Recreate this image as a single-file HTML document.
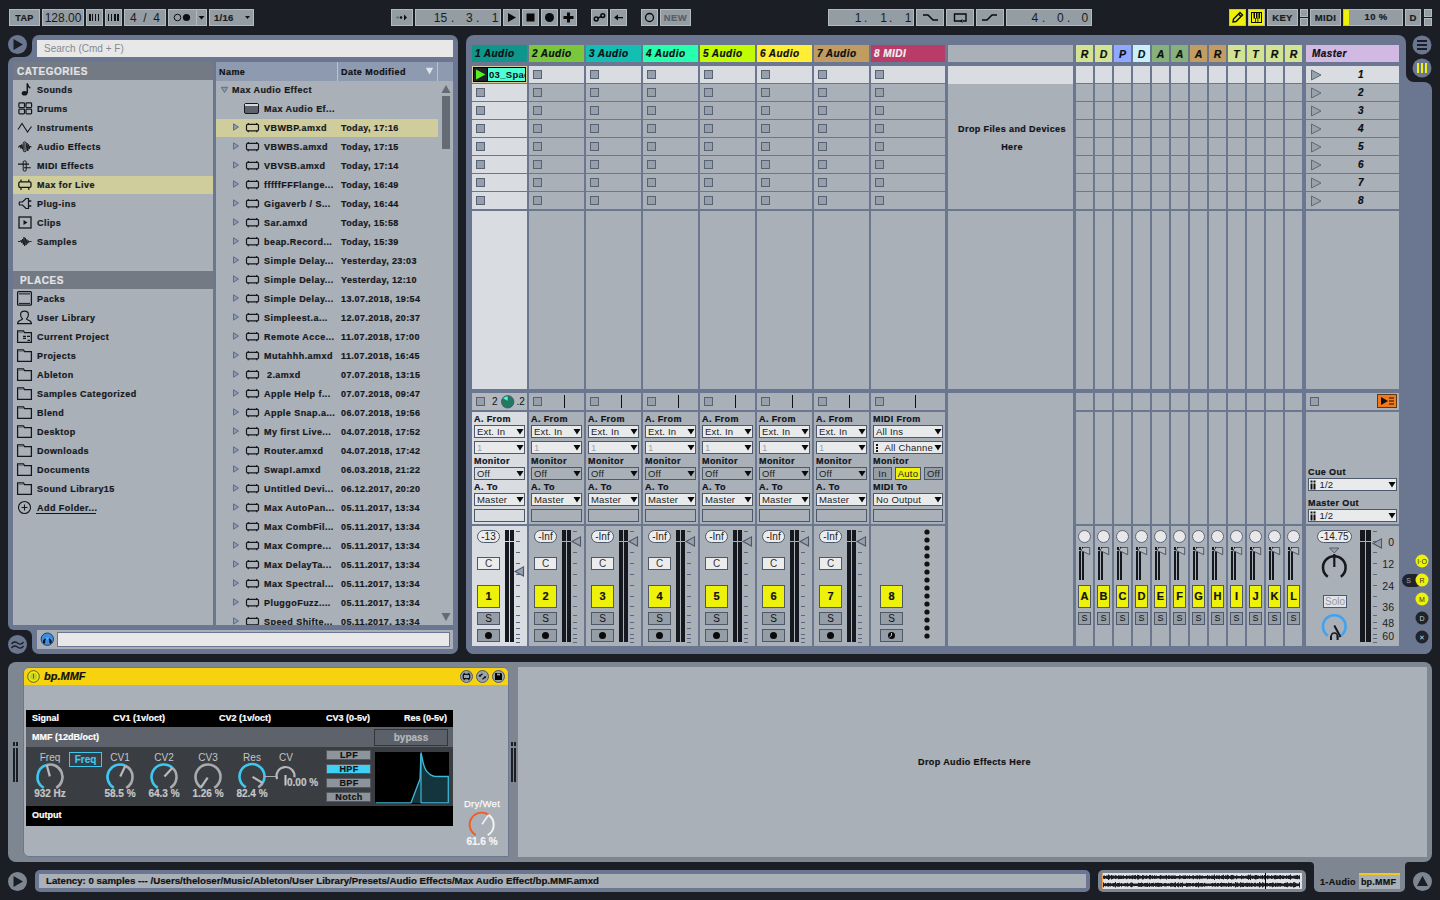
<!DOCTYPE html>
<html><head><meta charset="utf-8"><style>
html,body{margin:0;padding:0;}
body{width:1440px;height:900px;overflow:hidden;position:relative;background:#1b1e25;font-family:"Liberation Sans",sans-serif;}
.a{position:absolute;box-sizing:border-box;}
.t{white-space:nowrap;}
.b{-webkit-text-stroke:0.2px currentColor;}
svg.a{overflow:visible;}
</style></head><body>
<div class="a" style="left:9px;top:9px;width:31px;height:17px;background:#949ca4;border:1px solid #b3bac0;"></div>
<div class="a t b" style="left:9px;top:11.5px;height:13px;line-height:13px;font-size:9px;font-weight:bold;color:#1a1c20;width:31px;text-align:center;letter-spacing:0.4px;">TAP</div>
<div class="a" style="left:42px;top:9px;width:42px;height:17px;background:#949ca4;border:1px solid #b3bac0;"></div>
<div class="a t" style="left:42px;top:9.5px;height:16px;line-height:16px;font-size:12px;font-weight:normal;color:#1a1c20;width:42px;text-align:center;">128.00</div>
<div class="a" style="left:86px;top:9px;width:17px;height:17px;background:#949ca4;border:1px solid #b3bac0;"></div>
<svg class="a" style="left:86px;top:9px;" width="17" height="17" viewBox="0 0 17 17"><rect x="3" y="5" width="2" height="7" fill="#111"/><rect x="6" y="5" width="1" height="7" fill="#111"/><rect x="9" y="5" width="1" height="7" fill="#111"/><rect x="12" y="5" width="1" height="7" fill="#111"/></svg>
<div class="a" style="left:105px;top:9px;width:17px;height:17px;background:#949ca4;border:1px solid #b3bac0;"></div>
<svg class="a" style="left:105px;top:9px;" width="17" height="17" viewBox="0 0 17 17"><rect x="3" y="5" width="1" height="7" fill="#111"/><rect x="6" y="5" width="1" height="7" fill="#111"/><rect x="9" y="5" width="2" height="7" fill="#111"/><rect x="12" y="5" width="2" height="7" fill="#111"/></svg>
<div class="a" style="left:124px;top:9px;width:42px;height:17px;background:#949ca4;border:1px solid #b3bac0;"></div>
<div class="a t" style="left:124px;top:9.5px;height:16px;line-height:16px;font-size:12px;font-weight:normal;color:#1a1c20;width:42px;text-align:center;">4&nbsp;&nbsp;/&nbsp;&nbsp;4</div>
<div class="a" style="left:168px;top:9px;width:39px;height:17px;background:#949ca4;border:1px solid #b3bac0;"></div>
<div class="a" style="left:196px;top:10px;width:1px;height:15px;background:#b3bac0;"></div>
<svg class="a" style="left:168px;top:9px;" width="39" height="17" viewBox="0 0 39 17"><circle cx="9.5" cy="8.5" r="3.3" fill="none" stroke="#111" stroke-width="1"/><circle cx="18.5" cy="8.5" r="3.6" fill="#0d0f14"/><path d="M30.5 7 L36.5 7 L33.5 10.5 Z" fill="#111"/></svg>
<div class="a" style="left:209px;top:9px;width:45px;height:17px;background:#949ca4;border:1px solid #b3bac0;"></div>
<div class="a t b" style="left:214px;top:11.25px;height:13.5px;line-height:13.5px;font-size:9.5px;font-weight:bold;color:#1a1c20;letter-spacing:0.3px;">1/16</div>
<svg class="a" style="left:209px;top:9px;" width="45" height="17" viewBox="0 0 45 17"><path d="M36 7 L41 7 L38.5 10 Z" fill="#111"/></svg>
<div class="a" style="left:391px;top:9px;width:22px;height:17px;background:#949ca4;border:1px solid #b3bac0;"></div>
<svg class="a" style="left:391px;top:9px;" width="22" height="17" viewBox="0 0 22 17"><circle cx="6.5" cy="8.5" r="1.2" fill="#6a7078"/><circle cx="10" cy="8.5" r="1.3" fill="#111"/><path d="M13 5.5 L16 8.5 L13 11.5 Z" fill="#111"/></svg>
<div class="a" style="left:415px;top:9px;width:86px;height:17px;background:#949ca4;border:1px solid #b3bac0;"></div>
<div class="a t" style="left:427.1px;top:9.5px;height:16px;line-height:16px;font-size:12px;font-weight:normal;color:#1a1c20;width:20px;text-align:right;">15</div>
<div class="a t" style="left:452.6px;top:9.5px;height:16px;line-height:16px;font-size:12px;font-weight:normal;color:#1a1c20;width:20px;text-align:right;">3</div>
<div class="a t" style="left:478.5px;top:9.5px;height:16px;line-height:16px;font-size:12px;font-weight:normal;color:#1a1c20;width:20px;text-align:right;">1</div>
<div class="a t" style="left:476px;top:9.5px;height:16px;line-height:16px;font-size:12px;font-weight:normal;color:#1a1c20;">.</div>
<div class="a t" style="left:451px;top:9.5px;height:16px;line-height:16px;font-size:12px;font-weight:normal;color:#1a1c20;">.</div>
<div class="a" style="left:503px;top:9px;width:17px;height:17px;background:#949ca4;border:1px solid #b3bac0;"></div>
<svg class="a" style="left:503px;top:9px;" width="17" height="17" viewBox="0 0 17 17"><path d="M5 4 L13 8.5 L5 13 Z" fill="#0a0a0a"/></svg>
<div class="a" style="left:522px;top:9px;width:17px;height:17px;background:#949ca4;border:1px solid #b3bac0;"></div>
<svg class="a" style="left:522px;top:9px;" width="17" height="17" viewBox="0 0 17 17"><rect x="4.5" y="4.5" width="8" height="8" fill="#0a0a0a"/></svg>
<div class="a" style="left:541px;top:9px;width:17px;height:17px;background:#949ca4;border:1px solid #b3bac0;"></div>
<svg class="a" style="left:541px;top:9px;" width="17" height="17" viewBox="0 0 17 17"><circle cx="8.5" cy="8.5" r="4.5" fill="#0a0c14"/></svg>
<div class="a" style="left:560px;top:9px;width:17px;height:17px;background:#949ca4;border:1px solid #b3bac0;"></div>
<svg class="a" style="left:560px;top:9px;" width="17" height="17" viewBox="0 0 17 17"><rect x="3.5" y="7" width="10" height="3" fill="#0a0a0a"/><rect x="7" y="3.5" width="3" height="10" fill="#0a0a0a"/></svg>
<div class="a" style="left:591px;top:9px;width:17px;height:17px;background:#949ca4;border:1px solid #b3bac0;"></div>
<svg class="a" style="left:591px;top:9px;" width="17" height="17" viewBox="0 0 17 17"><circle cx="5.2" cy="10" r="1.9" fill="none" stroke="#0a0a0a" stroke-width="1.5"/><circle cx="11.8" cy="6.6" r="1.9" fill="none" stroke="#0a0a0a" stroke-width="1.5"/><path d="M6.8 9.1 L10.2 7.5" stroke="#0a0a0a" stroke-width="1.5"/></svg>
<div class="a" style="left:610px;top:9px;width:17px;height:17px;background:#949ca4;border:1px solid #b3bac0;"></div>
<svg class="a" style="left:610px;top:9px;" width="17" height="17" viewBox="0 0 17 17"><path d="M4 8.5 L8 5.5 L8 11.5 Z" fill="#0a0a0a"/><rect x="7" y="8" width="6" height="1.3" fill="#0a0a0a"/></svg>
<div class="a" style="left:641px;top:9px;width:17px;height:17px;background:#949ca4;border:1px solid #b3bac0;"></div>
<svg class="a" style="left:641px;top:9px;" width="17" height="17" viewBox="0 0 17 17"><circle cx="8.5" cy="8.5" r="4" fill="none" stroke="#0a0a0a" stroke-width="1.3"/></svg>
<div class="a" style="left:660px;top:9px;width:31px;height:17px;background:#949ca4;border:1px solid #b3bac0;"></div>
<div class="a t b" style="left:660px;top:11.25px;height:13.5px;line-height:13.5px;font-size:9.5px;font-weight:bold;color:#5a6068;width:31px;text-align:center;letter-spacing:0.4px;">NEW</div>
<div class="a" style="left:828px;top:9px;width:86px;height:17px;background:#949ca4;border:1px solid #b3bac0;"></div>
<div class="a t" style="left:841.5px;top:9.5px;height:16px;line-height:16px;font-size:12px;font-weight:normal;color:#1a1c20;width:20px;text-align:right;">1</div>
<div class="a t" style="left:867.0px;top:9.5px;height:16px;line-height:16px;font-size:12px;font-weight:normal;color:#1a1c20;width:20px;text-align:right;">1</div>
<div class="a t" style="left:891.5px;top:9.5px;height:16px;line-height:16px;font-size:12px;font-weight:normal;color:#1a1c20;width:20px;text-align:right;">1</div>
<div class="a t" style="left:889px;top:9.5px;height:16px;line-height:16px;font-size:12px;font-weight:normal;color:#1a1c20;">.</div>
<div class="a t" style="left:864px;top:9.5px;height:16px;line-height:16px;font-size:12px;font-weight:normal;color:#1a1c20;">.</div>
<div class="a" style="left:916px;top:9px;width:28px;height:17px;background:#949ca4;border:1px solid #b3bac0;"></div>
<svg class="a" style="left:916px;top:9px;" width="28" height="17" viewBox="0 0 28 17"><path d="M7 6 L12 6 L17 11 L22 11" fill="none" stroke="#0a0a0a" stroke-width="1.5"/></svg>
<div class="a" style="left:946px;top:9px;width:28px;height:17px;background:#949ca4;border:1px solid #b3bac0;"></div>
<svg class="a" style="left:946px;top:9px;" width="28" height="17" viewBox="0 0 28 17"><path d="M15 12 L8.5 12 L8.5 5 L20 5 L20 12 L17 12" fill="none" stroke="#0a0a0a" stroke-width="1.4"/><path d="M14 12 L16.5 10 L16.5 14 Z" fill="#0a0a0a"/></svg>
<div class="a" style="left:976px;top:9px;width:28px;height:17px;background:#949ca4;border:1px solid #b3bac0;"></div>
<svg class="a" style="left:976px;top:9px;" width="28" height="17" viewBox="0 0 28 17"><path d="M6 11 L11 11 L16 6 L21 6" fill="none" stroke="#0a0a0a" stroke-width="1.5"/></svg>
<div class="a" style="left:1006px;top:9px;width:86px;height:17px;background:#949ca4;border:1px solid #b3bac0;"></div>
<div class="a t" style="left:1018.0999999999999px;top:9.5px;height:16px;line-height:16px;font-size:12px;font-weight:normal;color:#1a1c20;width:20px;text-align:right;">4</div>
<div class="a t" style="left:1043.6px;top:9.5px;height:16px;line-height:16px;font-size:12px;font-weight:normal;color:#1a1c20;width:20px;text-align:right;">0</div>
<div class="a t" style="left:1068.1px;top:9.5px;height:16px;line-height:16px;font-size:12px;font-weight:normal;color:#1a1c20;width:20px;text-align:right;">0</div>
<div class="a t" style="left:1067px;top:9.5px;height:16px;line-height:16px;font-size:12px;font-weight:normal;color:#1a1c20;">.</div>
<div class="a t" style="left:1042px;top:9.5px;height:16px;line-height:16px;font-size:12px;font-weight:normal;color:#1a1c20;">.</div>
<div class="a" style="left:1229px;top:9px;width:17px;height:17px;background:#eef20a;border:1px solid #b3bac0;"></div>
<svg class="a" style="left:1229px;top:9px;" width="17" height="17" viewBox="0 0 17 17"><path d="M4 13 L4.5 10 L11 3.5 L13.5 6 L7 12.5 Z" fill="none" stroke="#0a0a0a" stroke-width="1.4"/><path d="M9.5 5 L12 7.5" stroke="#0a0a0a" stroke-width="1.2"/></svg>
<div class="a" style="left:1248px;top:9px;width:17px;height:17px;background:#eef20a;border:1px solid #b3bac0;"></div>
<svg class="a" style="left:1248px;top:9px;" width="17" height="17" viewBox="0 0 17 17"><rect x="3.5" y="3.5" width="10" height="10" fill="none" stroke="#0a0a0a" stroke-width="1"/><rect x="5.5" y="3.5" width="1.5" height="6" fill="#0a0a0a"/><rect x="8" y="3.5" width="1.5" height="6" fill="#0a0a0a"/><rect x="10.5" y="3.5" width="1.5" height="6" fill="#0a0a0a"/><rect x="7" y="9" width="0.8" height="4.5" fill="#0a0a0a"/><rect x="9.5" y="9" width="0.8" height="4.5" fill="#0a0a0a"/></svg>
<div class="a" style="left:1267px;top:9px;width:31px;height:17px;background:#949ca4;border:1px solid #b3bac0;"></div>
<div class="a t b" style="left:1267px;top:11.25px;height:13.5px;line-height:13.5px;font-size:9.5px;font-weight:bold;color:#1a1c20;width:31px;text-align:center;letter-spacing:0.3px;">KEY</div>
<div class="a" style="left:1300px;top:9px;width:8px;height:8px;background:#949ca4;border:1px solid #b3bac0;"></div>
<div class="a" style="left:1300px;top:18px;width:8px;height:8px;background:#949ca4;border:1px solid #b3bac0;"></div>
<div class="a" style="left:1310px;top:9px;width:31px;height:17px;background:#949ca4;border:1px solid #b3bac0;"></div>
<div class="a t b" style="left:1310px;top:11.25px;height:13.5px;line-height:13.5px;font-size:9.5px;font-weight:bold;color:#1a1c20;width:31px;text-align:center;letter-spacing:0.3px;">MIDI</div>
<div class="a" style="left:1343px;top:9px;width:60px;height:17px;background:#949ca4;border:1px solid #b3bac0;"></div>
<div class="a" style="left:1344px;top:10px;width:5px;height:15px;background:#eef20a;"></div>
<div class="a t b" style="left:1349px;top:10.25px;height:13.5px;line-height:13.5px;font-size:9.5px;font-weight:bold;color:#1a1c20;width:54px;text-align:center;letter-spacing:0.3px;">10 %</div>
<div class="a" style="left:1405px;top:9px;width:16px;height:17px;background:#949ca4;border:1px solid #b3bac0;"></div>
<div class="a t b" style="left:1405px;top:11.25px;height:13.5px;line-height:13.5px;font-size:9.5px;font-weight:bold;color:#1a1c20;width:16px;text-align:center;">D</div>
<div class="a" style="left:1424px;top:9px;width:8px;height:8px;background:#949ca4;border:1px solid #b3bac0;"></div>
<div class="a" style="left:1424px;top:18px;width:8px;height:8px;background:#949ca4;border:1px solid #b3bac0;"></div>
<div class="a" style="left:32px;top:35px;width:426px;height:35px;background:#6b7790;border-radius:7px 7px 0 0;"></div>
<div class="a" style="left:8px;top:57px;width:450px;height:573px;background:#6b7790;border-radius:7px 7px 0 6px;"></div>
<svg class="a" style="left:24px;top:49px;" width="8" height="8" viewBox="0 0 8 8"><path d="M0 8 L8 8 L8 0 A8 8 0 0 1 0 8 Z" fill="#6b7790"/></svg>
<div class="a" style="left:32px;top:600px;width:426px;height:54px;background:#6b7790;border-radius:0 0 7px 7px;"></div>
<svg class="a" style="left:26px;top:630px;" width="6" height="6" viewBox="0 0 6 6"><path d="M0 0 L6 0 L6 6 A6 6 0 0 0 0 0 Z" fill="#6b7790"/></svg>
<svg class="a" style="left:8px;top:35px;" width="19" height="19" viewBox="0 0 19 19"><circle cx="9.5" cy="9.5" r="9.5" fill="#6b7790"/><path d="M5.5 4 L15 9.5 L5.5 15 Z" fill="#1b1e25"/></svg>
<svg class="a" style="left:8px;top:635px;" width="19" height="19" viewBox="0 0 19 19"><circle cx="9.5" cy="9.5" r="9.5" fill="#6b7790"/><path d="M3.5 9 Q6 5.5 9.5 8 Q13 10.5 15.5 7 M3.5 13 Q6 9.5 9.5 12 Q13 14.5 15.5 11" fill="none" stroke="#1b1e25" stroke-width="1.3"/></svg>
<div class="a" style="left:37px;top:40px;width:416px;height:17px;background:#e8e8e8;"></div>
<div class="a t" style="left:44px;top:41.5px;height:14px;line-height:14px;font-size:10px;font-weight:normal;color:#858a90;">Search (Cmd + F)</div>
<div class="a" style="left:13px;top:62px;width:200px;height:563px;background:#a9b0b7;"></div>
<div class="a" style="left:13px;top:62px;width:200px;height:18px;background:#737a83;"></div>
<div class="a t b" style="left:17px;top:64.5px;height:14px;line-height:14px;font-size:10px;font-weight:bold;color:#e2e4e6;letter-spacing:0.55px;">CATEGORIES</div>
<svg class="a" style="left:18px;top:81.5px;" width="15" height="15" viewBox="0 0 15 15"><path d="M9.3 1.5 L9.3 11" stroke="#15171c" stroke-width="1.5"/><path d="M9.3 1.5 Q10 4.5 12.3 6.3" fill="none" stroke="#15171c" stroke-width="1.3"/><ellipse cx="6.6" cy="11.3" rx="2.9" ry="2.3" fill="#15171c"/></svg>
<div class="a t b" style="left:37px;top:83.5px;height:13px;line-height:13px;font-size:9px;font-weight:bold;color:#15171c;letter-spacing:0.45px;">Sounds</div>
<svg class="a" style="left:18px;top:100.5px;" width="15" height="15" viewBox="0 0 15 15"><rect x="0.9" y="1.9" width="5.6" height="4.6" rx="0.8" fill="none" stroke="#15171c" stroke-width="1.2"/><rect x="8" y="1.9" width="5.6" height="4.6" rx="0.8" fill="none" stroke="#15171c" stroke-width="1.2"/><rect x="0.9" y="8.2" width="5.6" height="4.6" rx="0.8" fill="none" stroke="#15171c" stroke-width="1.2"/><rect x="8" y="8.2" width="5.6" height="4.6" rx="0.8" fill="none" stroke="#15171c" stroke-width="1.2"/></svg>
<div class="a t b" style="left:37px;top:102.5px;height:13px;line-height:13px;font-size:9px;font-weight:bold;color:#15171c;letter-spacing:0.45px;">Drums</div>
<svg class="a" style="left:18px;top:119.5px;" width="15" height="15" viewBox="0 0 15 15"><path d="M0 9.5 L4 3.5 L9.5 12 L13.5 6.5" fill="none" stroke="#15171c" stroke-width="1.1"/></svg>
<div class="a t b" style="left:37px;top:121.5px;height:13px;line-height:13px;font-size:9px;font-weight:bold;color:#15171c;letter-spacing:0.45px;">Instruments</div>
<svg class="a" style="left:18px;top:138.5px;" width="15" height="15" viewBox="0 0 15 15"><path d="M0 7.9 L1.5 7.9 L2.3 6 L3 9.5 L3.8 5.5 L4.6 10 L5 7.9 M8.4 7.9 L9 4 L9.8 12 L10.6 5.5 L11.3 10 L12 7 L12.6 7.9 L13.5 7.9" fill="none" stroke="#15171c" stroke-width="1"/><rect x="5.2" y="2.9" width="3" height="9.8" rx="1.5" fill="#a0a7ae" stroke="#15171c" stroke-width="1"/><path d="M6.7 4 L6.7 11.5" stroke="#15171c" stroke-width="0.7"/></svg>
<div class="a t b" style="left:37px;top:140.5px;height:13px;line-height:13px;font-size:9px;font-weight:bold;color:#15171c;letter-spacing:0.45px;">Audio Effects</div>
<svg class="a" style="left:18px;top:157.5px;" width="15" height="15" viewBox="0 0 15 15"><path d="M0 6.1 L11 6.1 M6 9.7 L12.8 9.7" stroke="#15171c" stroke-width="1.1"/><rect x="5.2" y="2.9" width="3" height="10.2" rx="1.3" fill="none" stroke="#15171c" stroke-width="1"/></svg>
<div class="a t b" style="left:37px;top:159.5px;height:13px;line-height:13px;font-size:9px;font-weight:bold;color:#15171c;letter-spacing:0.45px;">MIDI Effects</div>
<div class="a" style="left:13px;top:176px;width:200px;height:18px;background:#cfcd9c;"></div>
<svg class="a" style="left:18px;top:176.5px;" width="15" height="15" viewBox="0 0 15 15"><rect x="0.8" y="4.9" width="12.2" height="5.4" rx="1.3" fill="none" stroke="#15171c" stroke-width="1.3"/><path d="M3 2.4 L3 4.9 M10.8 2.4 L10.8 4.9 M3 10.3 L3 13 M10.8 10.3 L10.8 13" stroke="#15171c" stroke-width="1.2"/></svg>
<div class="a t b" style="left:37px;top:178.5px;height:13px;line-height:13px;font-size:9px;font-weight:bold;color:#15171c;letter-spacing:0.45px;">Max for Live</div>
<svg class="a" style="left:18px;top:195.5px;" width="15" height="15" viewBox="0 0 15 15"><path d="M10.5 2.5 L10.5 12.5 L8 12.5 L4.5 9 L1.5 9 Q0.8 7.5 1.5 6 L4.5 6 L8 2.5 Z" fill="none" stroke="#15171c" stroke-width="1.2"/><path d="M10.5 5 L13.3 5 M10.5 10 L13.3 10" stroke="#15171c" stroke-width="1.4"/></svg>
<div class="a t b" style="left:37px;top:197.5px;height:13px;line-height:13px;font-size:9px;font-weight:bold;color:#15171c;letter-spacing:0.45px;">Plug-ins</div>
<svg class="a" style="left:18px;top:214.5px;" width="15" height="15" viewBox="0 0 15 15"><rect x="1" y="2" width="12" height="11" fill="none" stroke="#15171c" stroke-width="1.3"/><path d="M5.5 5 L9.5 7.5 L5.5 10 Z" fill="#15171c"/></svg>
<div class="a t b" style="left:37px;top:216.5px;height:13px;line-height:13px;font-size:9px;font-weight:bold;color:#15171c;letter-spacing:0.45px;">Clips</div>
<svg class="a" style="left:18px;top:233.5px;" width="15" height="15" viewBox="0 0 15 15"><path d="M0 7.5 L2.5 7.5 L3.2 6 L3.9 9 L4.6 5 L5.3 10.5 L6 3 L6.7 12 L7.4 4 L8.1 11 L8.8 5.5 L9.5 9.5 L10.2 6.5 L10.9 8.5 L11.5 7.5 L13.5 7.5" fill="none" stroke="#15171c" stroke-width="0.9"/></svg>
<div class="a t b" style="left:37px;top:235.5px;height:13px;line-height:13px;font-size:9px;font-weight:bold;color:#15171c;letter-spacing:0.45px;">Samples</div>
<div class="a" style="left:13px;top:271px;width:200px;height:18px;background:#737a83;"></div>
<div class="a t b" style="left:20px;top:273.5px;height:14px;line-height:14px;font-size:10px;font-weight:bold;color:#e2e4e6;letter-spacing:0.55px;">PLACES</div>
<svg class="a" style="left:16px;top:290px;" width="17" height="17" viewBox="0 0 17 17"><rect x="1.6" y="1.6" width="13.8" height="13.6" rx="1" fill="none" stroke="#15171c" stroke-width="1.25"/><path d="M3 3.9 L14 3.9 M3 13.4 L14 13.4" stroke="#15171c" stroke-width="1"/></svg>
<div class="a t b" style="left:37px;top:292.5px;height:13px;line-height:13px;font-size:9px;font-weight:bold;color:#15171c;letter-spacing:0.45px;">Packs</div>
<svg class="a" style="left:16px;top:309px;" width="17" height="17" viewBox="0 0 17 17"><path d="M1.6 14.6 Q1.6 12 5 11 Q6.5 10.6 6.5 9.8 Q4.6 8.4 4.6 5.5 Q4.6 2.2 8.5 2.2 Q12.4 2.2 12.4 5.5 Q12.4 8.4 10.5 9.8 Q10.5 10.6 12 11 Q15.4 12 15.4 14.6 Z" fill="none" stroke="#15171c" stroke-width="1.2"/></svg>
<div class="a t b" style="left:37px;top:311.5px;height:13px;line-height:13px;font-size:9px;font-weight:bold;color:#15171c;letter-spacing:0.45px;">User Library</div>
<svg class="a" style="left:16px;top:328px;" width="17" height="17" viewBox="0 0 17 17"><path d="M1.6 14.4 L1.6 2.9 L7.5 2.9 L8.5 4.6 L15.4 4.6 L15.4 14.4 Z" fill="none" stroke="#15171c" stroke-width="1.25"/><rect x="2.2" y="3.5" width="5" height="1.3" fill="#6a717a"/><path d="M7 8.4 L10 8.4 M11 8.4 L14 8.4 M7 10.4 L10 10.4 M11.5 12.4 L14 12.4" stroke="#15171c" stroke-width="1.1"/></svg>
<div class="a t b" style="left:37px;top:330.5px;height:13px;line-height:13px;font-size:9px;font-weight:bold;color:#15171c;letter-spacing:0.45px;">Current Project</div>
<svg class="a" style="left:16px;top:347px;" width="17" height="17" viewBox="0 0 17 17"><path d="M1.6 14.4 L1.6 2.9 L7.5 2.9 L8.5 4.6 L15.4 4.6 L15.4 14.4 Z" fill="none" stroke="#15171c" stroke-width="1.25"/><rect x="2.2" y="3.5" width="5" height="1.3" fill="#6a717a"/></svg>
<div class="a t b" style="left:37px;top:349.5px;height:13px;line-height:13px;font-size:9px;font-weight:bold;color:#15171c;letter-spacing:0.45px;">Projects</div>
<svg class="a" style="left:16px;top:366px;" width="17" height="17" viewBox="0 0 17 17"><path d="M1.6 14.4 L1.6 2.9 L7.5 2.9 L8.5 4.6 L15.4 4.6 L15.4 14.4 Z" fill="none" stroke="#15171c" stroke-width="1.25"/><rect x="2.2" y="3.5" width="5" height="1.3" fill="#6a717a"/></svg>
<div class="a t b" style="left:37px;top:368.5px;height:13px;line-height:13px;font-size:9px;font-weight:bold;color:#15171c;letter-spacing:0.45px;">Ableton</div>
<svg class="a" style="left:16px;top:385px;" width="17" height="17" viewBox="0 0 17 17"><path d="M1.6 14.4 L1.6 2.9 L7.5 2.9 L8.5 4.6 L15.4 4.6 L15.4 14.4 Z" fill="none" stroke="#15171c" stroke-width="1.25"/><rect x="2.2" y="3.5" width="5" height="1.3" fill="#6a717a"/></svg>
<div class="a t b" style="left:37px;top:387.5px;height:13px;line-height:13px;font-size:9px;font-weight:bold;color:#15171c;letter-spacing:0.45px;">Samples Categorized</div>
<svg class="a" style="left:16px;top:404px;" width="17" height="17" viewBox="0 0 17 17"><path d="M1.6 14.4 L1.6 2.9 L7.5 2.9 L8.5 4.6 L15.4 4.6 L15.4 14.4 Z" fill="none" stroke="#15171c" stroke-width="1.25"/><rect x="2.2" y="3.5" width="5" height="1.3" fill="#6a717a"/></svg>
<div class="a t b" style="left:37px;top:406.5px;height:13px;line-height:13px;font-size:9px;font-weight:bold;color:#15171c;letter-spacing:0.45px;">Blend</div>
<svg class="a" style="left:16px;top:423px;" width="17" height="17" viewBox="0 0 17 17"><path d="M1.6 14.4 L1.6 2.9 L7.5 2.9 L8.5 4.6 L15.4 4.6 L15.4 14.4 Z" fill="none" stroke="#15171c" stroke-width="1.25"/><rect x="2.2" y="3.5" width="5" height="1.3" fill="#6a717a"/></svg>
<div class="a t b" style="left:37px;top:425.5px;height:13px;line-height:13px;font-size:9px;font-weight:bold;color:#15171c;letter-spacing:0.45px;">Desktop</div>
<svg class="a" style="left:16px;top:442px;" width="17" height="17" viewBox="0 0 17 17"><path d="M1.6 14.4 L1.6 2.9 L7.5 2.9 L8.5 4.6 L15.4 4.6 L15.4 14.4 Z" fill="none" stroke="#15171c" stroke-width="1.25"/><rect x="2.2" y="3.5" width="5" height="1.3" fill="#6a717a"/></svg>
<div class="a t b" style="left:37px;top:444.5px;height:13px;line-height:13px;font-size:9px;font-weight:bold;color:#15171c;letter-spacing:0.45px;">Downloads</div>
<svg class="a" style="left:16px;top:461px;" width="17" height="17" viewBox="0 0 17 17"><path d="M1.6 14.4 L1.6 2.9 L7.5 2.9 L8.5 4.6 L15.4 4.6 L15.4 14.4 Z" fill="none" stroke="#15171c" stroke-width="1.25"/><rect x="2.2" y="3.5" width="5" height="1.3" fill="#6a717a"/></svg>
<div class="a t b" style="left:37px;top:463.5px;height:13px;line-height:13px;font-size:9px;font-weight:bold;color:#15171c;letter-spacing:0.45px;">Documents</div>
<svg class="a" style="left:16px;top:480px;" width="17" height="17" viewBox="0 0 17 17"><path d="M1.6 14.4 L1.6 2.9 L7.5 2.9 L8.5 4.6 L15.4 4.6 L15.4 14.4 Z" fill="none" stroke="#15171c" stroke-width="1.25"/><rect x="2.2" y="3.5" width="5" height="1.3" fill="#6a717a"/></svg>
<div class="a t b" style="left:37px;top:482.5px;height:13px;line-height:13px;font-size:9px;font-weight:bold;color:#15171c;letter-spacing:0.45px;">Sound Library15</div>
<svg class="a" style="left:17px;top:499.5px;" width="15" height="15" viewBox="0 0 15 15"><circle cx="7.5" cy="7.5" r="6" fill="none" stroke="#15171c" stroke-width="1.1"/><path d="M7.5 4.5 L7.5 10.5 M4.5 7.5 L10.5 7.5" stroke="#15171c" stroke-width="1.1"/></svg>
<div class="a t b" style="left:37px;top:501.5px;height:13px;line-height:13px;font-size:9px;font-weight:bold;color:#15171c;letter-spacing:0.45px;">Add Folder...</div>
<div class="a" style="left:36px;top:513px;width:60px;height:1px;background:#15171c;"></div>
<div class="a" style="left:216px;top:62px;width:237px;height:563px;background:#a9b0b7;"></div>
<div class="a" style="left:216px;top:62px;width:237px;height:19px;background:#8d9ab0;"></div>
<div class="a t b" style="left:219px;top:65.5px;height:13px;line-height:13px;font-size:9px;font-weight:bold;color:#111;letter-spacing:0.45px;">Name</div>
<div class="a" style="left:337px;top:62px;width:1px;height:19px;background:#b8c2d2;"></div>
<div class="a t b" style="left:341px;top:65.5px;height:13px;line-height:13px;font-size:9px;font-weight:bold;color:#111;letter-spacing:0.45px;">Date Modified</div>
<svg class="a" style="left:425px;top:66px;" width="10" height="10" viewBox="0 0 10 10"><path d="M0.8 1.8 L8.2 1.8 L4.5 8.4 Z" fill="#dfe3ea"/></svg>
<div class="a" style="left:437px;top:62px;width:1px;height:19px;background:#b8c2d2;"></div>
<svg class="a" style="left:441px;top:84px;" width="10" height="10" viewBox="0 0 10 10"><path d="M5 1 L9.5 9 L0.5 9 Z" fill="#646b74"/></svg>
<div class="a" style="left:442px;top:96px;width:8px;height:53px;background:#646b74;"></div>
<svg class="a" style="left:441px;top:612px;" width="10" height="10" viewBox="0 0 10 10"><path d="M0.5 1 L9.5 1 L5 9 Z" fill="#646b74"/></svg>
<svg class="a" style="left:220px;top:86px;" width="10" height="10" viewBox="0 0 10 10"><path d="M1.3 1.3 L7.7 1.3 L4.5 6.5 Z" fill="#8d9ab0" stroke="#5e6d88" stroke-width="1"/></svg>
<div class="a t b" style="left:232px;top:83.5px;height:13px;line-height:13px;font-size:9px;font-weight:bold;color:#15171c;letter-spacing:0.45px;">Max Audio Effect</div>
<svg class="a" style="left:243px;top:102px;" width="17" height="13" viewBox="0 0 17 13"><rect x="1.5" y="1.5" width="14" height="10" rx="1.5" fill="#5c636d" stroke="#15171c" stroke-width="1"/><rect x="2" y="2" width="13" height="2" fill="#d6d9dc"/></svg>
<div class="a t b" style="left:264px;top:102.5px;height:13px;line-height:13px;font-size:9px;font-weight:bold;color:#15171c;letter-spacing:0.45px;">Max Audio Ef...</div>
<div class="a" style="left:216px;top:119px;width:222px;height:18px;background:#cfcd9c;"></div>
<svg class="a" style="left:232px;top:123px;" width="10" height="10" viewBox="0 0 10 10"><path d="M1.5 0.8 L6.5 4 L1.5 7.2 Z" fill="#8d9ab0" stroke="#5e6d88" stroke-width="1"/></svg>
<svg class="a" style="left:244px;top:120.5px;" width="17" height="13" viewBox="0 0 17 13"><rect x="2.5" y="3.3" width="12" height="6.5" rx="1.3" fill="none" stroke="#15171c" stroke-width="1.2"/><path d="M4.3 2 L4.3 3.3 M12.7 2 L12.7 3.3 M4.3 9.8 L4.3 11.2 M12.7 9.8 L12.7 11.2" stroke="#15171c" stroke-width="1.2"/></svg>
<div class="a t b" style="left:264px;top:121.5px;height:13px;line-height:13px;font-size:9px;font-weight:bold;color:#15171c;letter-spacing:0.45px;">VBWBP.amxd</div>
<div class="a t b" style="left:341px;top:121.5px;height:13px;line-height:13px;font-size:9px;font-weight:bold;color:#15171c;letter-spacing:0.37px;">Today, 17:16</div>
<svg class="a" style="left:232px;top:142px;" width="10" height="10" viewBox="0 0 10 10"><path d="M1.5 0.8 L6.5 4 L1.5 7.2 Z" fill="#8d9ab0" stroke="#5e6d88" stroke-width="1"/></svg>
<svg class="a" style="left:244px;top:139.5px;" width="17" height="13" viewBox="0 0 17 13"><rect x="2.5" y="3.3" width="12" height="6.5" rx="1.3" fill="none" stroke="#15171c" stroke-width="1.2"/><path d="M4.3 2 L4.3 3.3 M12.7 2 L12.7 3.3 M4.3 9.8 L4.3 11.2 M12.7 9.8 L12.7 11.2" stroke="#15171c" stroke-width="1.2"/></svg>
<div class="a t b" style="left:264px;top:140.5px;height:13px;line-height:13px;font-size:9px;font-weight:bold;color:#15171c;letter-spacing:0.45px;">VBWBS.amxd</div>
<div class="a t b" style="left:341px;top:140.5px;height:13px;line-height:13px;font-size:9px;font-weight:bold;color:#15171c;letter-spacing:0.37px;">Today, 17:15</div>
<svg class="a" style="left:232px;top:161px;" width="10" height="10" viewBox="0 0 10 10"><path d="M1.5 0.8 L6.5 4 L1.5 7.2 Z" fill="#8d9ab0" stroke="#5e6d88" stroke-width="1"/></svg>
<svg class="a" style="left:244px;top:158.5px;" width="17" height="13" viewBox="0 0 17 13"><rect x="2.5" y="3.3" width="12" height="6.5" rx="1.3" fill="none" stroke="#15171c" stroke-width="1.2"/><path d="M4.3 2 L4.3 3.3 M12.7 2 L12.7 3.3 M4.3 9.8 L4.3 11.2 M12.7 9.8 L12.7 11.2" stroke="#15171c" stroke-width="1.2"/></svg>
<div class="a t b" style="left:264px;top:159.5px;height:13px;line-height:13px;font-size:9px;font-weight:bold;color:#15171c;letter-spacing:0.45px;">VBVSB.amxd</div>
<div class="a t b" style="left:341px;top:159.5px;height:13px;line-height:13px;font-size:9px;font-weight:bold;color:#15171c;letter-spacing:0.37px;">Today, 17:14</div>
<svg class="a" style="left:232px;top:180px;" width="10" height="10" viewBox="0 0 10 10"><path d="M1.5 0.8 L6.5 4 L1.5 7.2 Z" fill="#8d9ab0" stroke="#5e6d88" stroke-width="1"/></svg>
<svg class="a" style="left:244px;top:177.5px;" width="17" height="13" viewBox="0 0 17 13"><rect x="2.5" y="3.3" width="12" height="6.5" rx="1.3" fill="none" stroke="#15171c" stroke-width="1.2"/><path d="M4.3 2 L4.3 3.3 M12.7 2 L12.7 3.3 M4.3 9.8 L4.3 11.2 M12.7 9.8 L12.7 11.2" stroke="#15171c" stroke-width="1.2"/></svg>
<div class="a t b" style="left:264px;top:178.5px;height:13px;line-height:13px;font-size:9px;font-weight:bold;color:#15171c;letter-spacing:0.45px;">fffffFFFlange...</div>
<div class="a t b" style="left:341px;top:178.5px;height:13px;line-height:13px;font-size:9px;font-weight:bold;color:#15171c;letter-spacing:0.37px;">Today, 16:49</div>
<svg class="a" style="left:232px;top:199px;" width="10" height="10" viewBox="0 0 10 10"><path d="M1.5 0.8 L6.5 4 L1.5 7.2 Z" fill="#8d9ab0" stroke="#5e6d88" stroke-width="1"/></svg>
<svg class="a" style="left:244px;top:196.5px;" width="17" height="13" viewBox="0 0 17 13"><rect x="2.5" y="3.3" width="12" height="6.5" rx="1.3" fill="none" stroke="#15171c" stroke-width="1.2"/><path d="M4.3 2 L4.3 3.3 M12.7 2 L12.7 3.3 M4.3 9.8 L4.3 11.2 M12.7 9.8 L12.7 11.2" stroke="#15171c" stroke-width="1.2"/></svg>
<div class="a t b" style="left:264px;top:197.5px;height:13px;line-height:13px;font-size:9px;font-weight:bold;color:#15171c;letter-spacing:0.45px;">Gigaverb / S...</div>
<div class="a t b" style="left:341px;top:197.5px;height:13px;line-height:13px;font-size:9px;font-weight:bold;color:#15171c;letter-spacing:0.37px;">Today, 16:44</div>
<svg class="a" style="left:232px;top:218px;" width="10" height="10" viewBox="0 0 10 10"><path d="M1.5 0.8 L6.5 4 L1.5 7.2 Z" fill="#8d9ab0" stroke="#5e6d88" stroke-width="1"/></svg>
<svg class="a" style="left:244px;top:215.5px;" width="17" height="13" viewBox="0 0 17 13"><rect x="2.5" y="3.3" width="12" height="6.5" rx="1.3" fill="none" stroke="#15171c" stroke-width="1.2"/><path d="M4.3 2 L4.3 3.3 M12.7 2 L12.7 3.3 M4.3 9.8 L4.3 11.2 M12.7 9.8 L12.7 11.2" stroke="#15171c" stroke-width="1.2"/></svg>
<div class="a t b" style="left:264px;top:216.5px;height:13px;line-height:13px;font-size:9px;font-weight:bold;color:#15171c;letter-spacing:0.45px;">Sar.amxd</div>
<div class="a t b" style="left:341px;top:216.5px;height:13px;line-height:13px;font-size:9px;font-weight:bold;color:#15171c;letter-spacing:0.37px;">Today, 15:58</div>
<svg class="a" style="left:232px;top:237px;" width="10" height="10" viewBox="0 0 10 10"><path d="M1.5 0.8 L6.5 4 L1.5 7.2 Z" fill="#8d9ab0" stroke="#5e6d88" stroke-width="1"/></svg>
<svg class="a" style="left:244px;top:234.5px;" width="17" height="13" viewBox="0 0 17 13"><rect x="2.5" y="3.3" width="12" height="6.5" rx="1.3" fill="none" stroke="#15171c" stroke-width="1.2"/><path d="M4.3 2 L4.3 3.3 M12.7 2 L12.7 3.3 M4.3 9.8 L4.3 11.2 M12.7 9.8 L12.7 11.2" stroke="#15171c" stroke-width="1.2"/></svg>
<div class="a t b" style="left:264px;top:235.5px;height:13px;line-height:13px;font-size:9px;font-weight:bold;color:#15171c;letter-spacing:0.45px;">beap.Record...</div>
<div class="a t b" style="left:341px;top:235.5px;height:13px;line-height:13px;font-size:9px;font-weight:bold;color:#15171c;letter-spacing:0.37px;">Today, 15:39</div>
<svg class="a" style="left:232px;top:256px;" width="10" height="10" viewBox="0 0 10 10"><path d="M1.5 0.8 L6.5 4 L1.5 7.2 Z" fill="#8d9ab0" stroke="#5e6d88" stroke-width="1"/></svg>
<svg class="a" style="left:244px;top:253.5px;" width="17" height="13" viewBox="0 0 17 13"><rect x="2.5" y="3.3" width="12" height="6.5" rx="1.3" fill="none" stroke="#15171c" stroke-width="1.2"/><path d="M4.3 2 L4.3 3.3 M12.7 2 L12.7 3.3 M4.3 9.8 L4.3 11.2 M12.7 9.8 L12.7 11.2" stroke="#15171c" stroke-width="1.2"/></svg>
<div class="a t b" style="left:264px;top:254.5px;height:13px;line-height:13px;font-size:9px;font-weight:bold;color:#15171c;letter-spacing:0.45px;">Simple Delay...</div>
<div class="a t b" style="left:341px;top:254.5px;height:13px;line-height:13px;font-size:9px;font-weight:bold;color:#15171c;letter-spacing:0.37px;">Yesterday, 23:03</div>
<svg class="a" style="left:232px;top:275px;" width="10" height="10" viewBox="0 0 10 10"><path d="M1.5 0.8 L6.5 4 L1.5 7.2 Z" fill="#8d9ab0" stroke="#5e6d88" stroke-width="1"/></svg>
<svg class="a" style="left:244px;top:272.5px;" width="17" height="13" viewBox="0 0 17 13"><rect x="2.5" y="3.3" width="12" height="6.5" rx="1.3" fill="none" stroke="#15171c" stroke-width="1.2"/><path d="M4.3 2 L4.3 3.3 M12.7 2 L12.7 3.3 M4.3 9.8 L4.3 11.2 M12.7 9.8 L12.7 11.2" stroke="#15171c" stroke-width="1.2"/></svg>
<div class="a t b" style="left:264px;top:273.5px;height:13px;line-height:13px;font-size:9px;font-weight:bold;color:#15171c;letter-spacing:0.45px;">Simple Delay...</div>
<div class="a t b" style="left:341px;top:273.5px;height:13px;line-height:13px;font-size:9px;font-weight:bold;color:#15171c;letter-spacing:0.37px;">Yesterday, 12:10</div>
<svg class="a" style="left:232px;top:294px;" width="10" height="10" viewBox="0 0 10 10"><path d="M1.5 0.8 L6.5 4 L1.5 7.2 Z" fill="#8d9ab0" stroke="#5e6d88" stroke-width="1"/></svg>
<svg class="a" style="left:244px;top:291.5px;" width="17" height="13" viewBox="0 0 17 13"><rect x="2.5" y="3.3" width="12" height="6.5" rx="1.3" fill="none" stroke="#15171c" stroke-width="1.2"/><path d="M4.3 2 L4.3 3.3 M12.7 2 L12.7 3.3 M4.3 9.8 L4.3 11.2 M12.7 9.8 L12.7 11.2" stroke="#15171c" stroke-width="1.2"/></svg>
<div class="a t b" style="left:264px;top:292.5px;height:13px;line-height:13px;font-size:9px;font-weight:bold;color:#15171c;letter-spacing:0.45px;">Simple Delay...</div>
<div class="a t b" style="left:341px;top:292.5px;height:13px;line-height:13px;font-size:9px;font-weight:bold;color:#15171c;letter-spacing:0.37px;">13.07.2018, 19:54</div>
<svg class="a" style="left:232px;top:313px;" width="10" height="10" viewBox="0 0 10 10"><path d="M1.5 0.8 L6.5 4 L1.5 7.2 Z" fill="#8d9ab0" stroke="#5e6d88" stroke-width="1"/></svg>
<svg class="a" style="left:244px;top:310.5px;" width="17" height="13" viewBox="0 0 17 13"><rect x="2.5" y="3.3" width="12" height="6.5" rx="1.3" fill="none" stroke="#15171c" stroke-width="1.2"/><path d="M4.3 2 L4.3 3.3 M12.7 2 L12.7 3.3 M4.3 9.8 L4.3 11.2 M12.7 9.8 L12.7 11.2" stroke="#15171c" stroke-width="1.2"/></svg>
<div class="a t b" style="left:264px;top:311.5px;height:13px;line-height:13px;font-size:9px;font-weight:bold;color:#15171c;letter-spacing:0.45px;">Simpleest.a...</div>
<div class="a t b" style="left:341px;top:311.5px;height:13px;line-height:13px;font-size:9px;font-weight:bold;color:#15171c;letter-spacing:0.37px;">12.07.2018, 20:37</div>
<svg class="a" style="left:232px;top:332px;" width="10" height="10" viewBox="0 0 10 10"><path d="M1.5 0.8 L6.5 4 L1.5 7.2 Z" fill="#8d9ab0" stroke="#5e6d88" stroke-width="1"/></svg>
<svg class="a" style="left:244px;top:329.5px;" width="17" height="13" viewBox="0 0 17 13"><rect x="2.5" y="3.3" width="12" height="6.5" rx="1.3" fill="none" stroke="#15171c" stroke-width="1.2"/><path d="M4.3 2 L4.3 3.3 M12.7 2 L12.7 3.3 M4.3 9.8 L4.3 11.2 M12.7 9.8 L12.7 11.2" stroke="#15171c" stroke-width="1.2"/></svg>
<div class="a t b" style="left:264px;top:330.5px;height:13px;line-height:13px;font-size:9px;font-weight:bold;color:#15171c;letter-spacing:0.45px;">Remote Acce...</div>
<div class="a t b" style="left:341px;top:330.5px;height:13px;line-height:13px;font-size:9px;font-weight:bold;color:#15171c;letter-spacing:0.37px;">11.07.2018, 17:00</div>
<svg class="a" style="left:232px;top:351px;" width="10" height="10" viewBox="0 0 10 10"><path d="M1.5 0.8 L6.5 4 L1.5 7.2 Z" fill="#8d9ab0" stroke="#5e6d88" stroke-width="1"/></svg>
<svg class="a" style="left:244px;top:348.5px;" width="17" height="13" viewBox="0 0 17 13"><rect x="2.5" y="3.3" width="12" height="6.5" rx="1.3" fill="none" stroke="#15171c" stroke-width="1.2"/><path d="M4.3 2 L4.3 3.3 M12.7 2 L12.7 3.3 M4.3 9.8 L4.3 11.2 M12.7 9.8 L12.7 11.2" stroke="#15171c" stroke-width="1.2"/></svg>
<div class="a t b" style="left:264px;top:349.5px;height:13px;line-height:13px;font-size:9px;font-weight:bold;color:#15171c;letter-spacing:0.45px;">Mutahhh.amxd</div>
<div class="a t b" style="left:341px;top:349.5px;height:13px;line-height:13px;font-size:9px;font-weight:bold;color:#15171c;letter-spacing:0.37px;">11.07.2018, 16:45</div>
<svg class="a" style="left:232px;top:370px;" width="10" height="10" viewBox="0 0 10 10"><path d="M1.5 0.8 L6.5 4 L1.5 7.2 Z" fill="#8d9ab0" stroke="#5e6d88" stroke-width="1"/></svg>
<svg class="a" style="left:244px;top:367.5px;" width="17" height="13" viewBox="0 0 17 13"><rect x="2.5" y="3.3" width="12" height="6.5" rx="1.3" fill="none" stroke="#15171c" stroke-width="1.2"/><path d="M4.3 2 L4.3 3.3 M12.7 2 L12.7 3.3 M4.3 9.8 L4.3 11.2 M12.7 9.8 L12.7 11.2" stroke="#15171c" stroke-width="1.2"/></svg>
<div class="a t b" style="left:264px;top:368.5px;height:13px;line-height:13px;font-size:9px;font-weight:bold;color:#15171c;letter-spacing:0.45px;">&nbsp;2.amxd</div>
<div class="a t b" style="left:341px;top:368.5px;height:13px;line-height:13px;font-size:9px;font-weight:bold;color:#15171c;letter-spacing:0.37px;">07.07.2018, 13:15</div>
<svg class="a" style="left:232px;top:389px;" width="10" height="10" viewBox="0 0 10 10"><path d="M1.5 0.8 L6.5 4 L1.5 7.2 Z" fill="#8d9ab0" stroke="#5e6d88" stroke-width="1"/></svg>
<svg class="a" style="left:244px;top:386.5px;" width="17" height="13" viewBox="0 0 17 13"><rect x="2.5" y="3.3" width="12" height="6.5" rx="1.3" fill="none" stroke="#15171c" stroke-width="1.2"/><path d="M4.3 2 L4.3 3.3 M12.7 2 L12.7 3.3 M4.3 9.8 L4.3 11.2 M12.7 9.8 L12.7 11.2" stroke="#15171c" stroke-width="1.2"/></svg>
<div class="a t b" style="left:264px;top:387.5px;height:13px;line-height:13px;font-size:9px;font-weight:bold;color:#15171c;letter-spacing:0.45px;">Apple Help f...</div>
<div class="a t b" style="left:341px;top:387.5px;height:13px;line-height:13px;font-size:9px;font-weight:bold;color:#15171c;letter-spacing:0.37px;">07.07.2018, 09:47</div>
<svg class="a" style="left:232px;top:408px;" width="10" height="10" viewBox="0 0 10 10"><path d="M1.5 0.8 L6.5 4 L1.5 7.2 Z" fill="#8d9ab0" stroke="#5e6d88" stroke-width="1"/></svg>
<svg class="a" style="left:244px;top:405.5px;" width="17" height="13" viewBox="0 0 17 13"><rect x="2.5" y="3.3" width="12" height="6.5" rx="1.3" fill="none" stroke="#15171c" stroke-width="1.2"/><path d="M4.3 2 L4.3 3.3 M12.7 2 L12.7 3.3 M4.3 9.8 L4.3 11.2 M12.7 9.8 L12.7 11.2" stroke="#15171c" stroke-width="1.2"/></svg>
<div class="a t b" style="left:264px;top:406.5px;height:13px;line-height:13px;font-size:9px;font-weight:bold;color:#15171c;letter-spacing:0.45px;">Apple Snap.a...</div>
<div class="a t b" style="left:341px;top:406.5px;height:13px;line-height:13px;font-size:9px;font-weight:bold;color:#15171c;letter-spacing:0.37px;">06.07.2018, 19:56</div>
<svg class="a" style="left:232px;top:427px;" width="10" height="10" viewBox="0 0 10 10"><path d="M1.5 0.8 L6.5 4 L1.5 7.2 Z" fill="#8d9ab0" stroke="#5e6d88" stroke-width="1"/></svg>
<svg class="a" style="left:244px;top:424.5px;" width="17" height="13" viewBox="0 0 17 13"><rect x="2.5" y="3.3" width="12" height="6.5" rx="1.3" fill="none" stroke="#15171c" stroke-width="1.2"/><path d="M4.3 2 L4.3 3.3 M12.7 2 L12.7 3.3 M4.3 9.8 L4.3 11.2 M12.7 9.8 L12.7 11.2" stroke="#15171c" stroke-width="1.2"/></svg>
<div class="a t b" style="left:264px;top:425.5px;height:13px;line-height:13px;font-size:9px;font-weight:bold;color:#15171c;letter-spacing:0.45px;">My first Live...</div>
<div class="a t b" style="left:341px;top:425.5px;height:13px;line-height:13px;font-size:9px;font-weight:bold;color:#15171c;letter-spacing:0.37px;">04.07.2018, 17:52</div>
<svg class="a" style="left:232px;top:446px;" width="10" height="10" viewBox="0 0 10 10"><path d="M1.5 0.8 L6.5 4 L1.5 7.2 Z" fill="#8d9ab0" stroke="#5e6d88" stroke-width="1"/></svg>
<svg class="a" style="left:244px;top:443.5px;" width="17" height="13" viewBox="0 0 17 13"><rect x="2.5" y="3.3" width="12" height="6.5" rx="1.3" fill="none" stroke="#15171c" stroke-width="1.2"/><path d="M4.3 2 L4.3 3.3 M12.7 2 L12.7 3.3 M4.3 9.8 L4.3 11.2 M12.7 9.8 L12.7 11.2" stroke="#15171c" stroke-width="1.2"/></svg>
<div class="a t b" style="left:264px;top:444.5px;height:13px;line-height:13px;font-size:9px;font-weight:bold;color:#15171c;letter-spacing:0.45px;">Router.amxd</div>
<div class="a t b" style="left:341px;top:444.5px;height:13px;line-height:13px;font-size:9px;font-weight:bold;color:#15171c;letter-spacing:0.37px;">04.07.2018, 17:42</div>
<svg class="a" style="left:232px;top:465px;" width="10" height="10" viewBox="0 0 10 10"><path d="M1.5 0.8 L6.5 4 L1.5 7.2 Z" fill="#8d9ab0" stroke="#5e6d88" stroke-width="1"/></svg>
<svg class="a" style="left:244px;top:462.5px;" width="17" height="13" viewBox="0 0 17 13"><rect x="2.5" y="3.3" width="12" height="6.5" rx="1.3" fill="none" stroke="#15171c" stroke-width="1.2"/><path d="M4.3 2 L4.3 3.3 M12.7 2 L12.7 3.3 M4.3 9.8 L4.3 11.2 M12.7 9.8 L12.7 11.2" stroke="#15171c" stroke-width="1.2"/></svg>
<div class="a t b" style="left:264px;top:463.5px;height:13px;line-height:13px;font-size:9px;font-weight:bold;color:#15171c;letter-spacing:0.45px;">Swap!.amxd</div>
<div class="a t b" style="left:341px;top:463.5px;height:13px;line-height:13px;font-size:9px;font-weight:bold;color:#15171c;letter-spacing:0.37px;">06.03.2018, 21:22</div>
<svg class="a" style="left:232px;top:484px;" width="10" height="10" viewBox="0 0 10 10"><path d="M1.5 0.8 L6.5 4 L1.5 7.2 Z" fill="#8d9ab0" stroke="#5e6d88" stroke-width="1"/></svg>
<svg class="a" style="left:244px;top:481.5px;" width="17" height="13" viewBox="0 0 17 13"><rect x="2.5" y="3.3" width="12" height="6.5" rx="1.3" fill="none" stroke="#15171c" stroke-width="1.2"/><path d="M4.3 2 L4.3 3.3 M12.7 2 L12.7 3.3 M4.3 9.8 L4.3 11.2 M12.7 9.8 L12.7 11.2" stroke="#15171c" stroke-width="1.2"/></svg>
<div class="a t b" style="left:264px;top:482.5px;height:13px;line-height:13px;font-size:9px;font-weight:bold;color:#15171c;letter-spacing:0.45px;">Untitled Devi...</div>
<div class="a t b" style="left:341px;top:482.5px;height:13px;line-height:13px;font-size:9px;font-weight:bold;color:#15171c;letter-spacing:0.37px;">06.12.2017, 20:20</div>
<svg class="a" style="left:232px;top:503px;" width="10" height="10" viewBox="0 0 10 10"><path d="M1.5 0.8 L6.5 4 L1.5 7.2 Z" fill="#8d9ab0" stroke="#5e6d88" stroke-width="1"/></svg>
<svg class="a" style="left:244px;top:500.5px;" width="17" height="13" viewBox="0 0 17 13"><rect x="2.5" y="3.3" width="12" height="6.5" rx="1.3" fill="none" stroke="#15171c" stroke-width="1.2"/><path d="M4.3 2 L4.3 3.3 M12.7 2 L12.7 3.3 M4.3 9.8 L4.3 11.2 M12.7 9.8 L12.7 11.2" stroke="#15171c" stroke-width="1.2"/></svg>
<div class="a t b" style="left:264px;top:501.5px;height:13px;line-height:13px;font-size:9px;font-weight:bold;color:#15171c;letter-spacing:0.45px;">Max AutoPan...</div>
<div class="a t b" style="left:341px;top:501.5px;height:13px;line-height:13px;font-size:9px;font-weight:bold;color:#15171c;letter-spacing:0.37px;">05.11.2017, 13:34</div>
<svg class="a" style="left:232px;top:522px;" width="10" height="10" viewBox="0 0 10 10"><path d="M1.5 0.8 L6.5 4 L1.5 7.2 Z" fill="#8d9ab0" stroke="#5e6d88" stroke-width="1"/></svg>
<svg class="a" style="left:244px;top:519.5px;" width="17" height="13" viewBox="0 0 17 13"><rect x="2.5" y="3.3" width="12" height="6.5" rx="1.3" fill="none" stroke="#15171c" stroke-width="1.2"/><path d="M4.3 2 L4.3 3.3 M12.7 2 L12.7 3.3 M4.3 9.8 L4.3 11.2 M12.7 9.8 L12.7 11.2" stroke="#15171c" stroke-width="1.2"/></svg>
<div class="a t b" style="left:264px;top:520.5px;height:13px;line-height:13px;font-size:9px;font-weight:bold;color:#15171c;letter-spacing:0.45px;">Max CombFil...</div>
<div class="a t b" style="left:341px;top:520.5px;height:13px;line-height:13px;font-size:9px;font-weight:bold;color:#15171c;letter-spacing:0.37px;">05.11.2017, 13:34</div>
<svg class="a" style="left:232px;top:541px;" width="10" height="10" viewBox="0 0 10 10"><path d="M1.5 0.8 L6.5 4 L1.5 7.2 Z" fill="#8d9ab0" stroke="#5e6d88" stroke-width="1"/></svg>
<svg class="a" style="left:244px;top:538.5px;" width="17" height="13" viewBox="0 0 17 13"><rect x="2.5" y="3.3" width="12" height="6.5" rx="1.3" fill="none" stroke="#15171c" stroke-width="1.2"/><path d="M4.3 2 L4.3 3.3 M12.7 2 L12.7 3.3 M4.3 9.8 L4.3 11.2 M12.7 9.8 L12.7 11.2" stroke="#15171c" stroke-width="1.2"/></svg>
<div class="a t b" style="left:264px;top:539.5px;height:13px;line-height:13px;font-size:9px;font-weight:bold;color:#15171c;letter-spacing:0.45px;">Max Compre...</div>
<div class="a t b" style="left:341px;top:539.5px;height:13px;line-height:13px;font-size:9px;font-weight:bold;color:#15171c;letter-spacing:0.37px;">05.11.2017, 13:34</div>
<svg class="a" style="left:232px;top:560px;" width="10" height="10" viewBox="0 0 10 10"><path d="M1.5 0.8 L6.5 4 L1.5 7.2 Z" fill="#8d9ab0" stroke="#5e6d88" stroke-width="1"/></svg>
<svg class="a" style="left:244px;top:557.5px;" width="17" height="13" viewBox="0 0 17 13"><rect x="2.5" y="3.3" width="12" height="6.5" rx="1.3" fill="none" stroke="#15171c" stroke-width="1.2"/><path d="M4.3 2 L4.3 3.3 M12.7 2 L12.7 3.3 M4.3 9.8 L4.3 11.2 M12.7 9.8 L12.7 11.2" stroke="#15171c" stroke-width="1.2"/></svg>
<div class="a t b" style="left:264px;top:558.5px;height:13px;line-height:13px;font-size:9px;font-weight:bold;color:#15171c;letter-spacing:0.45px;">Max DelayTa...</div>
<div class="a t b" style="left:341px;top:558.5px;height:13px;line-height:13px;font-size:9px;font-weight:bold;color:#15171c;letter-spacing:0.37px;">05.11.2017, 13:34</div>
<svg class="a" style="left:232px;top:579px;" width="10" height="10" viewBox="0 0 10 10"><path d="M1.5 0.8 L6.5 4 L1.5 7.2 Z" fill="#8d9ab0" stroke="#5e6d88" stroke-width="1"/></svg>
<svg class="a" style="left:244px;top:576.5px;" width="17" height="13" viewBox="0 0 17 13"><rect x="2.5" y="3.3" width="12" height="6.5" rx="1.3" fill="none" stroke="#15171c" stroke-width="1.2"/><path d="M4.3 2 L4.3 3.3 M12.7 2 L12.7 3.3 M4.3 9.8 L4.3 11.2 M12.7 9.8 L12.7 11.2" stroke="#15171c" stroke-width="1.2"/></svg>
<div class="a t b" style="left:264px;top:577.5px;height:13px;line-height:13px;font-size:9px;font-weight:bold;color:#15171c;letter-spacing:0.45px;">Max Spectral...</div>
<div class="a t b" style="left:341px;top:577.5px;height:13px;line-height:13px;font-size:9px;font-weight:bold;color:#15171c;letter-spacing:0.37px;">05.11.2017, 13:34</div>
<svg class="a" style="left:232px;top:598px;" width="10" height="10" viewBox="0 0 10 10"><path d="M1.5 0.8 L6.5 4 L1.5 7.2 Z" fill="#8d9ab0" stroke="#5e6d88" stroke-width="1"/></svg>
<svg class="a" style="left:244px;top:595.5px;" width="17" height="13" viewBox="0 0 17 13"><rect x="2.5" y="3.3" width="12" height="6.5" rx="1.3" fill="none" stroke="#15171c" stroke-width="1.2"/><path d="M4.3 2 L4.3 3.3 M12.7 2 L12.7 3.3 M4.3 9.8 L4.3 11.2 M12.7 9.8 L12.7 11.2" stroke="#15171c" stroke-width="1.2"/></svg>
<div class="a t b" style="left:264px;top:596.5px;height:13px;line-height:13px;font-size:9px;font-weight:bold;color:#15171c;letter-spacing:0.45px;">PluggoFuzz....</div>
<div class="a t b" style="left:341px;top:596.5px;height:13px;line-height:13px;font-size:9px;font-weight:bold;color:#15171c;letter-spacing:0.37px;">05.11.2017, 13:34</div>
<svg class="a" style="left:232px;top:617px;" width="10" height="10" viewBox="0 0 10 10"><path d="M1.5 0.8 L6.5 4 L1.5 7.2 Z" fill="#8d9ab0" stroke="#5e6d88" stroke-width="1"/></svg>
<svg class="a" style="left:244px;top:614.5px;" width="17" height="13" viewBox="0 0 17 13"><rect x="2.5" y="3.3" width="12" height="6.5" rx="1.3" fill="none" stroke="#15171c" stroke-width="1.2"/><path d="M4.3 2 L4.3 3.3 M12.7 2 L12.7 3.3 M4.3 9.8 L4.3 11.2 M12.7 9.8 L12.7 11.2" stroke="#15171c" stroke-width="1.2"/></svg>
<div class="a t b" style="left:264px;top:615.5px;height:13px;line-height:13px;font-size:9px;font-weight:bold;color:#15171c;letter-spacing:0.45px;">Speed Shifte...</div>
<div class="a t b" style="left:341px;top:615.5px;height:13px;line-height:13px;font-size:9px;font-weight:bold;color:#15171c;letter-spacing:0.37px;">05.11.2017, 13:34</div>
<div class="a" style="left:216px;top:625px;width:237px;height:5px;background:#6b7790;"></div>
<div class="a" style="left:37px;top:630px;width:416px;height:19px;background:#a9b0b7;"></div>
<svg class="a" style="left:40px;top:632px;" width="14" height="14" viewBox="0 0 14 14"><circle cx="7.3" cy="7.2" r="6.2" fill="#3d8ee0" stroke="#1f3550" stroke-width="0.9"/><path d="M3.8 9.5 A3.6 3.6 0 0 1 10.8 9.5" fill="none" stroke="#0c1118" stroke-width="1.5"/><rect x="3" y="8.3" width="2.2" height="3.2" rx="0.8" fill="#0c1118"/><rect x="9.4" y="8.3" width="2.2" height="3.2" rx="0.8" fill="#0c1118"/><ellipse cx="7.3" cy="6.8" rx="1.8" ry="1.2" fill="#5ab0f0"/></svg>
<div class="a" style="left:57px;top:632px;width:393px;height:15px;background:#e8e8e8;border:1px solid #6b7790;"></div>
<div class="a" style="left:466px;top:35px;width:940px;height:619px;background:#6b7790;border-radius:8px;"></div>
<div class="a" style="left:1380px;top:82px;width:52px;height:572px;background:#6b7790;border-radius:0 8px 8px 0;"></div>
<div class="a" style="left:466px;top:600px;width:966px;height:54px;background:#6b7790;border-radius:0 0 8px 8px;"></div>
<svg class="a" style="left:1406px;top:74px;" width="8" height="8" viewBox="0 0 8 8"><path d="M0 0 L0 8 L8 8 A8 8 0 0 1 0 0 Z" fill="#6b7790"/></svg>
<svg class="a" style="left:1412px;top:35px;" width="20" height="20" viewBox="0 0 20 20"><circle cx="10" cy="10" r="9.5" fill="#6b7790"/><path d="M5 6 L15 6 M5 10 L15 10 M5 14 L15 14" stroke="#1b1e25" stroke-width="2"/></svg>
<svg class="a" style="left:1412px;top:58px;" width="20" height="20" viewBox="0 0 20 20"><circle cx="10" cy="10" r="9.5" fill="#6b7790"/><path d="M6 5 L6 15 M10 5 L10 15 M14 5 L14 15" stroke="#eef20a" stroke-width="2"/></svg>
<div class="a" style="left:472px;top:45px;width:55px;height:17px;background:#0e968a;"></div>
<div class="a t b" style="left:475px;top:47.0px;height:14px;line-height:14px;font-size:10px;font-weight:bold;color:#0b0d12;font-style:italic;letter-spacing:0.45px;">1 Audio</div>
<div class="a" style="left:529px;top:45px;width:55px;height:17px;background:#7ac73b;"></div>
<div class="a t b" style="left:532px;top:47.0px;height:14px;line-height:14px;font-size:10px;font-weight:bold;color:#0b0d12;font-style:italic;letter-spacing:0.45px;">2 Audio</div>
<div class="a" style="left:586px;top:45px;width:55px;height:17px;background:#12bfb2;"></div>
<div class="a t b" style="left:589px;top:47.0px;height:14px;line-height:14px;font-size:10px;font-weight:bold;color:#0b0d12;font-style:italic;letter-spacing:0.45px;">3 Audio</div>
<div class="a" style="left:643px;top:45px;width:55px;height:17px;background:#25ffae;"></div>
<div class="a t b" style="left:646px;top:47.0px;height:14px;line-height:14px;font-size:10px;font-weight:bold;color:#0b0d12;font-style:italic;letter-spacing:0.45px;">4 Audio</div>
<div class="a" style="left:700px;top:45px;width:55px;height:17px;background:#c1fd00;"></div>
<div class="a t b" style="left:703px;top:47.0px;height:14px;line-height:14px;font-size:10px;font-weight:bold;color:#0b0d12;font-style:italic;letter-spacing:0.45px;">5 Audio</div>
<div class="a" style="left:757px;top:45px;width:55px;height:17px;background:#ffee34;"></div>
<div class="a t b" style="left:760px;top:47.0px;height:14px;line-height:14px;font-size:10px;font-weight:bold;color:#0b0d12;font-style:italic;letter-spacing:0.45px;">6 Audio</div>
<div class="a" style="left:814px;top:45px;width:55px;height:17px;background:#c09c60;"></div>
<div class="a t b" style="left:817px;top:47.0px;height:14px;line-height:14px;font-size:10px;font-weight:bold;color:#0b0d12;font-style:italic;letter-spacing:0.45px;">7 Audio</div>
<div class="a" style="left:871px;top:45px;width:74px;height:17px;background:#b83c67;"></div>
<div class="a t b" style="left:874px;top:47.0px;height:14px;line-height:14px;font-size:10px;font-weight:bold;color:#f2f2f2;font-style:italic;letter-spacing:0.45px;">8 MIDI</div>
<div class="a" style="left:948px;top:45px;width:125px;height:17px;background:#a9b0b7;"></div>
<div class="a" style="left:1076px;top:45px;width:17px;height:17px;background:#d2e391;"></div>
<div class="a t b" style="left:1076px;top:46.75px;height:14.5px;line-height:14.5px;font-size:10.5px;font-weight:bold;color:#0b0d12;width:17px;text-align:center;font-style:italic;">R</div>
<div class="a" style="left:1095px;top:45px;width:17px;height:17px;background:#d2e391;"></div>
<div class="a t b" style="left:1095px;top:46.75px;height:14.5px;line-height:14.5px;font-size:10.5px;font-weight:bold;color:#0b0d12;width:17px;text-align:center;font-style:italic;">D</div>
<div class="a" style="left:1114px;top:45px;width:17px;height:17px;background:#8ea9ff;"></div>
<div class="a t b" style="left:1114px;top:46.75px;height:14.5px;line-height:14.5px;font-size:10.5px;font-weight:bold;color:#0b0d12;width:17px;text-align:center;font-style:italic;">P</div>
<div class="a" style="left:1133px;top:45px;width:17px;height:17px;background:#c9f0f8;"></div>
<div class="a t b" style="left:1133px;top:46.75px;height:14.5px;line-height:14.5px;font-size:10.5px;font-weight:bold;color:#0b0d12;width:17px;text-align:center;font-style:italic;">D</div>
<div class="a" style="left:1152px;top:45px;width:17px;height:17px;background:#86b07c;"></div>
<div class="a t b" style="left:1152px;top:46.75px;height:14.5px;line-height:14.5px;font-size:10.5px;font-weight:bold;color:#0b0d12;width:17px;text-align:center;font-style:italic;">A</div>
<div class="a" style="left:1171px;top:45px;width:17px;height:17px;background:#86b07c;"></div>
<div class="a t b" style="left:1171px;top:46.75px;height:14.5px;line-height:14.5px;font-size:10.5px;font-weight:bold;color:#0b0d12;width:17px;text-align:center;font-style:italic;">A</div>
<div class="a" style="left:1190px;top:45px;width:17px;height:17px;background:#c39c60;"></div>
<div class="a t b" style="left:1190px;top:46.75px;height:14.5px;line-height:14.5px;font-size:10.5px;font-weight:bold;color:#0b0d12;width:17px;text-align:center;font-style:italic;">A</div>
<div class="a" style="left:1209px;top:45px;width:17px;height:17px;background:#c39c60;"></div>
<div class="a t b" style="left:1209px;top:46.75px;height:14.5px;line-height:14.5px;font-size:10.5px;font-weight:bold;color:#0b0d12;width:17px;text-align:center;font-style:italic;">R</div>
<div class="a" style="left:1228px;top:45px;width:17px;height:17px;background:#d2e391;"></div>
<div class="a t b" style="left:1228px;top:46.75px;height:14.5px;line-height:14.5px;font-size:10.5px;font-weight:bold;color:#0b0d12;width:17px;text-align:center;font-style:italic;">T</div>
<div class="a" style="left:1247px;top:45px;width:17px;height:17px;background:#d2e391;"></div>
<div class="a t b" style="left:1247px;top:46.75px;height:14.5px;line-height:14.5px;font-size:10.5px;font-weight:bold;color:#0b0d12;width:17px;text-align:center;font-style:italic;">T</div>
<div class="a" style="left:1266px;top:45px;width:17px;height:17px;background:#d2e391;"></div>
<div class="a t b" style="left:1266px;top:46.75px;height:14.5px;line-height:14.5px;font-size:10.5px;font-weight:bold;color:#0b0d12;width:17px;text-align:center;font-style:italic;">R</div>
<div class="a" style="left:1285px;top:45px;width:17px;height:17px;background:#d2e391;"></div>
<div class="a t b" style="left:1285px;top:46.75px;height:14.5px;line-height:14.5px;font-size:10.5px;font-weight:bold;color:#0b0d12;width:17px;text-align:center;font-style:italic;">R</div>
<div class="a" style="left:1306px;top:45px;width:93px;height:17px;background:#d1b9e3;"></div>
<div class="a t b" style="left:1312px;top:47.0px;height:14px;line-height:14px;font-size:10px;font-weight:bold;color:#0b0d12;font-style:italic;letter-spacing:0.45px;">Master</div>
<div class="a" style="left:472px;top:66px;width:55px;height:17px;background:#d9dce0;"></div>
<div class="a" style="left:529px;top:66px;width:55px;height:17px;background:#d9dce0;"></div>
<svg class="a" style="left:533px;top:70px;" width="10" height="10" viewBox="0 0 10 10"><rect x="0.5" y="0.5" width="8" height="8" fill="#97a0a9" stroke="#586276" stroke-width="1"/></svg>
<div class="a" style="left:586px;top:66px;width:55px;height:17px;background:#d9dce0;"></div>
<svg class="a" style="left:590px;top:70px;" width="10" height="10" viewBox="0 0 10 10"><rect x="0.5" y="0.5" width="8" height="8" fill="#97a0a9" stroke="#586276" stroke-width="1"/></svg>
<div class="a" style="left:643px;top:66px;width:55px;height:17px;background:#d9dce0;"></div>
<svg class="a" style="left:647px;top:70px;" width="10" height="10" viewBox="0 0 10 10"><rect x="0.5" y="0.5" width="8" height="8" fill="#97a0a9" stroke="#586276" stroke-width="1"/></svg>
<div class="a" style="left:700px;top:66px;width:55px;height:17px;background:#d9dce0;"></div>
<svg class="a" style="left:704px;top:70px;" width="10" height="10" viewBox="0 0 10 10"><rect x="0.5" y="0.5" width="8" height="8" fill="#97a0a9" stroke="#586276" stroke-width="1"/></svg>
<div class="a" style="left:757px;top:66px;width:55px;height:17px;background:#d9dce0;"></div>
<svg class="a" style="left:761px;top:70px;" width="10" height="10" viewBox="0 0 10 10"><rect x="0.5" y="0.5" width="8" height="8" fill="#97a0a9" stroke="#586276" stroke-width="1"/></svg>
<div class="a" style="left:814px;top:66px;width:55px;height:17px;background:#d9dce0;"></div>
<svg class="a" style="left:818px;top:70px;" width="10" height="10" viewBox="0 0 10 10"><rect x="0.5" y="0.5" width="8" height="8" fill="#97a0a9" stroke="#586276" stroke-width="1"/></svg>
<div class="a" style="left:871px;top:66px;width:74px;height:17px;background:#d9dce0;"></div>
<svg class="a" style="left:875px;top:70px;" width="10" height="10" viewBox="0 0 10 10"><rect x="0.5" y="0.5" width="8" height="8" fill="#97a0a9" stroke="#586276" stroke-width="1"/></svg>
<div class="a" style="left:1076px;top:66px;width:17px;height:17px;background:#d9dce0;"></div>
<div class="a" style="left:1095px;top:66px;width:17px;height:17px;background:#d9dce0;"></div>
<div class="a" style="left:1114px;top:66px;width:17px;height:17px;background:#d9dce0;"></div>
<div class="a" style="left:1133px;top:66px;width:17px;height:17px;background:#d9dce0;"></div>
<div class="a" style="left:1152px;top:66px;width:17px;height:17px;background:#d9dce0;"></div>
<div class="a" style="left:1171px;top:66px;width:17px;height:17px;background:#d9dce0;"></div>
<div class="a" style="left:1190px;top:66px;width:17px;height:17px;background:#d9dce0;"></div>
<div class="a" style="left:1209px;top:66px;width:17px;height:17px;background:#d9dce0;"></div>
<div class="a" style="left:1228px;top:66px;width:17px;height:17px;background:#d9dce0;"></div>
<div class="a" style="left:1247px;top:66px;width:17px;height:17px;background:#d9dce0;"></div>
<div class="a" style="left:1266px;top:66px;width:17px;height:17px;background:#d9dce0;"></div>
<div class="a" style="left:1285px;top:66px;width:17px;height:17px;background:#d9dce0;"></div>
<div class="a" style="left:1306px;top:66px;width:93px;height:17px;background:#d9dce0;"></div>
<svg class="a" style="left:1310px;top:69px;" width="12" height="12" viewBox="0 0 12 12"><path d="M1.5 1 L11 6 L1.5 11 Z" fill="#99a1aa" stroke="#5e6878" stroke-width="1"/></svg>
<div class="a t b" style="left:1358px;top:67.5px;height:14px;line-height:14px;font-size:10px;font-weight:bold;color:#0b0d12;font-style:italic;">1</div>
<div class="a" style="left:472px;top:84px;width:55px;height:17px;background:#d9dce0;"></div>
<svg class="a" style="left:476px;top:88px;" width="10" height="10" viewBox="0 0 10 10"><rect x="0.5" y="0.5" width="8" height="8" fill="#97a0a9" stroke="#586276" stroke-width="1"/></svg>
<div class="a" style="left:529px;top:84px;width:55px;height:17px;background:#a9b0b7;"></div>
<svg class="a" style="left:533px;top:88px;" width="10" height="10" viewBox="0 0 10 10"><rect x="0.5" y="0.5" width="8" height="8" fill="#97a0a9" stroke="#586276" stroke-width="1"/></svg>
<div class="a" style="left:586px;top:84px;width:55px;height:17px;background:#a9b0b7;"></div>
<svg class="a" style="left:590px;top:88px;" width="10" height="10" viewBox="0 0 10 10"><rect x="0.5" y="0.5" width="8" height="8" fill="#97a0a9" stroke="#586276" stroke-width="1"/></svg>
<div class="a" style="left:643px;top:84px;width:55px;height:17px;background:#a9b0b7;"></div>
<svg class="a" style="left:647px;top:88px;" width="10" height="10" viewBox="0 0 10 10"><rect x="0.5" y="0.5" width="8" height="8" fill="#97a0a9" stroke="#586276" stroke-width="1"/></svg>
<div class="a" style="left:700px;top:84px;width:55px;height:17px;background:#a9b0b7;"></div>
<svg class="a" style="left:704px;top:88px;" width="10" height="10" viewBox="0 0 10 10"><rect x="0.5" y="0.5" width="8" height="8" fill="#97a0a9" stroke="#586276" stroke-width="1"/></svg>
<div class="a" style="left:757px;top:84px;width:55px;height:17px;background:#a9b0b7;"></div>
<svg class="a" style="left:761px;top:88px;" width="10" height="10" viewBox="0 0 10 10"><rect x="0.5" y="0.5" width="8" height="8" fill="#97a0a9" stroke="#586276" stroke-width="1"/></svg>
<div class="a" style="left:814px;top:84px;width:55px;height:17px;background:#a9b0b7;"></div>
<svg class="a" style="left:818px;top:88px;" width="10" height="10" viewBox="0 0 10 10"><rect x="0.5" y="0.5" width="8" height="8" fill="#97a0a9" stroke="#586276" stroke-width="1"/></svg>
<div class="a" style="left:871px;top:84px;width:74px;height:17px;background:#a9b0b7;"></div>
<svg class="a" style="left:875px;top:88px;" width="10" height="10" viewBox="0 0 10 10"><rect x="0.5" y="0.5" width="8" height="8" fill="#97a0a9" stroke="#586276" stroke-width="1"/></svg>
<div class="a" style="left:1076px;top:84px;width:17px;height:17px;background:#a9b0b7;"></div>
<div class="a" style="left:1095px;top:84px;width:17px;height:17px;background:#a9b0b7;"></div>
<div class="a" style="left:1114px;top:84px;width:17px;height:17px;background:#a9b0b7;"></div>
<div class="a" style="left:1133px;top:84px;width:17px;height:17px;background:#a9b0b7;"></div>
<div class="a" style="left:1152px;top:84px;width:17px;height:17px;background:#a9b0b7;"></div>
<div class="a" style="left:1171px;top:84px;width:17px;height:17px;background:#a9b0b7;"></div>
<div class="a" style="left:1190px;top:84px;width:17px;height:17px;background:#a9b0b7;"></div>
<div class="a" style="left:1209px;top:84px;width:17px;height:17px;background:#a9b0b7;"></div>
<div class="a" style="left:1228px;top:84px;width:17px;height:17px;background:#a9b0b7;"></div>
<div class="a" style="left:1247px;top:84px;width:17px;height:17px;background:#a9b0b7;"></div>
<div class="a" style="left:1266px;top:84px;width:17px;height:17px;background:#a9b0b7;"></div>
<div class="a" style="left:1285px;top:84px;width:17px;height:17px;background:#a9b0b7;"></div>
<div class="a" style="left:1306px;top:84px;width:93px;height:17px;background:#a9b0b7;"></div>
<svg class="a" style="left:1310px;top:87px;" width="12" height="12" viewBox="0 0 12 12"><path d="M1.5 1 L11 6 L1.5 11 Z" fill="#99a1aa" stroke="#5e6878" stroke-width="1"/></svg>
<div class="a t b" style="left:1358px;top:85.5px;height:14px;line-height:14px;font-size:10px;font-weight:bold;color:#0b0d12;font-style:italic;">2</div>
<div class="a" style="left:472px;top:102px;width:55px;height:17px;background:#d9dce0;"></div>
<svg class="a" style="left:476px;top:106px;" width="10" height="10" viewBox="0 0 10 10"><rect x="0.5" y="0.5" width="8" height="8" fill="#97a0a9" stroke="#586276" stroke-width="1"/></svg>
<div class="a" style="left:529px;top:102px;width:55px;height:17px;background:#a9b0b7;"></div>
<svg class="a" style="left:533px;top:106px;" width="10" height="10" viewBox="0 0 10 10"><rect x="0.5" y="0.5" width="8" height="8" fill="#97a0a9" stroke="#586276" stroke-width="1"/></svg>
<div class="a" style="left:586px;top:102px;width:55px;height:17px;background:#a9b0b7;"></div>
<svg class="a" style="left:590px;top:106px;" width="10" height="10" viewBox="0 0 10 10"><rect x="0.5" y="0.5" width="8" height="8" fill="#97a0a9" stroke="#586276" stroke-width="1"/></svg>
<div class="a" style="left:643px;top:102px;width:55px;height:17px;background:#a9b0b7;"></div>
<svg class="a" style="left:647px;top:106px;" width="10" height="10" viewBox="0 0 10 10"><rect x="0.5" y="0.5" width="8" height="8" fill="#97a0a9" stroke="#586276" stroke-width="1"/></svg>
<div class="a" style="left:700px;top:102px;width:55px;height:17px;background:#a9b0b7;"></div>
<svg class="a" style="left:704px;top:106px;" width="10" height="10" viewBox="0 0 10 10"><rect x="0.5" y="0.5" width="8" height="8" fill="#97a0a9" stroke="#586276" stroke-width="1"/></svg>
<div class="a" style="left:757px;top:102px;width:55px;height:17px;background:#a9b0b7;"></div>
<svg class="a" style="left:761px;top:106px;" width="10" height="10" viewBox="0 0 10 10"><rect x="0.5" y="0.5" width="8" height="8" fill="#97a0a9" stroke="#586276" stroke-width="1"/></svg>
<div class="a" style="left:814px;top:102px;width:55px;height:17px;background:#a9b0b7;"></div>
<svg class="a" style="left:818px;top:106px;" width="10" height="10" viewBox="0 0 10 10"><rect x="0.5" y="0.5" width="8" height="8" fill="#97a0a9" stroke="#586276" stroke-width="1"/></svg>
<div class="a" style="left:871px;top:102px;width:74px;height:17px;background:#a9b0b7;"></div>
<svg class="a" style="left:875px;top:106px;" width="10" height="10" viewBox="0 0 10 10"><rect x="0.5" y="0.5" width="8" height="8" fill="#97a0a9" stroke="#586276" stroke-width="1"/></svg>
<div class="a" style="left:1076px;top:102px;width:17px;height:17px;background:#a9b0b7;"></div>
<div class="a" style="left:1095px;top:102px;width:17px;height:17px;background:#a9b0b7;"></div>
<div class="a" style="left:1114px;top:102px;width:17px;height:17px;background:#a9b0b7;"></div>
<div class="a" style="left:1133px;top:102px;width:17px;height:17px;background:#a9b0b7;"></div>
<div class="a" style="left:1152px;top:102px;width:17px;height:17px;background:#a9b0b7;"></div>
<div class="a" style="left:1171px;top:102px;width:17px;height:17px;background:#a9b0b7;"></div>
<div class="a" style="left:1190px;top:102px;width:17px;height:17px;background:#a9b0b7;"></div>
<div class="a" style="left:1209px;top:102px;width:17px;height:17px;background:#a9b0b7;"></div>
<div class="a" style="left:1228px;top:102px;width:17px;height:17px;background:#a9b0b7;"></div>
<div class="a" style="left:1247px;top:102px;width:17px;height:17px;background:#a9b0b7;"></div>
<div class="a" style="left:1266px;top:102px;width:17px;height:17px;background:#a9b0b7;"></div>
<div class="a" style="left:1285px;top:102px;width:17px;height:17px;background:#a9b0b7;"></div>
<div class="a" style="left:1306px;top:102px;width:93px;height:17px;background:#a9b0b7;"></div>
<svg class="a" style="left:1310px;top:105px;" width="12" height="12" viewBox="0 0 12 12"><path d="M1.5 1 L11 6 L1.5 11 Z" fill="#99a1aa" stroke="#5e6878" stroke-width="1"/></svg>
<div class="a t b" style="left:1358px;top:103.5px;height:14px;line-height:14px;font-size:10px;font-weight:bold;color:#0b0d12;font-style:italic;">3</div>
<div class="a" style="left:472px;top:120px;width:55px;height:17px;background:#d9dce0;"></div>
<svg class="a" style="left:476px;top:124px;" width="10" height="10" viewBox="0 0 10 10"><rect x="0.5" y="0.5" width="8" height="8" fill="#97a0a9" stroke="#586276" stroke-width="1"/></svg>
<div class="a" style="left:529px;top:120px;width:55px;height:17px;background:#a9b0b7;"></div>
<svg class="a" style="left:533px;top:124px;" width="10" height="10" viewBox="0 0 10 10"><rect x="0.5" y="0.5" width="8" height="8" fill="#97a0a9" stroke="#586276" stroke-width="1"/></svg>
<div class="a" style="left:586px;top:120px;width:55px;height:17px;background:#a9b0b7;"></div>
<svg class="a" style="left:590px;top:124px;" width="10" height="10" viewBox="0 0 10 10"><rect x="0.5" y="0.5" width="8" height="8" fill="#97a0a9" stroke="#586276" stroke-width="1"/></svg>
<div class="a" style="left:643px;top:120px;width:55px;height:17px;background:#a9b0b7;"></div>
<svg class="a" style="left:647px;top:124px;" width="10" height="10" viewBox="0 0 10 10"><rect x="0.5" y="0.5" width="8" height="8" fill="#97a0a9" stroke="#586276" stroke-width="1"/></svg>
<div class="a" style="left:700px;top:120px;width:55px;height:17px;background:#a9b0b7;"></div>
<svg class="a" style="left:704px;top:124px;" width="10" height="10" viewBox="0 0 10 10"><rect x="0.5" y="0.5" width="8" height="8" fill="#97a0a9" stroke="#586276" stroke-width="1"/></svg>
<div class="a" style="left:757px;top:120px;width:55px;height:17px;background:#a9b0b7;"></div>
<svg class="a" style="left:761px;top:124px;" width="10" height="10" viewBox="0 0 10 10"><rect x="0.5" y="0.5" width="8" height="8" fill="#97a0a9" stroke="#586276" stroke-width="1"/></svg>
<div class="a" style="left:814px;top:120px;width:55px;height:17px;background:#a9b0b7;"></div>
<svg class="a" style="left:818px;top:124px;" width="10" height="10" viewBox="0 0 10 10"><rect x="0.5" y="0.5" width="8" height="8" fill="#97a0a9" stroke="#586276" stroke-width="1"/></svg>
<div class="a" style="left:871px;top:120px;width:74px;height:17px;background:#a9b0b7;"></div>
<svg class="a" style="left:875px;top:124px;" width="10" height="10" viewBox="0 0 10 10"><rect x="0.5" y="0.5" width="8" height="8" fill="#97a0a9" stroke="#586276" stroke-width="1"/></svg>
<div class="a" style="left:1076px;top:120px;width:17px;height:17px;background:#a9b0b7;"></div>
<div class="a" style="left:1095px;top:120px;width:17px;height:17px;background:#a9b0b7;"></div>
<div class="a" style="left:1114px;top:120px;width:17px;height:17px;background:#a9b0b7;"></div>
<div class="a" style="left:1133px;top:120px;width:17px;height:17px;background:#a9b0b7;"></div>
<div class="a" style="left:1152px;top:120px;width:17px;height:17px;background:#a9b0b7;"></div>
<div class="a" style="left:1171px;top:120px;width:17px;height:17px;background:#a9b0b7;"></div>
<div class="a" style="left:1190px;top:120px;width:17px;height:17px;background:#a9b0b7;"></div>
<div class="a" style="left:1209px;top:120px;width:17px;height:17px;background:#a9b0b7;"></div>
<div class="a" style="left:1228px;top:120px;width:17px;height:17px;background:#a9b0b7;"></div>
<div class="a" style="left:1247px;top:120px;width:17px;height:17px;background:#a9b0b7;"></div>
<div class="a" style="left:1266px;top:120px;width:17px;height:17px;background:#a9b0b7;"></div>
<div class="a" style="left:1285px;top:120px;width:17px;height:17px;background:#a9b0b7;"></div>
<div class="a" style="left:1306px;top:120px;width:93px;height:17px;background:#a9b0b7;"></div>
<svg class="a" style="left:1310px;top:123px;" width="12" height="12" viewBox="0 0 12 12"><path d="M1.5 1 L11 6 L1.5 11 Z" fill="#99a1aa" stroke="#5e6878" stroke-width="1"/></svg>
<div class="a t b" style="left:1358px;top:121.5px;height:14px;line-height:14px;font-size:10px;font-weight:bold;color:#0b0d12;font-style:italic;">4</div>
<div class="a" style="left:472px;top:138px;width:55px;height:17px;background:#d9dce0;"></div>
<svg class="a" style="left:476px;top:142px;" width="10" height="10" viewBox="0 0 10 10"><rect x="0.5" y="0.5" width="8" height="8" fill="#97a0a9" stroke="#586276" stroke-width="1"/></svg>
<div class="a" style="left:529px;top:138px;width:55px;height:17px;background:#a9b0b7;"></div>
<svg class="a" style="left:533px;top:142px;" width="10" height="10" viewBox="0 0 10 10"><rect x="0.5" y="0.5" width="8" height="8" fill="#97a0a9" stroke="#586276" stroke-width="1"/></svg>
<div class="a" style="left:586px;top:138px;width:55px;height:17px;background:#a9b0b7;"></div>
<svg class="a" style="left:590px;top:142px;" width="10" height="10" viewBox="0 0 10 10"><rect x="0.5" y="0.5" width="8" height="8" fill="#97a0a9" stroke="#586276" stroke-width="1"/></svg>
<div class="a" style="left:643px;top:138px;width:55px;height:17px;background:#a9b0b7;"></div>
<svg class="a" style="left:647px;top:142px;" width="10" height="10" viewBox="0 0 10 10"><rect x="0.5" y="0.5" width="8" height="8" fill="#97a0a9" stroke="#586276" stroke-width="1"/></svg>
<div class="a" style="left:700px;top:138px;width:55px;height:17px;background:#a9b0b7;"></div>
<svg class="a" style="left:704px;top:142px;" width="10" height="10" viewBox="0 0 10 10"><rect x="0.5" y="0.5" width="8" height="8" fill="#97a0a9" stroke="#586276" stroke-width="1"/></svg>
<div class="a" style="left:757px;top:138px;width:55px;height:17px;background:#a9b0b7;"></div>
<svg class="a" style="left:761px;top:142px;" width="10" height="10" viewBox="0 0 10 10"><rect x="0.5" y="0.5" width="8" height="8" fill="#97a0a9" stroke="#586276" stroke-width="1"/></svg>
<div class="a" style="left:814px;top:138px;width:55px;height:17px;background:#a9b0b7;"></div>
<svg class="a" style="left:818px;top:142px;" width="10" height="10" viewBox="0 0 10 10"><rect x="0.5" y="0.5" width="8" height="8" fill="#97a0a9" stroke="#586276" stroke-width="1"/></svg>
<div class="a" style="left:871px;top:138px;width:74px;height:17px;background:#a9b0b7;"></div>
<svg class="a" style="left:875px;top:142px;" width="10" height="10" viewBox="0 0 10 10"><rect x="0.5" y="0.5" width="8" height="8" fill="#97a0a9" stroke="#586276" stroke-width="1"/></svg>
<div class="a" style="left:1076px;top:138px;width:17px;height:17px;background:#a9b0b7;"></div>
<div class="a" style="left:1095px;top:138px;width:17px;height:17px;background:#a9b0b7;"></div>
<div class="a" style="left:1114px;top:138px;width:17px;height:17px;background:#a9b0b7;"></div>
<div class="a" style="left:1133px;top:138px;width:17px;height:17px;background:#a9b0b7;"></div>
<div class="a" style="left:1152px;top:138px;width:17px;height:17px;background:#a9b0b7;"></div>
<div class="a" style="left:1171px;top:138px;width:17px;height:17px;background:#a9b0b7;"></div>
<div class="a" style="left:1190px;top:138px;width:17px;height:17px;background:#a9b0b7;"></div>
<div class="a" style="left:1209px;top:138px;width:17px;height:17px;background:#a9b0b7;"></div>
<div class="a" style="left:1228px;top:138px;width:17px;height:17px;background:#a9b0b7;"></div>
<div class="a" style="left:1247px;top:138px;width:17px;height:17px;background:#a9b0b7;"></div>
<div class="a" style="left:1266px;top:138px;width:17px;height:17px;background:#a9b0b7;"></div>
<div class="a" style="left:1285px;top:138px;width:17px;height:17px;background:#a9b0b7;"></div>
<div class="a" style="left:1306px;top:138px;width:93px;height:17px;background:#a9b0b7;"></div>
<svg class="a" style="left:1310px;top:141px;" width="12" height="12" viewBox="0 0 12 12"><path d="M1.5 1 L11 6 L1.5 11 Z" fill="#99a1aa" stroke="#5e6878" stroke-width="1"/></svg>
<div class="a t b" style="left:1358px;top:139.5px;height:14px;line-height:14px;font-size:10px;font-weight:bold;color:#0b0d12;font-style:italic;">5</div>
<div class="a" style="left:472px;top:156px;width:55px;height:17px;background:#d9dce0;"></div>
<svg class="a" style="left:476px;top:160px;" width="10" height="10" viewBox="0 0 10 10"><rect x="0.5" y="0.5" width="8" height="8" fill="#97a0a9" stroke="#586276" stroke-width="1"/></svg>
<div class="a" style="left:529px;top:156px;width:55px;height:17px;background:#a9b0b7;"></div>
<svg class="a" style="left:533px;top:160px;" width="10" height="10" viewBox="0 0 10 10"><rect x="0.5" y="0.5" width="8" height="8" fill="#97a0a9" stroke="#586276" stroke-width="1"/></svg>
<div class="a" style="left:586px;top:156px;width:55px;height:17px;background:#a9b0b7;"></div>
<svg class="a" style="left:590px;top:160px;" width="10" height="10" viewBox="0 0 10 10"><rect x="0.5" y="0.5" width="8" height="8" fill="#97a0a9" stroke="#586276" stroke-width="1"/></svg>
<div class="a" style="left:643px;top:156px;width:55px;height:17px;background:#a9b0b7;"></div>
<svg class="a" style="left:647px;top:160px;" width="10" height="10" viewBox="0 0 10 10"><rect x="0.5" y="0.5" width="8" height="8" fill="#97a0a9" stroke="#586276" stroke-width="1"/></svg>
<div class="a" style="left:700px;top:156px;width:55px;height:17px;background:#a9b0b7;"></div>
<svg class="a" style="left:704px;top:160px;" width="10" height="10" viewBox="0 0 10 10"><rect x="0.5" y="0.5" width="8" height="8" fill="#97a0a9" stroke="#586276" stroke-width="1"/></svg>
<div class="a" style="left:757px;top:156px;width:55px;height:17px;background:#a9b0b7;"></div>
<svg class="a" style="left:761px;top:160px;" width="10" height="10" viewBox="0 0 10 10"><rect x="0.5" y="0.5" width="8" height="8" fill="#97a0a9" stroke="#586276" stroke-width="1"/></svg>
<div class="a" style="left:814px;top:156px;width:55px;height:17px;background:#a9b0b7;"></div>
<svg class="a" style="left:818px;top:160px;" width="10" height="10" viewBox="0 0 10 10"><rect x="0.5" y="0.5" width="8" height="8" fill="#97a0a9" stroke="#586276" stroke-width="1"/></svg>
<div class="a" style="left:871px;top:156px;width:74px;height:17px;background:#a9b0b7;"></div>
<svg class="a" style="left:875px;top:160px;" width="10" height="10" viewBox="0 0 10 10"><rect x="0.5" y="0.5" width="8" height="8" fill="#97a0a9" stroke="#586276" stroke-width="1"/></svg>
<div class="a" style="left:1076px;top:156px;width:17px;height:17px;background:#a9b0b7;"></div>
<div class="a" style="left:1095px;top:156px;width:17px;height:17px;background:#a9b0b7;"></div>
<div class="a" style="left:1114px;top:156px;width:17px;height:17px;background:#a9b0b7;"></div>
<div class="a" style="left:1133px;top:156px;width:17px;height:17px;background:#a9b0b7;"></div>
<div class="a" style="left:1152px;top:156px;width:17px;height:17px;background:#a9b0b7;"></div>
<div class="a" style="left:1171px;top:156px;width:17px;height:17px;background:#a9b0b7;"></div>
<div class="a" style="left:1190px;top:156px;width:17px;height:17px;background:#a9b0b7;"></div>
<div class="a" style="left:1209px;top:156px;width:17px;height:17px;background:#a9b0b7;"></div>
<div class="a" style="left:1228px;top:156px;width:17px;height:17px;background:#a9b0b7;"></div>
<div class="a" style="left:1247px;top:156px;width:17px;height:17px;background:#a9b0b7;"></div>
<div class="a" style="left:1266px;top:156px;width:17px;height:17px;background:#a9b0b7;"></div>
<div class="a" style="left:1285px;top:156px;width:17px;height:17px;background:#a9b0b7;"></div>
<div class="a" style="left:1306px;top:156px;width:93px;height:17px;background:#a9b0b7;"></div>
<svg class="a" style="left:1310px;top:159px;" width="12" height="12" viewBox="0 0 12 12"><path d="M1.5 1 L11 6 L1.5 11 Z" fill="#99a1aa" stroke="#5e6878" stroke-width="1"/></svg>
<div class="a t b" style="left:1358px;top:157.5px;height:14px;line-height:14px;font-size:10px;font-weight:bold;color:#0b0d12;font-style:italic;">6</div>
<div class="a" style="left:472px;top:174px;width:55px;height:17px;background:#d9dce0;"></div>
<svg class="a" style="left:476px;top:178px;" width="10" height="10" viewBox="0 0 10 10"><rect x="0.5" y="0.5" width="8" height="8" fill="#97a0a9" stroke="#586276" stroke-width="1"/></svg>
<div class="a" style="left:529px;top:174px;width:55px;height:17px;background:#a9b0b7;"></div>
<svg class="a" style="left:533px;top:178px;" width="10" height="10" viewBox="0 0 10 10"><rect x="0.5" y="0.5" width="8" height="8" fill="#97a0a9" stroke="#586276" stroke-width="1"/></svg>
<div class="a" style="left:586px;top:174px;width:55px;height:17px;background:#a9b0b7;"></div>
<svg class="a" style="left:590px;top:178px;" width="10" height="10" viewBox="0 0 10 10"><rect x="0.5" y="0.5" width="8" height="8" fill="#97a0a9" stroke="#586276" stroke-width="1"/></svg>
<div class="a" style="left:643px;top:174px;width:55px;height:17px;background:#a9b0b7;"></div>
<svg class="a" style="left:647px;top:178px;" width="10" height="10" viewBox="0 0 10 10"><rect x="0.5" y="0.5" width="8" height="8" fill="#97a0a9" stroke="#586276" stroke-width="1"/></svg>
<div class="a" style="left:700px;top:174px;width:55px;height:17px;background:#a9b0b7;"></div>
<svg class="a" style="left:704px;top:178px;" width="10" height="10" viewBox="0 0 10 10"><rect x="0.5" y="0.5" width="8" height="8" fill="#97a0a9" stroke="#586276" stroke-width="1"/></svg>
<div class="a" style="left:757px;top:174px;width:55px;height:17px;background:#a9b0b7;"></div>
<svg class="a" style="left:761px;top:178px;" width="10" height="10" viewBox="0 0 10 10"><rect x="0.5" y="0.5" width="8" height="8" fill="#97a0a9" stroke="#586276" stroke-width="1"/></svg>
<div class="a" style="left:814px;top:174px;width:55px;height:17px;background:#a9b0b7;"></div>
<svg class="a" style="left:818px;top:178px;" width="10" height="10" viewBox="0 0 10 10"><rect x="0.5" y="0.5" width="8" height="8" fill="#97a0a9" stroke="#586276" stroke-width="1"/></svg>
<div class="a" style="left:871px;top:174px;width:74px;height:17px;background:#a9b0b7;"></div>
<svg class="a" style="left:875px;top:178px;" width="10" height="10" viewBox="0 0 10 10"><rect x="0.5" y="0.5" width="8" height="8" fill="#97a0a9" stroke="#586276" stroke-width="1"/></svg>
<div class="a" style="left:1076px;top:174px;width:17px;height:17px;background:#a9b0b7;"></div>
<div class="a" style="left:1095px;top:174px;width:17px;height:17px;background:#a9b0b7;"></div>
<div class="a" style="left:1114px;top:174px;width:17px;height:17px;background:#a9b0b7;"></div>
<div class="a" style="left:1133px;top:174px;width:17px;height:17px;background:#a9b0b7;"></div>
<div class="a" style="left:1152px;top:174px;width:17px;height:17px;background:#a9b0b7;"></div>
<div class="a" style="left:1171px;top:174px;width:17px;height:17px;background:#a9b0b7;"></div>
<div class="a" style="left:1190px;top:174px;width:17px;height:17px;background:#a9b0b7;"></div>
<div class="a" style="left:1209px;top:174px;width:17px;height:17px;background:#a9b0b7;"></div>
<div class="a" style="left:1228px;top:174px;width:17px;height:17px;background:#a9b0b7;"></div>
<div class="a" style="left:1247px;top:174px;width:17px;height:17px;background:#a9b0b7;"></div>
<div class="a" style="left:1266px;top:174px;width:17px;height:17px;background:#a9b0b7;"></div>
<div class="a" style="left:1285px;top:174px;width:17px;height:17px;background:#a9b0b7;"></div>
<div class="a" style="left:1306px;top:174px;width:93px;height:17px;background:#a9b0b7;"></div>
<svg class="a" style="left:1310px;top:177px;" width="12" height="12" viewBox="0 0 12 12"><path d="M1.5 1 L11 6 L1.5 11 Z" fill="#99a1aa" stroke="#5e6878" stroke-width="1"/></svg>
<div class="a t b" style="left:1358px;top:175.5px;height:14px;line-height:14px;font-size:10px;font-weight:bold;color:#0b0d12;font-style:italic;">7</div>
<div class="a" style="left:472px;top:192px;width:55px;height:17px;background:#d9dce0;"></div>
<svg class="a" style="left:476px;top:196px;" width="10" height="10" viewBox="0 0 10 10"><rect x="0.5" y="0.5" width="8" height="8" fill="#97a0a9" stroke="#586276" stroke-width="1"/></svg>
<div class="a" style="left:529px;top:192px;width:55px;height:17px;background:#a9b0b7;"></div>
<svg class="a" style="left:533px;top:196px;" width="10" height="10" viewBox="0 0 10 10"><rect x="0.5" y="0.5" width="8" height="8" fill="#97a0a9" stroke="#586276" stroke-width="1"/></svg>
<div class="a" style="left:586px;top:192px;width:55px;height:17px;background:#a9b0b7;"></div>
<svg class="a" style="left:590px;top:196px;" width="10" height="10" viewBox="0 0 10 10"><rect x="0.5" y="0.5" width="8" height="8" fill="#97a0a9" stroke="#586276" stroke-width="1"/></svg>
<div class="a" style="left:643px;top:192px;width:55px;height:17px;background:#a9b0b7;"></div>
<svg class="a" style="left:647px;top:196px;" width="10" height="10" viewBox="0 0 10 10"><rect x="0.5" y="0.5" width="8" height="8" fill="#97a0a9" stroke="#586276" stroke-width="1"/></svg>
<div class="a" style="left:700px;top:192px;width:55px;height:17px;background:#a9b0b7;"></div>
<svg class="a" style="left:704px;top:196px;" width="10" height="10" viewBox="0 0 10 10"><rect x="0.5" y="0.5" width="8" height="8" fill="#97a0a9" stroke="#586276" stroke-width="1"/></svg>
<div class="a" style="left:757px;top:192px;width:55px;height:17px;background:#a9b0b7;"></div>
<svg class="a" style="left:761px;top:196px;" width="10" height="10" viewBox="0 0 10 10"><rect x="0.5" y="0.5" width="8" height="8" fill="#97a0a9" stroke="#586276" stroke-width="1"/></svg>
<div class="a" style="left:814px;top:192px;width:55px;height:17px;background:#a9b0b7;"></div>
<svg class="a" style="left:818px;top:196px;" width="10" height="10" viewBox="0 0 10 10"><rect x="0.5" y="0.5" width="8" height="8" fill="#97a0a9" stroke="#586276" stroke-width="1"/></svg>
<div class="a" style="left:871px;top:192px;width:74px;height:17px;background:#a9b0b7;"></div>
<svg class="a" style="left:875px;top:196px;" width="10" height="10" viewBox="0 0 10 10"><rect x="0.5" y="0.5" width="8" height="8" fill="#97a0a9" stroke="#586276" stroke-width="1"/></svg>
<div class="a" style="left:1076px;top:192px;width:17px;height:17px;background:#a9b0b7;"></div>
<div class="a" style="left:1095px;top:192px;width:17px;height:17px;background:#a9b0b7;"></div>
<div class="a" style="left:1114px;top:192px;width:17px;height:17px;background:#a9b0b7;"></div>
<div class="a" style="left:1133px;top:192px;width:17px;height:17px;background:#a9b0b7;"></div>
<div class="a" style="left:1152px;top:192px;width:17px;height:17px;background:#a9b0b7;"></div>
<div class="a" style="left:1171px;top:192px;width:17px;height:17px;background:#a9b0b7;"></div>
<div class="a" style="left:1190px;top:192px;width:17px;height:17px;background:#a9b0b7;"></div>
<div class="a" style="left:1209px;top:192px;width:17px;height:17px;background:#a9b0b7;"></div>
<div class="a" style="left:1228px;top:192px;width:17px;height:17px;background:#a9b0b7;"></div>
<div class="a" style="left:1247px;top:192px;width:17px;height:17px;background:#a9b0b7;"></div>
<div class="a" style="left:1266px;top:192px;width:17px;height:17px;background:#a9b0b7;"></div>
<div class="a" style="left:1285px;top:192px;width:17px;height:17px;background:#a9b0b7;"></div>
<div class="a" style="left:1306px;top:192px;width:93px;height:17px;background:#a9b0b7;"></div>
<svg class="a" style="left:1310px;top:195px;" width="12" height="12" viewBox="0 0 12 12"><path d="M1.5 1 L11 6 L1.5 11 Z" fill="#99a1aa" stroke="#5e6878" stroke-width="1"/></svg>
<div class="a t b" style="left:1358px;top:193.5px;height:14px;line-height:14px;font-size:10px;font-weight:bold;color:#0b0d12;font-style:italic;">8</div>
<div class="a" style="left:948px;top:66px;width:125px;height:18px;background:#d9dce0;"></div>
<div class="a" style="left:948px;top:84px;width:125px;height:125px;background:#a9b0b7;"></div>
<div class="a t b" style="left:949px;top:122.5px;height:13px;line-height:13px;font-size:9px;font-weight:bold;color:#10121a;width:126px;text-align:center;letter-spacing:0.4px;">Drop Files and Devices</div>
<div class="a t b" style="left:949px;top:140.5px;height:13px;line-height:13px;font-size:9px;font-weight:bold;color:#10121a;width:126px;text-align:center;letter-spacing:0.4px;">Here</div>
<div class="a" style="left:472px;top:66px;width:55px;height:17px;background:#d8cc9a;"></div>
<div class="a" style="left:473px;top:67px;width:53px;height:15px;background:#000;"></div>
<div class="a" style="left:474px;top:68px;width:13px;height:13px;background:#1f222a;"></div>
<svg class="a" style="left:474px;top:68px;" width="13" height="13" viewBox="0 0 13 13"><path d="M2 1.5 L11.5 6.5 L2 11.5 Z" fill="#56f01e"/></svg>
<div class="a" style="left:488px;top:68px;width:37px;height:13px;background:#4cffd5;"></div>
<div class="a" style="left:488px;top:68px;width:37px;height:13px;overflow:hidden;"><div class="a t" style="left:1px;top:0;line-height:14px;font-size:9.5px;font-weight:bold;color:#0b0d12;letter-spacing:0.3px;">03_Space</div></div>
<div class="a" style="left:472px;top:211px;width:55px;height:178px;background:#d9dce0;"></div>
<div class="a" style="left:529px;top:211px;width:55px;height:178px;background:#a9b0b7;"></div>
<div class="a" style="left:586px;top:211px;width:55px;height:178px;background:#a9b0b7;"></div>
<div class="a" style="left:643px;top:211px;width:55px;height:178px;background:#a9b0b7;"></div>
<div class="a" style="left:700px;top:211px;width:55px;height:178px;background:#a9b0b7;"></div>
<div class="a" style="left:757px;top:211px;width:55px;height:178px;background:#a9b0b7;"></div>
<div class="a" style="left:814px;top:211px;width:55px;height:178px;background:#a9b0b7;"></div>
<div class="a" style="left:871px;top:211px;width:74px;height:178px;background:#a9b0b7;"></div>
<div class="a" style="left:948px;top:211px;width:125px;height:178px;background:#a9b0b7;"></div>
<div class="a" style="left:1076px;top:211px;width:17px;height:178px;background:#a9b0b7;"></div>
<div class="a" style="left:1095px;top:211px;width:17px;height:178px;background:#a9b0b7;"></div>
<div class="a" style="left:1114px;top:211px;width:17px;height:178px;background:#a9b0b7;"></div>
<div class="a" style="left:1133px;top:211px;width:17px;height:178px;background:#a9b0b7;"></div>
<div class="a" style="left:1152px;top:211px;width:17px;height:178px;background:#a9b0b7;"></div>
<div class="a" style="left:1171px;top:211px;width:17px;height:178px;background:#a9b0b7;"></div>
<div class="a" style="left:1190px;top:211px;width:17px;height:178px;background:#a9b0b7;"></div>
<div class="a" style="left:1209px;top:211px;width:17px;height:178px;background:#a9b0b7;"></div>
<div class="a" style="left:1228px;top:211px;width:17px;height:178px;background:#a9b0b7;"></div>
<div class="a" style="left:1247px;top:211px;width:17px;height:178px;background:#a9b0b7;"></div>
<div class="a" style="left:1266px;top:211px;width:17px;height:178px;background:#a9b0b7;"></div>
<div class="a" style="left:1285px;top:211px;width:17px;height:178px;background:#a9b0b7;"></div>
<div class="a" style="left:1306px;top:211px;width:93px;height:178px;background:#a9b0b7;"></div>
<div class="a" style="left:472px;top:393px;width:55px;height:17px;background:#b2b8bd;"></div>
<svg class="a" style="left:476px;top:397px;" width="10" height="10" viewBox="0 0 10 10"><rect x="0.5" y="0.5" width="8" height="8" fill="#97a0a9" stroke="#586276" stroke-width="1"/></svg>
<div class="a t" style="left:492px;top:395.0px;height:14px;line-height:14px;font-size:10px;font-weight:normal;color:#111;">2</div>
<svg class="a" style="left:501px;top:394.5px;" width="14" height="14" viewBox="0 0 14 14"><circle cx="6.7" cy="6.8" r="6.2" fill="#21795f" stroke="#3c5a66" stroke-width="0.9"/><path d="M6.7 5.8 L6.7 1.3 A5.5 5.5 0 0 0 2.3 3.4 Z" fill="#50f8d2"/></svg>
<div class="a t" style="left:516.5px;top:395.0px;height:14px;line-height:14px;font-size:10px;font-weight:normal;color:#111;">.2</div>
<div class="a" style="left:529px;top:393px;width:55px;height:17px;background:#a9b0b7;"></div>
<svg class="a" style="left:533px;top:397px;" width="10" height="10" viewBox="0 0 10 10"><rect x="0.5" y="0.5" width="8" height="8" fill="#97a0a9" stroke="#586276" stroke-width="1"/></svg>
<div class="a" style="left:564px;top:395px;width:1px;height:13px;background:#111;"></div>
<div class="a" style="left:586px;top:393px;width:55px;height:17px;background:#a9b0b7;"></div>
<svg class="a" style="left:590px;top:397px;" width="10" height="10" viewBox="0 0 10 10"><rect x="0.5" y="0.5" width="8" height="8" fill="#97a0a9" stroke="#586276" stroke-width="1"/></svg>
<div class="a" style="left:621px;top:395px;width:1px;height:13px;background:#111;"></div>
<div class="a" style="left:643px;top:393px;width:55px;height:17px;background:#a9b0b7;"></div>
<svg class="a" style="left:647px;top:397px;" width="10" height="10" viewBox="0 0 10 10"><rect x="0.5" y="0.5" width="8" height="8" fill="#97a0a9" stroke="#586276" stroke-width="1"/></svg>
<div class="a" style="left:678px;top:395px;width:1px;height:13px;background:#111;"></div>
<div class="a" style="left:700px;top:393px;width:55px;height:17px;background:#a9b0b7;"></div>
<svg class="a" style="left:704px;top:397px;" width="10" height="10" viewBox="0 0 10 10"><rect x="0.5" y="0.5" width="8" height="8" fill="#97a0a9" stroke="#586276" stroke-width="1"/></svg>
<div class="a" style="left:735px;top:395px;width:1px;height:13px;background:#111;"></div>
<div class="a" style="left:757px;top:393px;width:55px;height:17px;background:#a9b0b7;"></div>
<svg class="a" style="left:761px;top:397px;" width="10" height="10" viewBox="0 0 10 10"><rect x="0.5" y="0.5" width="8" height="8" fill="#97a0a9" stroke="#586276" stroke-width="1"/></svg>
<div class="a" style="left:792px;top:395px;width:1px;height:13px;background:#111;"></div>
<div class="a" style="left:814px;top:393px;width:55px;height:17px;background:#a9b0b7;"></div>
<svg class="a" style="left:818px;top:397px;" width="10" height="10" viewBox="0 0 10 10"><rect x="0.5" y="0.5" width="8" height="8" fill="#97a0a9" stroke="#586276" stroke-width="1"/></svg>
<div class="a" style="left:849px;top:395px;width:1px;height:13px;background:#111;"></div>
<div class="a" style="left:871px;top:393px;width:74px;height:17px;background:#a9b0b7;"></div>
<svg class="a" style="left:875px;top:397px;" width="10" height="10" viewBox="0 0 10 10"><rect x="0.5" y="0.5" width="8" height="8" fill="#97a0a9" stroke="#586276" stroke-width="1"/></svg>
<div class="a" style="left:915px;top:395px;width:1px;height:13px;background:#111;"></div>
<div class="a" style="left:948px;top:393px;width:125px;height:253px;background:#a9b0b7;"></div>
<div class="a" style="left:1076px;top:393px;width:17px;height:17px;background:#a9b0b7;"></div>
<div class="a" style="left:1095px;top:393px;width:17px;height:17px;background:#a9b0b7;"></div>
<div class="a" style="left:1114px;top:393px;width:17px;height:17px;background:#a9b0b7;"></div>
<div class="a" style="left:1133px;top:393px;width:17px;height:17px;background:#a9b0b7;"></div>
<div class="a" style="left:1152px;top:393px;width:17px;height:17px;background:#a9b0b7;"></div>
<div class="a" style="left:1171px;top:393px;width:17px;height:17px;background:#a9b0b7;"></div>
<div class="a" style="left:1190px;top:393px;width:17px;height:17px;background:#a9b0b7;"></div>
<div class="a" style="left:1209px;top:393px;width:17px;height:17px;background:#a9b0b7;"></div>
<div class="a" style="left:1228px;top:393px;width:17px;height:17px;background:#a9b0b7;"></div>
<div class="a" style="left:1247px;top:393px;width:17px;height:17px;background:#a9b0b7;"></div>
<div class="a" style="left:1266px;top:393px;width:17px;height:17px;background:#a9b0b7;"></div>
<div class="a" style="left:1285px;top:393px;width:17px;height:17px;background:#a9b0b7;"></div>
<div class="a" style="left:1306px;top:393px;width:93px;height:17px;background:#a9b0b7;"></div>
<svg class="a" style="left:1310px;top:397px;" width="10" height="10" viewBox="0 0 10 10"><rect x="0.5" y="0.5" width="8" height="8" fill="#97a0a9" stroke="#586276" stroke-width="1"/></svg>
<div class="a" style="left:1377px;top:394px;width:20px;height:14px;background:#f07a1a;border:1px solid #5a3a1a;"></div>
<svg class="a" style="left:1377px;top:394px;" width="20" height="14" viewBox="0 0 20 14"><path d="M4 3 L11 7 L4 11 Z" fill="#111"/><path d="M12 4 L17 4 M12 7 L17 7 M12 10 L17 10" stroke="#111" stroke-width="1.2"/></svg>
<div class="a" style="left:472px;top:412px;width:55px;height:112px;background:#d9dce0;"></div>
<div class="a t b" style="left:474px;top:413.0px;height:13px;line-height:13px;font-size:9px;font-weight:bold;color:#10121a;letter-spacing:0.4px;">A. From</div>
<div class="a" style="left:474px;top:425px;width:51px;height:13px;background:#e9eaeb;border:1px solid #4e586b;"></div>
<div class="a t" style="left:477px;top:425.25px;height:13.5px;line-height:13.5px;font-size:9.5px;font-weight:normal;color:#222;letter-spacing:0.2px;">Ext. In</div>
<svg class="a" style="left:516px;top:428px;" width="8" height="7" viewBox="0 0 8 7"><path d="M0.5 1 L7.5 1 L4 6.5 Z" fill="#0a0a0a"/></svg>
<div class="a" style="left:474px;top:441px;width:51px;height:13px;background:#e9eaeb;border:1px solid #4e586b;"></div>
<div class="a t" style="left:477px;top:441.25px;height:13.5px;line-height:13.5px;font-size:9.5px;font-weight:normal;color:#9aa4b0;letter-spacing:0.2px;">1</div>
<svg class="a" style="left:516px;top:444px;" width="8" height="7" viewBox="0 0 8 7"><path d="M0.5 1 L7.5 1 L4 6.5 Z" fill="#0a0a0a"/></svg>
<div class="a t b" style="left:474px;top:455.0px;height:13px;line-height:13px;font-size:9px;font-weight:bold;color:#10121a;letter-spacing:0.4px;">Monitor</div>
<div class="a" style="left:474px;top:467px;width:51px;height:13px;background:#d9dce0;border:1px solid #4e586b;"></div>
<div class="a t" style="left:477px;top:467.25px;height:13.5px;line-height:13.5px;font-size:9.5px;font-weight:normal;color:#222;letter-spacing:0.2px;">Off</div>
<svg class="a" style="left:516px;top:470px;" width="8" height="7" viewBox="0 0 8 7"><path d="M0.5 1 L7.5 1 L4 6.5 Z" fill="#0a0a0a"/></svg>
<div class="a t b" style="left:474px;top:481.0px;height:13px;line-height:13px;font-size:9px;font-weight:bold;color:#10121a;letter-spacing:0.4px;">A. To</div>
<div class="a" style="left:474px;top:493px;width:51px;height:13px;background:#e9eaeb;border:1px solid #4e586b;"></div>
<div class="a t" style="left:477px;top:493.25px;height:13.5px;line-height:13.5px;font-size:9.5px;font-weight:normal;color:#222;letter-spacing:0.2px;">Master</div>
<svg class="a" style="left:516px;top:496px;" width="8" height="7" viewBox="0 0 8 7"><path d="M0.5 1 L7.5 1 L4 6.5 Z" fill="#0a0a0a"/></svg>
<div class="a" style="left:474px;top:509px;width:51px;height:13px;background:#d9dce0;border:1px solid #4e586b;"></div>
<div class="a" style="left:529px;top:412px;width:55px;height:112px;background:#a9b0b7;"></div>
<div class="a t b" style="left:531px;top:413.0px;height:13px;line-height:13px;font-size:9px;font-weight:bold;color:#10121a;letter-spacing:0.4px;">A. From</div>
<div class="a" style="left:531px;top:425px;width:51px;height:13px;background:#e9eaeb;border:1px solid #4e586b;"></div>
<div class="a t" style="left:534px;top:425.25px;height:13.5px;line-height:13.5px;font-size:9.5px;font-weight:normal;color:#222;letter-spacing:0.2px;">Ext. In</div>
<svg class="a" style="left:573px;top:428px;" width="8" height="7" viewBox="0 0 8 7"><path d="M0.5 1 L7.5 1 L4 6.5 Z" fill="#0a0a0a"/></svg>
<div class="a" style="left:531px;top:441px;width:51px;height:13px;background:#e9eaeb;border:1px solid #4e586b;"></div>
<div class="a t" style="left:534px;top:441.25px;height:13.5px;line-height:13.5px;font-size:9.5px;font-weight:normal;color:#9aa4b0;letter-spacing:0.2px;">1</div>
<svg class="a" style="left:573px;top:444px;" width="8" height="7" viewBox="0 0 8 7"><path d="M0.5 1 L7.5 1 L4 6.5 Z" fill="#0a0a0a"/></svg>
<div class="a t b" style="left:531px;top:455.0px;height:13px;line-height:13px;font-size:9px;font-weight:bold;color:#10121a;letter-spacing:0.4px;">Monitor</div>
<div class="a" style="left:531px;top:467px;width:51px;height:13px;background:#a9b0b7;border:1px solid #4e586b;"></div>
<div class="a t" style="left:534px;top:467.25px;height:13.5px;line-height:13.5px;font-size:9.5px;font-weight:normal;color:#222;letter-spacing:0.2px;">Off</div>
<svg class="a" style="left:573px;top:470px;" width="8" height="7" viewBox="0 0 8 7"><path d="M0.5 1 L7.5 1 L4 6.5 Z" fill="#0a0a0a"/></svg>
<div class="a t b" style="left:531px;top:481.0px;height:13px;line-height:13px;font-size:9px;font-weight:bold;color:#10121a;letter-spacing:0.4px;">A. To</div>
<div class="a" style="left:531px;top:493px;width:51px;height:13px;background:#e9eaeb;border:1px solid #4e586b;"></div>
<div class="a t" style="left:534px;top:493.25px;height:13.5px;line-height:13.5px;font-size:9.5px;font-weight:normal;color:#222;letter-spacing:0.2px;">Master</div>
<svg class="a" style="left:573px;top:496px;" width="8" height="7" viewBox="0 0 8 7"><path d="M0.5 1 L7.5 1 L4 6.5 Z" fill="#0a0a0a"/></svg>
<div class="a" style="left:531px;top:509px;width:51px;height:13px;background:#a9b0b7;border:1px solid #4e586b;"></div>
<div class="a" style="left:586px;top:412px;width:55px;height:112px;background:#a9b0b7;"></div>
<div class="a t b" style="left:588px;top:413.0px;height:13px;line-height:13px;font-size:9px;font-weight:bold;color:#10121a;letter-spacing:0.4px;">A. From</div>
<div class="a" style="left:588px;top:425px;width:51px;height:13px;background:#e9eaeb;border:1px solid #4e586b;"></div>
<div class="a t" style="left:591px;top:425.25px;height:13.5px;line-height:13.5px;font-size:9.5px;font-weight:normal;color:#222;letter-spacing:0.2px;">Ext. In</div>
<svg class="a" style="left:630px;top:428px;" width="8" height="7" viewBox="0 0 8 7"><path d="M0.5 1 L7.5 1 L4 6.5 Z" fill="#0a0a0a"/></svg>
<div class="a" style="left:588px;top:441px;width:51px;height:13px;background:#e9eaeb;border:1px solid #4e586b;"></div>
<div class="a t" style="left:591px;top:441.25px;height:13.5px;line-height:13.5px;font-size:9.5px;font-weight:normal;color:#9aa4b0;letter-spacing:0.2px;">1</div>
<svg class="a" style="left:630px;top:444px;" width="8" height="7" viewBox="0 0 8 7"><path d="M0.5 1 L7.5 1 L4 6.5 Z" fill="#0a0a0a"/></svg>
<div class="a t b" style="left:588px;top:455.0px;height:13px;line-height:13px;font-size:9px;font-weight:bold;color:#10121a;letter-spacing:0.4px;">Monitor</div>
<div class="a" style="left:588px;top:467px;width:51px;height:13px;background:#a9b0b7;border:1px solid #4e586b;"></div>
<div class="a t" style="left:591px;top:467.25px;height:13.5px;line-height:13.5px;font-size:9.5px;font-weight:normal;color:#222;letter-spacing:0.2px;">Off</div>
<svg class="a" style="left:630px;top:470px;" width="8" height="7" viewBox="0 0 8 7"><path d="M0.5 1 L7.5 1 L4 6.5 Z" fill="#0a0a0a"/></svg>
<div class="a t b" style="left:588px;top:481.0px;height:13px;line-height:13px;font-size:9px;font-weight:bold;color:#10121a;letter-spacing:0.4px;">A. To</div>
<div class="a" style="left:588px;top:493px;width:51px;height:13px;background:#e9eaeb;border:1px solid #4e586b;"></div>
<div class="a t" style="left:591px;top:493.25px;height:13.5px;line-height:13.5px;font-size:9.5px;font-weight:normal;color:#222;letter-spacing:0.2px;">Master</div>
<svg class="a" style="left:630px;top:496px;" width="8" height="7" viewBox="0 0 8 7"><path d="M0.5 1 L7.5 1 L4 6.5 Z" fill="#0a0a0a"/></svg>
<div class="a" style="left:588px;top:509px;width:51px;height:13px;background:#a9b0b7;border:1px solid #4e586b;"></div>
<div class="a" style="left:643px;top:412px;width:55px;height:112px;background:#a9b0b7;"></div>
<div class="a t b" style="left:645px;top:413.0px;height:13px;line-height:13px;font-size:9px;font-weight:bold;color:#10121a;letter-spacing:0.4px;">A. From</div>
<div class="a" style="left:645px;top:425px;width:51px;height:13px;background:#e9eaeb;border:1px solid #4e586b;"></div>
<div class="a t" style="left:648px;top:425.25px;height:13.5px;line-height:13.5px;font-size:9.5px;font-weight:normal;color:#222;letter-spacing:0.2px;">Ext. In</div>
<svg class="a" style="left:687px;top:428px;" width="8" height="7" viewBox="0 0 8 7"><path d="M0.5 1 L7.5 1 L4 6.5 Z" fill="#0a0a0a"/></svg>
<div class="a" style="left:645px;top:441px;width:51px;height:13px;background:#e9eaeb;border:1px solid #4e586b;"></div>
<div class="a t" style="left:648px;top:441.25px;height:13.5px;line-height:13.5px;font-size:9.5px;font-weight:normal;color:#9aa4b0;letter-spacing:0.2px;">1</div>
<svg class="a" style="left:687px;top:444px;" width="8" height="7" viewBox="0 0 8 7"><path d="M0.5 1 L7.5 1 L4 6.5 Z" fill="#0a0a0a"/></svg>
<div class="a t b" style="left:645px;top:455.0px;height:13px;line-height:13px;font-size:9px;font-weight:bold;color:#10121a;letter-spacing:0.4px;">Monitor</div>
<div class="a" style="left:645px;top:467px;width:51px;height:13px;background:#a9b0b7;border:1px solid #4e586b;"></div>
<div class="a t" style="left:648px;top:467.25px;height:13.5px;line-height:13.5px;font-size:9.5px;font-weight:normal;color:#222;letter-spacing:0.2px;">Off</div>
<svg class="a" style="left:687px;top:470px;" width="8" height="7" viewBox="0 0 8 7"><path d="M0.5 1 L7.5 1 L4 6.5 Z" fill="#0a0a0a"/></svg>
<div class="a t b" style="left:645px;top:481.0px;height:13px;line-height:13px;font-size:9px;font-weight:bold;color:#10121a;letter-spacing:0.4px;">A. To</div>
<div class="a" style="left:645px;top:493px;width:51px;height:13px;background:#e9eaeb;border:1px solid #4e586b;"></div>
<div class="a t" style="left:648px;top:493.25px;height:13.5px;line-height:13.5px;font-size:9.5px;font-weight:normal;color:#222;letter-spacing:0.2px;">Master</div>
<svg class="a" style="left:687px;top:496px;" width="8" height="7" viewBox="0 0 8 7"><path d="M0.5 1 L7.5 1 L4 6.5 Z" fill="#0a0a0a"/></svg>
<div class="a" style="left:645px;top:509px;width:51px;height:13px;background:#a9b0b7;border:1px solid #4e586b;"></div>
<div class="a" style="left:700px;top:412px;width:55px;height:112px;background:#a9b0b7;"></div>
<div class="a t b" style="left:702px;top:413.0px;height:13px;line-height:13px;font-size:9px;font-weight:bold;color:#10121a;letter-spacing:0.4px;">A. From</div>
<div class="a" style="left:702px;top:425px;width:51px;height:13px;background:#e9eaeb;border:1px solid #4e586b;"></div>
<div class="a t" style="left:705px;top:425.25px;height:13.5px;line-height:13.5px;font-size:9.5px;font-weight:normal;color:#222;letter-spacing:0.2px;">Ext. In</div>
<svg class="a" style="left:744px;top:428px;" width="8" height="7" viewBox="0 0 8 7"><path d="M0.5 1 L7.5 1 L4 6.5 Z" fill="#0a0a0a"/></svg>
<div class="a" style="left:702px;top:441px;width:51px;height:13px;background:#e9eaeb;border:1px solid #4e586b;"></div>
<div class="a t" style="left:705px;top:441.25px;height:13.5px;line-height:13.5px;font-size:9.5px;font-weight:normal;color:#9aa4b0;letter-spacing:0.2px;">1</div>
<svg class="a" style="left:744px;top:444px;" width="8" height="7" viewBox="0 0 8 7"><path d="M0.5 1 L7.5 1 L4 6.5 Z" fill="#0a0a0a"/></svg>
<div class="a t b" style="left:702px;top:455.0px;height:13px;line-height:13px;font-size:9px;font-weight:bold;color:#10121a;letter-spacing:0.4px;">Monitor</div>
<div class="a" style="left:702px;top:467px;width:51px;height:13px;background:#a9b0b7;border:1px solid #4e586b;"></div>
<div class="a t" style="left:705px;top:467.25px;height:13.5px;line-height:13.5px;font-size:9.5px;font-weight:normal;color:#222;letter-spacing:0.2px;">Off</div>
<svg class="a" style="left:744px;top:470px;" width="8" height="7" viewBox="0 0 8 7"><path d="M0.5 1 L7.5 1 L4 6.5 Z" fill="#0a0a0a"/></svg>
<div class="a t b" style="left:702px;top:481.0px;height:13px;line-height:13px;font-size:9px;font-weight:bold;color:#10121a;letter-spacing:0.4px;">A. To</div>
<div class="a" style="left:702px;top:493px;width:51px;height:13px;background:#e9eaeb;border:1px solid #4e586b;"></div>
<div class="a t" style="left:705px;top:493.25px;height:13.5px;line-height:13.5px;font-size:9.5px;font-weight:normal;color:#222;letter-spacing:0.2px;">Master</div>
<svg class="a" style="left:744px;top:496px;" width="8" height="7" viewBox="0 0 8 7"><path d="M0.5 1 L7.5 1 L4 6.5 Z" fill="#0a0a0a"/></svg>
<div class="a" style="left:702px;top:509px;width:51px;height:13px;background:#a9b0b7;border:1px solid #4e586b;"></div>
<div class="a" style="left:757px;top:412px;width:55px;height:112px;background:#a9b0b7;"></div>
<div class="a t b" style="left:759px;top:413.0px;height:13px;line-height:13px;font-size:9px;font-weight:bold;color:#10121a;letter-spacing:0.4px;">A. From</div>
<div class="a" style="left:759px;top:425px;width:51px;height:13px;background:#e9eaeb;border:1px solid #4e586b;"></div>
<div class="a t" style="left:762px;top:425.25px;height:13.5px;line-height:13.5px;font-size:9.5px;font-weight:normal;color:#222;letter-spacing:0.2px;">Ext. In</div>
<svg class="a" style="left:801px;top:428px;" width="8" height="7" viewBox="0 0 8 7"><path d="M0.5 1 L7.5 1 L4 6.5 Z" fill="#0a0a0a"/></svg>
<div class="a" style="left:759px;top:441px;width:51px;height:13px;background:#e9eaeb;border:1px solid #4e586b;"></div>
<div class="a t" style="left:762px;top:441.25px;height:13.5px;line-height:13.5px;font-size:9.5px;font-weight:normal;color:#9aa4b0;letter-spacing:0.2px;">1</div>
<svg class="a" style="left:801px;top:444px;" width="8" height="7" viewBox="0 0 8 7"><path d="M0.5 1 L7.5 1 L4 6.5 Z" fill="#0a0a0a"/></svg>
<div class="a t b" style="left:759px;top:455.0px;height:13px;line-height:13px;font-size:9px;font-weight:bold;color:#10121a;letter-spacing:0.4px;">Monitor</div>
<div class="a" style="left:759px;top:467px;width:51px;height:13px;background:#a9b0b7;border:1px solid #4e586b;"></div>
<div class="a t" style="left:762px;top:467.25px;height:13.5px;line-height:13.5px;font-size:9.5px;font-weight:normal;color:#222;letter-spacing:0.2px;">Off</div>
<svg class="a" style="left:801px;top:470px;" width="8" height="7" viewBox="0 0 8 7"><path d="M0.5 1 L7.5 1 L4 6.5 Z" fill="#0a0a0a"/></svg>
<div class="a t b" style="left:759px;top:481.0px;height:13px;line-height:13px;font-size:9px;font-weight:bold;color:#10121a;letter-spacing:0.4px;">A. To</div>
<div class="a" style="left:759px;top:493px;width:51px;height:13px;background:#e9eaeb;border:1px solid #4e586b;"></div>
<div class="a t" style="left:762px;top:493.25px;height:13.5px;line-height:13.5px;font-size:9.5px;font-weight:normal;color:#222;letter-spacing:0.2px;">Master</div>
<svg class="a" style="left:801px;top:496px;" width="8" height="7" viewBox="0 0 8 7"><path d="M0.5 1 L7.5 1 L4 6.5 Z" fill="#0a0a0a"/></svg>
<div class="a" style="left:759px;top:509px;width:51px;height:13px;background:#a9b0b7;border:1px solid #4e586b;"></div>
<div class="a" style="left:814px;top:412px;width:55px;height:112px;background:#a9b0b7;"></div>
<div class="a t b" style="left:816px;top:413.0px;height:13px;line-height:13px;font-size:9px;font-weight:bold;color:#10121a;letter-spacing:0.4px;">A. From</div>
<div class="a" style="left:816px;top:425px;width:51px;height:13px;background:#e9eaeb;border:1px solid #4e586b;"></div>
<div class="a t" style="left:819px;top:425.25px;height:13.5px;line-height:13.5px;font-size:9.5px;font-weight:normal;color:#222;letter-spacing:0.2px;">Ext. In</div>
<svg class="a" style="left:858px;top:428px;" width="8" height="7" viewBox="0 0 8 7"><path d="M0.5 1 L7.5 1 L4 6.5 Z" fill="#0a0a0a"/></svg>
<div class="a" style="left:816px;top:441px;width:51px;height:13px;background:#e9eaeb;border:1px solid #4e586b;"></div>
<div class="a t" style="left:819px;top:441.25px;height:13.5px;line-height:13.5px;font-size:9.5px;font-weight:normal;color:#9aa4b0;letter-spacing:0.2px;">1</div>
<svg class="a" style="left:858px;top:444px;" width="8" height="7" viewBox="0 0 8 7"><path d="M0.5 1 L7.5 1 L4 6.5 Z" fill="#0a0a0a"/></svg>
<div class="a t b" style="left:816px;top:455.0px;height:13px;line-height:13px;font-size:9px;font-weight:bold;color:#10121a;letter-spacing:0.4px;">Monitor</div>
<div class="a" style="left:816px;top:467px;width:51px;height:13px;background:#a9b0b7;border:1px solid #4e586b;"></div>
<div class="a t" style="left:819px;top:467.25px;height:13.5px;line-height:13.5px;font-size:9.5px;font-weight:normal;color:#222;letter-spacing:0.2px;">Off</div>
<svg class="a" style="left:858px;top:470px;" width="8" height="7" viewBox="0 0 8 7"><path d="M0.5 1 L7.5 1 L4 6.5 Z" fill="#0a0a0a"/></svg>
<div class="a t b" style="left:816px;top:481.0px;height:13px;line-height:13px;font-size:9px;font-weight:bold;color:#10121a;letter-spacing:0.4px;">A. To</div>
<div class="a" style="left:816px;top:493px;width:51px;height:13px;background:#e9eaeb;border:1px solid #4e586b;"></div>
<div class="a t" style="left:819px;top:493.25px;height:13.5px;line-height:13.5px;font-size:9.5px;font-weight:normal;color:#222;letter-spacing:0.2px;">Master</div>
<svg class="a" style="left:858px;top:496px;" width="8" height="7" viewBox="0 0 8 7"><path d="M0.5 1 L7.5 1 L4 6.5 Z" fill="#0a0a0a"/></svg>
<div class="a" style="left:816px;top:509px;width:51px;height:13px;background:#a9b0b7;border:1px solid #4e586b;"></div>
<div class="a" style="left:871px;top:412px;width:74px;height:112px;background:#a9b0b7;"></div>
<div class="a t b" style="left:873px;top:413.0px;height:13px;line-height:13px;font-size:9px;font-weight:bold;color:#10121a;letter-spacing:0.4px;">MIDI From</div>
<div class="a" style="left:873px;top:425px;width:70px;height:13px;background:#e9eaeb;border:1px solid #4e586b;"></div>
<div class="a t" style="left:876px;top:425.25px;height:13.5px;line-height:13.5px;font-size:9.5px;font-weight:normal;color:#222;letter-spacing:0.2px;">All Ins</div>
<svg class="a" style="left:934px;top:428px;" width="8" height="7" viewBox="0 0 8 7"><path d="M0.5 1 L7.5 1 L4 6.5 Z" fill="#0a0a0a"/></svg>
<div class="a" style="left:873px;top:441px;width:70px;height:13px;background:#e9eaeb;border:1px solid #4e586b;"></div>
<div class="a t" style="left:876px;top:441.25px;height:13.5px;line-height:13.5px;font-size:9.5px;font-weight:normal;color:#222;letter-spacing:0.2px;">&nbsp;&nbsp;&nbsp;All Channe</div>
<svg class="a" style="left:934px;top:444px;" width="8" height="7" viewBox="0 0 8 7"><path d="M0.5 1 L7.5 1 L4 6.5 Z" fill="#0a0a0a"/></svg>
<svg class="a" style="left:875px;top:443px;" width="4" height="10" viewBox="0 0 4 10"><rect x="1" y="1" width="2" height="2" fill="#111"/><rect x="1" y="4" width="2" height="2" fill="#111"/><rect x="1" y="7" width="2" height="2" fill="#111"/></svg>
<div class="a t b" style="left:873px;top:455.0px;height:13px;line-height:13px;font-size:9px;font-weight:bold;color:#10121a;letter-spacing:0.4px;">Monitor</div>
<div class="a" style="left:873px;top:467px;width:19px;height:13px;background:#959da6;border:1px solid #4e586b;"></div>
<div class="a t" style="left:873px;top:467.25px;height:13.5px;line-height:13.5px;font-size:9.5px;font-weight:normal;color:#222;width:19px;text-align:center;letter-spacing:0.2px;">In</div>
<div class="a" style="left:895px;top:467px;width:26px;height:13px;background:#eef20a;border:1px solid #4e586b;"></div>
<div class="a t" style="left:895px;top:467.25px;height:13.5px;line-height:13.5px;font-size:9.5px;font-weight:normal;color:#222;width:26px;text-align:center;letter-spacing:0.2px;">Auto</div>
<div class="a" style="left:924px;top:467px;width:19px;height:13px;background:#959da6;border:1px solid #4e586b;"></div>
<div class="a t" style="left:924px;top:467.25px;height:13.5px;line-height:13.5px;font-size:9.5px;font-weight:normal;color:#222;width:19px;text-align:center;letter-spacing:0.2px;">Off</div>
<div class="a t b" style="left:873px;top:481.0px;height:13px;line-height:13px;font-size:9px;font-weight:bold;color:#10121a;letter-spacing:0.4px;">MIDI To</div>
<div class="a" style="left:873px;top:493px;width:70px;height:13px;background:#e9eaeb;border:1px solid #4e586b;"></div>
<div class="a t" style="left:876px;top:493.25px;height:13.5px;line-height:13.5px;font-size:9.5px;font-weight:normal;color:#222;letter-spacing:0.2px;">No Output</div>
<svg class="a" style="left:934px;top:496px;" width="8" height="7" viewBox="0 0 8 7"><path d="M0.5 1 L7.5 1 L4 6.5 Z" fill="#0a0a0a"/></svg>
<div class="a" style="left:873px;top:509px;width:70px;height:13px;background:#a9b0b7;border:1px solid #4e586b;"></div>
<div class="a" style="left:1076px;top:412px;width:17px;height:112px;background:#a9b0b7;"></div>
<div class="a" style="left:1095px;top:412px;width:17px;height:112px;background:#a9b0b7;"></div>
<div class="a" style="left:1114px;top:412px;width:17px;height:112px;background:#a9b0b7;"></div>
<div class="a" style="left:1133px;top:412px;width:17px;height:112px;background:#a9b0b7;"></div>
<div class="a" style="left:1152px;top:412px;width:17px;height:112px;background:#a9b0b7;"></div>
<div class="a" style="left:1171px;top:412px;width:17px;height:112px;background:#a9b0b7;"></div>
<div class="a" style="left:1190px;top:412px;width:17px;height:112px;background:#a9b0b7;"></div>
<div class="a" style="left:1209px;top:412px;width:17px;height:112px;background:#a9b0b7;"></div>
<div class="a" style="left:1228px;top:412px;width:17px;height:112px;background:#a9b0b7;"></div>
<div class="a" style="left:1247px;top:412px;width:17px;height:112px;background:#a9b0b7;"></div>
<div class="a" style="left:1266px;top:412px;width:17px;height:112px;background:#a9b0b7;"></div>
<div class="a" style="left:1285px;top:412px;width:17px;height:112px;background:#a9b0b7;"></div>
<div class="a" style="left:1306px;top:412px;width:93px;height:112px;background:#a9b0b7;"></div>
<div class="a t b" style="left:1308px;top:466.0px;height:13px;line-height:13px;font-size:9px;font-weight:bold;color:#10121a;letter-spacing:0.4px;">Cue Out</div>
<div class="a" style="left:1308px;top:478px;width:89px;height:13px;background:#e9eaeb;border:1px solid #4e586b;"></div>
<div class="a t" style="left:1311px;top:478.25px;height:13.5px;line-height:13.5px;font-size:9.5px;font-weight:normal;color:#222;letter-spacing:0.2px;">&nbsp;&nbsp;&nbsp;1/2</div>
<svg class="a" style="left:1388px;top:481px;" width="8" height="7" viewBox="0 0 8 7"><path d="M0.5 1 L7.5 1 L4 6.5 Z" fill="#0a0a0a"/></svg>
<svg class="a" style="left:1310px;top:480px;" width="6" height="10" viewBox="0 0 6 10"><rect x="0.5" y="0.5" width="2" height="2" fill="#111"/><rect x="3.5" y="0.5" width="2" height="2" fill="#111"/><rect x="0.5" y="3.5" width="2" height="6" fill="#111"/><rect x="3.5" y="3.5" width="2" height="6" fill="#111"/></svg>
<div class="a t b" style="left:1308px;top:497.0px;height:13px;line-height:13px;font-size:9px;font-weight:bold;color:#10121a;letter-spacing:0.4px;">Master Out</div>
<div class="a" style="left:1308px;top:509px;width:89px;height:13px;background:#e9eaeb;border:1px solid #4e586b;"></div>
<div class="a t" style="left:1311px;top:509.25px;height:13.5px;line-height:13.5px;font-size:9.5px;font-weight:normal;color:#222;letter-spacing:0.2px;">&nbsp;&nbsp;&nbsp;1/2</div>
<svg class="a" style="left:1388px;top:512px;" width="8" height="7" viewBox="0 0 8 7"><path d="M0.5 1 L7.5 1 L4 6.5 Z" fill="#0a0a0a"/></svg>
<svg class="a" style="left:1310px;top:511px;" width="6" height="10" viewBox="0 0 6 10"><rect x="0.5" y="0.5" width="2" height="2" fill="#111"/><rect x="3.5" y="0.5" width="2" height="2" fill="#111"/><rect x="0.5" y="3.5" width="2" height="6" fill="#111"/><rect x="3.5" y="3.5" width="2" height="6" fill="#111"/></svg>
<div class="a" style="left:472px;top:526px;width:55px;height:120px;background:#d9dce0;"></div>
<div class="a" style="left:477px;top:530px;width:23px;height:13px;background:#ececec;border:1px solid #4e586b;border-radius:7px;"></div>
<div class="a t" style="left:477px;top:529.5px;height:14px;line-height:14px;font-size:10px;font-weight:normal;color:#222;width:23px;text-align:center;">-13</div>
<div class="a" style="left:477px;top:557px;width:23px;height:13px;background:#ececec;border:1px solid #4e586b;"></div>
<div class="a t" style="left:477px;top:556.5px;height:14px;line-height:14px;font-size:10px;font-weight:normal;color:#333;width:23px;text-align:center;">C</div>
<div class="a" style="left:505px;top:530px;width:4px;height:112px;background:#15181e;"></div>
<div class="a" style="left:510px;top:530px;width:4px;height:112px;background:#15181e;"></div>
<div class="a" style="left:505px;top:541px;width:9px;height:1px;background:#d9dce0;"></div>
<div class="a" style="left:516px;top:531px;width:4px;height:1px;background:#5b6680;"></div>
<div class="a" style="left:516px;top:541px;width:4px;height:1px;background:#5b6680;"></div>
<div class="a" style="left:516px;top:552px;width:4px;height:1px;background:#5b6680;"></div>
<div class="a" style="left:516px;top:563px;width:4px;height:1px;background:#5b6680;"></div>
<div class="a" style="left:516px;top:574px;width:4px;height:1px;background:#5b6680;"></div>
<div class="a" style="left:516px;top:585px;width:4px;height:1px;background:#5b6680;"></div>
<div class="a" style="left:516px;top:596px;width:4px;height:1px;background:#5b6680;"></div>
<div class="a" style="left:516px;top:606px;width:4px;height:1px;background:#5b6680;"></div>
<div class="a" style="left:516px;top:615px;width:4px;height:1px;background:#5b6680;"></div>
<div class="a" style="left:516px;top:622px;width:4px;height:1px;background:#5b6680;"></div>
<div class="a" style="left:516px;top:628px;width:4px;height:1px;background:#5b6680;"></div>
<div class="a" style="left:516px;top:634px;width:4px;height:1px;background:#5b6680;"></div>
<div class="a" style="left:516px;top:638px;width:4px;height:1px;background:#5b6680;"></div>
<div class="a" style="left:516px;top:642px;width:4px;height:1px;background:#5b6680;"></div>
<svg class="a" style="left:514px;top:566px;" width="11" height="11" viewBox="0 0 11 11"><path d="M9.5 0.8 L9.5 10 L1 5.4 Z" fill="#97a0a9" stroke="#4e586b" stroke-width="1.1"/></svg>
<div class="a" style="left:477px;top:585px;width:23px;height:23px;background:#eef20a;border:1px solid #4e586b;"></div>
<div class="a t b" style="left:477px;top:589.0px;height:15px;line-height:15px;font-size:11px;font-weight:bold;color:#111;width:23px;text-align:center;">1</div>
<div class="a" style="left:477px;top:612px;width:23px;height:13px;background:#959da6;border:1px solid #4e586b;"></div>
<div class="a t" style="left:477px;top:611.5px;height:14px;line-height:14px;font-size:10px;font-weight:normal;color:#111;width:23px;text-align:center;">S</div>
<div class="a" style="left:477px;top:629px;width:23px;height:13px;background:#959da6;border:1px solid #4e586b;"></div>
<svg class="a" style="left:477px;top:629px;" width="23" height="13" viewBox="0 0 23 13"><circle cx="11.5" cy="6.5" r="3.5" fill="#0a0a0a"/></svg>
<div class="a" style="left:529px;top:526px;width:55px;height:120px;background:#a9b0b7;"></div>
<div class="a" style="left:534px;top:530px;width:23px;height:13px;background:#ececec;border:1px solid #4e586b;border-radius:7px;"></div>
<div class="a t" style="left:534px;top:529.5px;height:14px;line-height:14px;font-size:10px;font-weight:normal;color:#222;width:23px;text-align:center;">-Inf</div>
<div class="a" style="left:534px;top:557px;width:23px;height:13px;background:#ececec;border:1px solid #4e586b;"></div>
<div class="a t" style="left:534px;top:556.5px;height:14px;line-height:14px;font-size:10px;font-weight:normal;color:#333;width:23px;text-align:center;">C</div>
<div class="a" style="left:562px;top:530px;width:4px;height:112px;background:#15181e;"></div>
<div class="a" style="left:567px;top:530px;width:4px;height:112px;background:#15181e;"></div>
<div class="a" style="left:562px;top:541px;width:9px;height:1px;background:#a9b0b7;"></div>
<div class="a" style="left:573px;top:531px;width:4px;height:1px;background:#5b6680;"></div>
<div class="a" style="left:573px;top:541px;width:4px;height:1px;background:#5b6680;"></div>
<div class="a" style="left:573px;top:552px;width:4px;height:1px;background:#5b6680;"></div>
<div class="a" style="left:573px;top:563px;width:4px;height:1px;background:#5b6680;"></div>
<div class="a" style="left:573px;top:574px;width:4px;height:1px;background:#5b6680;"></div>
<div class="a" style="left:573px;top:585px;width:4px;height:1px;background:#5b6680;"></div>
<div class="a" style="left:573px;top:596px;width:4px;height:1px;background:#5b6680;"></div>
<div class="a" style="left:573px;top:606px;width:4px;height:1px;background:#5b6680;"></div>
<div class="a" style="left:573px;top:615px;width:4px;height:1px;background:#5b6680;"></div>
<div class="a" style="left:573px;top:622px;width:4px;height:1px;background:#5b6680;"></div>
<div class="a" style="left:573px;top:628px;width:4px;height:1px;background:#5b6680;"></div>
<div class="a" style="left:573px;top:634px;width:4px;height:1px;background:#5b6680;"></div>
<div class="a" style="left:573px;top:638px;width:4px;height:1px;background:#5b6680;"></div>
<div class="a" style="left:573px;top:642px;width:4px;height:1px;background:#5b6680;"></div>
<svg class="a" style="left:571px;top:536px;" width="11" height="11" viewBox="0 0 11 11"><path d="M9.5 0.8 L9.5 10 L1 5.4 Z" fill="#97a0a9" stroke="#4e586b" stroke-width="1.1"/></svg>
<div class="a" style="left:534px;top:585px;width:23px;height:23px;background:#eef20a;border:1px solid #4e586b;"></div>
<div class="a t b" style="left:534px;top:589.0px;height:15px;line-height:15px;font-size:11px;font-weight:bold;color:#111;width:23px;text-align:center;">2</div>
<div class="a" style="left:534px;top:612px;width:23px;height:13px;background:#959da6;border:1px solid #4e586b;"></div>
<div class="a t" style="left:534px;top:611.5px;height:14px;line-height:14px;font-size:10px;font-weight:normal;color:#111;width:23px;text-align:center;">S</div>
<div class="a" style="left:534px;top:629px;width:23px;height:13px;background:#959da6;border:1px solid #4e586b;"></div>
<svg class="a" style="left:534px;top:629px;" width="23" height="13" viewBox="0 0 23 13"><circle cx="11.5" cy="6.5" r="3.5" fill="#0a0a0a"/></svg>
<div class="a" style="left:586px;top:526px;width:55px;height:120px;background:#a9b0b7;"></div>
<div class="a" style="left:591px;top:530px;width:23px;height:13px;background:#ececec;border:1px solid #4e586b;border-radius:7px;"></div>
<div class="a t" style="left:591px;top:529.5px;height:14px;line-height:14px;font-size:10px;font-weight:normal;color:#222;width:23px;text-align:center;">-Inf</div>
<div class="a" style="left:591px;top:557px;width:23px;height:13px;background:#ececec;border:1px solid #4e586b;"></div>
<div class="a t" style="left:591px;top:556.5px;height:14px;line-height:14px;font-size:10px;font-weight:normal;color:#333;width:23px;text-align:center;">C</div>
<div class="a" style="left:619px;top:530px;width:4px;height:112px;background:#15181e;"></div>
<div class="a" style="left:624px;top:530px;width:4px;height:112px;background:#15181e;"></div>
<div class="a" style="left:619px;top:541px;width:9px;height:1px;background:#a9b0b7;"></div>
<div class="a" style="left:630px;top:531px;width:4px;height:1px;background:#5b6680;"></div>
<div class="a" style="left:630px;top:541px;width:4px;height:1px;background:#5b6680;"></div>
<div class="a" style="left:630px;top:552px;width:4px;height:1px;background:#5b6680;"></div>
<div class="a" style="left:630px;top:563px;width:4px;height:1px;background:#5b6680;"></div>
<div class="a" style="left:630px;top:574px;width:4px;height:1px;background:#5b6680;"></div>
<div class="a" style="left:630px;top:585px;width:4px;height:1px;background:#5b6680;"></div>
<div class="a" style="left:630px;top:596px;width:4px;height:1px;background:#5b6680;"></div>
<div class="a" style="left:630px;top:606px;width:4px;height:1px;background:#5b6680;"></div>
<div class="a" style="left:630px;top:615px;width:4px;height:1px;background:#5b6680;"></div>
<div class="a" style="left:630px;top:622px;width:4px;height:1px;background:#5b6680;"></div>
<div class="a" style="left:630px;top:628px;width:4px;height:1px;background:#5b6680;"></div>
<div class="a" style="left:630px;top:634px;width:4px;height:1px;background:#5b6680;"></div>
<div class="a" style="left:630px;top:638px;width:4px;height:1px;background:#5b6680;"></div>
<div class="a" style="left:630px;top:642px;width:4px;height:1px;background:#5b6680;"></div>
<svg class="a" style="left:628px;top:536px;" width="11" height="11" viewBox="0 0 11 11"><path d="M9.5 0.8 L9.5 10 L1 5.4 Z" fill="#97a0a9" stroke="#4e586b" stroke-width="1.1"/></svg>
<div class="a" style="left:591px;top:585px;width:23px;height:23px;background:#eef20a;border:1px solid #4e586b;"></div>
<div class="a t b" style="left:591px;top:589.0px;height:15px;line-height:15px;font-size:11px;font-weight:bold;color:#111;width:23px;text-align:center;">3</div>
<div class="a" style="left:591px;top:612px;width:23px;height:13px;background:#959da6;border:1px solid #4e586b;"></div>
<div class="a t" style="left:591px;top:611.5px;height:14px;line-height:14px;font-size:10px;font-weight:normal;color:#111;width:23px;text-align:center;">S</div>
<div class="a" style="left:591px;top:629px;width:23px;height:13px;background:#959da6;border:1px solid #4e586b;"></div>
<svg class="a" style="left:591px;top:629px;" width="23" height="13" viewBox="0 0 23 13"><circle cx="11.5" cy="6.5" r="3.5" fill="#0a0a0a"/></svg>
<div class="a" style="left:643px;top:526px;width:55px;height:120px;background:#a9b0b7;"></div>
<div class="a" style="left:648px;top:530px;width:23px;height:13px;background:#ececec;border:1px solid #4e586b;border-radius:7px;"></div>
<div class="a t" style="left:648px;top:529.5px;height:14px;line-height:14px;font-size:10px;font-weight:normal;color:#222;width:23px;text-align:center;">-Inf</div>
<div class="a" style="left:648px;top:557px;width:23px;height:13px;background:#ececec;border:1px solid #4e586b;"></div>
<div class="a t" style="left:648px;top:556.5px;height:14px;line-height:14px;font-size:10px;font-weight:normal;color:#333;width:23px;text-align:center;">C</div>
<div class="a" style="left:676px;top:530px;width:4px;height:112px;background:#15181e;"></div>
<div class="a" style="left:681px;top:530px;width:4px;height:112px;background:#15181e;"></div>
<div class="a" style="left:676px;top:541px;width:9px;height:1px;background:#a9b0b7;"></div>
<div class="a" style="left:687px;top:531px;width:4px;height:1px;background:#5b6680;"></div>
<div class="a" style="left:687px;top:541px;width:4px;height:1px;background:#5b6680;"></div>
<div class="a" style="left:687px;top:552px;width:4px;height:1px;background:#5b6680;"></div>
<div class="a" style="left:687px;top:563px;width:4px;height:1px;background:#5b6680;"></div>
<div class="a" style="left:687px;top:574px;width:4px;height:1px;background:#5b6680;"></div>
<div class="a" style="left:687px;top:585px;width:4px;height:1px;background:#5b6680;"></div>
<div class="a" style="left:687px;top:596px;width:4px;height:1px;background:#5b6680;"></div>
<div class="a" style="left:687px;top:606px;width:4px;height:1px;background:#5b6680;"></div>
<div class="a" style="left:687px;top:615px;width:4px;height:1px;background:#5b6680;"></div>
<div class="a" style="left:687px;top:622px;width:4px;height:1px;background:#5b6680;"></div>
<div class="a" style="left:687px;top:628px;width:4px;height:1px;background:#5b6680;"></div>
<div class="a" style="left:687px;top:634px;width:4px;height:1px;background:#5b6680;"></div>
<div class="a" style="left:687px;top:638px;width:4px;height:1px;background:#5b6680;"></div>
<div class="a" style="left:687px;top:642px;width:4px;height:1px;background:#5b6680;"></div>
<svg class="a" style="left:685px;top:536px;" width="11" height="11" viewBox="0 0 11 11"><path d="M9.5 0.8 L9.5 10 L1 5.4 Z" fill="#97a0a9" stroke="#4e586b" stroke-width="1.1"/></svg>
<div class="a" style="left:648px;top:585px;width:23px;height:23px;background:#eef20a;border:1px solid #4e586b;"></div>
<div class="a t b" style="left:648px;top:589.0px;height:15px;line-height:15px;font-size:11px;font-weight:bold;color:#111;width:23px;text-align:center;">4</div>
<div class="a" style="left:648px;top:612px;width:23px;height:13px;background:#959da6;border:1px solid #4e586b;"></div>
<div class="a t" style="left:648px;top:611.5px;height:14px;line-height:14px;font-size:10px;font-weight:normal;color:#111;width:23px;text-align:center;">S</div>
<div class="a" style="left:648px;top:629px;width:23px;height:13px;background:#959da6;border:1px solid #4e586b;"></div>
<svg class="a" style="left:648px;top:629px;" width="23" height="13" viewBox="0 0 23 13"><circle cx="11.5" cy="6.5" r="3.5" fill="#0a0a0a"/></svg>
<div class="a" style="left:700px;top:526px;width:55px;height:120px;background:#a9b0b7;"></div>
<div class="a" style="left:705px;top:530px;width:23px;height:13px;background:#ececec;border:1px solid #4e586b;border-radius:7px;"></div>
<div class="a t" style="left:705px;top:529.5px;height:14px;line-height:14px;font-size:10px;font-weight:normal;color:#222;width:23px;text-align:center;">-Inf</div>
<div class="a" style="left:705px;top:557px;width:23px;height:13px;background:#ececec;border:1px solid #4e586b;"></div>
<div class="a t" style="left:705px;top:556.5px;height:14px;line-height:14px;font-size:10px;font-weight:normal;color:#333;width:23px;text-align:center;">C</div>
<div class="a" style="left:733px;top:530px;width:4px;height:112px;background:#15181e;"></div>
<div class="a" style="left:738px;top:530px;width:4px;height:112px;background:#15181e;"></div>
<div class="a" style="left:733px;top:541px;width:9px;height:1px;background:#a9b0b7;"></div>
<div class="a" style="left:744px;top:531px;width:4px;height:1px;background:#5b6680;"></div>
<div class="a" style="left:744px;top:541px;width:4px;height:1px;background:#5b6680;"></div>
<div class="a" style="left:744px;top:552px;width:4px;height:1px;background:#5b6680;"></div>
<div class="a" style="left:744px;top:563px;width:4px;height:1px;background:#5b6680;"></div>
<div class="a" style="left:744px;top:574px;width:4px;height:1px;background:#5b6680;"></div>
<div class="a" style="left:744px;top:585px;width:4px;height:1px;background:#5b6680;"></div>
<div class="a" style="left:744px;top:596px;width:4px;height:1px;background:#5b6680;"></div>
<div class="a" style="left:744px;top:606px;width:4px;height:1px;background:#5b6680;"></div>
<div class="a" style="left:744px;top:615px;width:4px;height:1px;background:#5b6680;"></div>
<div class="a" style="left:744px;top:622px;width:4px;height:1px;background:#5b6680;"></div>
<div class="a" style="left:744px;top:628px;width:4px;height:1px;background:#5b6680;"></div>
<div class="a" style="left:744px;top:634px;width:4px;height:1px;background:#5b6680;"></div>
<div class="a" style="left:744px;top:638px;width:4px;height:1px;background:#5b6680;"></div>
<div class="a" style="left:744px;top:642px;width:4px;height:1px;background:#5b6680;"></div>
<svg class="a" style="left:742px;top:536px;" width="11" height="11" viewBox="0 0 11 11"><path d="M9.5 0.8 L9.5 10 L1 5.4 Z" fill="#97a0a9" stroke="#4e586b" stroke-width="1.1"/></svg>
<div class="a" style="left:705px;top:585px;width:23px;height:23px;background:#eef20a;border:1px solid #4e586b;"></div>
<div class="a t b" style="left:705px;top:589.0px;height:15px;line-height:15px;font-size:11px;font-weight:bold;color:#111;width:23px;text-align:center;">5</div>
<div class="a" style="left:705px;top:612px;width:23px;height:13px;background:#959da6;border:1px solid #4e586b;"></div>
<div class="a t" style="left:705px;top:611.5px;height:14px;line-height:14px;font-size:10px;font-weight:normal;color:#111;width:23px;text-align:center;">S</div>
<div class="a" style="left:705px;top:629px;width:23px;height:13px;background:#959da6;border:1px solid #4e586b;"></div>
<svg class="a" style="left:705px;top:629px;" width="23" height="13" viewBox="0 0 23 13"><circle cx="11.5" cy="6.5" r="3.5" fill="#0a0a0a"/></svg>
<div class="a" style="left:757px;top:526px;width:55px;height:120px;background:#a9b0b7;"></div>
<div class="a" style="left:762px;top:530px;width:23px;height:13px;background:#ececec;border:1px solid #4e586b;border-radius:7px;"></div>
<div class="a t" style="left:762px;top:529.5px;height:14px;line-height:14px;font-size:10px;font-weight:normal;color:#222;width:23px;text-align:center;">-Inf</div>
<div class="a" style="left:762px;top:557px;width:23px;height:13px;background:#ececec;border:1px solid #4e586b;"></div>
<div class="a t" style="left:762px;top:556.5px;height:14px;line-height:14px;font-size:10px;font-weight:normal;color:#333;width:23px;text-align:center;">C</div>
<div class="a" style="left:790px;top:530px;width:4px;height:112px;background:#15181e;"></div>
<div class="a" style="left:795px;top:530px;width:4px;height:112px;background:#15181e;"></div>
<div class="a" style="left:790px;top:541px;width:9px;height:1px;background:#a9b0b7;"></div>
<div class="a" style="left:801px;top:531px;width:4px;height:1px;background:#5b6680;"></div>
<div class="a" style="left:801px;top:541px;width:4px;height:1px;background:#5b6680;"></div>
<div class="a" style="left:801px;top:552px;width:4px;height:1px;background:#5b6680;"></div>
<div class="a" style="left:801px;top:563px;width:4px;height:1px;background:#5b6680;"></div>
<div class="a" style="left:801px;top:574px;width:4px;height:1px;background:#5b6680;"></div>
<div class="a" style="left:801px;top:585px;width:4px;height:1px;background:#5b6680;"></div>
<div class="a" style="left:801px;top:596px;width:4px;height:1px;background:#5b6680;"></div>
<div class="a" style="left:801px;top:606px;width:4px;height:1px;background:#5b6680;"></div>
<div class="a" style="left:801px;top:615px;width:4px;height:1px;background:#5b6680;"></div>
<div class="a" style="left:801px;top:622px;width:4px;height:1px;background:#5b6680;"></div>
<div class="a" style="left:801px;top:628px;width:4px;height:1px;background:#5b6680;"></div>
<div class="a" style="left:801px;top:634px;width:4px;height:1px;background:#5b6680;"></div>
<div class="a" style="left:801px;top:638px;width:4px;height:1px;background:#5b6680;"></div>
<div class="a" style="left:801px;top:642px;width:4px;height:1px;background:#5b6680;"></div>
<svg class="a" style="left:799px;top:536px;" width="11" height="11" viewBox="0 0 11 11"><path d="M9.5 0.8 L9.5 10 L1 5.4 Z" fill="#97a0a9" stroke="#4e586b" stroke-width="1.1"/></svg>
<div class="a" style="left:762px;top:585px;width:23px;height:23px;background:#eef20a;border:1px solid #4e586b;"></div>
<div class="a t b" style="left:762px;top:589.0px;height:15px;line-height:15px;font-size:11px;font-weight:bold;color:#111;width:23px;text-align:center;">6</div>
<div class="a" style="left:762px;top:612px;width:23px;height:13px;background:#959da6;border:1px solid #4e586b;"></div>
<div class="a t" style="left:762px;top:611.5px;height:14px;line-height:14px;font-size:10px;font-weight:normal;color:#111;width:23px;text-align:center;">S</div>
<div class="a" style="left:762px;top:629px;width:23px;height:13px;background:#959da6;border:1px solid #4e586b;"></div>
<svg class="a" style="left:762px;top:629px;" width="23" height="13" viewBox="0 0 23 13"><circle cx="11.5" cy="6.5" r="3.5" fill="#0a0a0a"/></svg>
<div class="a" style="left:814px;top:526px;width:55px;height:120px;background:#a9b0b7;"></div>
<div class="a" style="left:819px;top:530px;width:23px;height:13px;background:#ececec;border:1px solid #4e586b;border-radius:7px;"></div>
<div class="a t" style="left:819px;top:529.5px;height:14px;line-height:14px;font-size:10px;font-weight:normal;color:#222;width:23px;text-align:center;">-Inf</div>
<div class="a" style="left:819px;top:557px;width:23px;height:13px;background:#ececec;border:1px solid #4e586b;"></div>
<div class="a t" style="left:819px;top:556.5px;height:14px;line-height:14px;font-size:10px;font-weight:normal;color:#333;width:23px;text-align:center;">C</div>
<div class="a" style="left:847px;top:530px;width:4px;height:112px;background:#15181e;"></div>
<div class="a" style="left:852px;top:530px;width:4px;height:112px;background:#15181e;"></div>
<div class="a" style="left:847px;top:541px;width:9px;height:1px;background:#a9b0b7;"></div>
<div class="a" style="left:858px;top:531px;width:4px;height:1px;background:#5b6680;"></div>
<div class="a" style="left:858px;top:541px;width:4px;height:1px;background:#5b6680;"></div>
<div class="a" style="left:858px;top:552px;width:4px;height:1px;background:#5b6680;"></div>
<div class="a" style="left:858px;top:563px;width:4px;height:1px;background:#5b6680;"></div>
<div class="a" style="left:858px;top:574px;width:4px;height:1px;background:#5b6680;"></div>
<div class="a" style="left:858px;top:585px;width:4px;height:1px;background:#5b6680;"></div>
<div class="a" style="left:858px;top:596px;width:4px;height:1px;background:#5b6680;"></div>
<div class="a" style="left:858px;top:606px;width:4px;height:1px;background:#5b6680;"></div>
<div class="a" style="left:858px;top:615px;width:4px;height:1px;background:#5b6680;"></div>
<div class="a" style="left:858px;top:622px;width:4px;height:1px;background:#5b6680;"></div>
<div class="a" style="left:858px;top:628px;width:4px;height:1px;background:#5b6680;"></div>
<div class="a" style="left:858px;top:634px;width:4px;height:1px;background:#5b6680;"></div>
<div class="a" style="left:858px;top:638px;width:4px;height:1px;background:#5b6680;"></div>
<div class="a" style="left:858px;top:642px;width:4px;height:1px;background:#5b6680;"></div>
<svg class="a" style="left:856px;top:536px;" width="11" height="11" viewBox="0 0 11 11"><path d="M9.5 0.8 L9.5 10 L1 5.4 Z" fill="#97a0a9" stroke="#4e586b" stroke-width="1.1"/></svg>
<div class="a" style="left:819px;top:585px;width:23px;height:23px;background:#eef20a;border:1px solid #4e586b;"></div>
<div class="a t b" style="left:819px;top:589.0px;height:15px;line-height:15px;font-size:11px;font-weight:bold;color:#111;width:23px;text-align:center;">7</div>
<div class="a" style="left:819px;top:612px;width:23px;height:13px;background:#959da6;border:1px solid #4e586b;"></div>
<div class="a t" style="left:819px;top:611.5px;height:14px;line-height:14px;font-size:10px;font-weight:normal;color:#111;width:23px;text-align:center;">S</div>
<div class="a" style="left:819px;top:629px;width:23px;height:13px;background:#959da6;border:1px solid #4e586b;"></div>
<svg class="a" style="left:819px;top:629px;" width="23" height="13" viewBox="0 0 23 13"><circle cx="11.5" cy="6.5" r="3.5" fill="#0a0a0a"/></svg>
<div class="a" style="left:871px;top:526px;width:74px;height:120px;background:#a9b0b7;"></div>
<svg class="a" style="left:924px;top:529px;" width="6" height="6" viewBox="0 0 6 6"><circle cx="3" cy="3" r="2.6" fill="#111"/></svg>
<svg class="a" style="left:924px;top:537px;" width="6" height="6" viewBox="0 0 6 6"><circle cx="3" cy="3" r="2.6" fill="#111"/></svg>
<svg class="a" style="left:924px;top:545px;" width="6" height="6" viewBox="0 0 6 6"><circle cx="3" cy="3" r="2.6" fill="#111"/></svg>
<svg class="a" style="left:924px;top:553px;" width="6" height="6" viewBox="0 0 6 6"><circle cx="3" cy="3" r="2.6" fill="#111"/></svg>
<svg class="a" style="left:924px;top:561px;" width="6" height="6" viewBox="0 0 6 6"><circle cx="3" cy="3" r="2.6" fill="#111"/></svg>
<svg class="a" style="left:924px;top:569px;" width="6" height="6" viewBox="0 0 6 6"><circle cx="3" cy="3" r="2.6" fill="#111"/></svg>
<svg class="a" style="left:924px;top:577px;" width="6" height="6" viewBox="0 0 6 6"><circle cx="3" cy="3" r="2.6" fill="#111"/></svg>
<svg class="a" style="left:924px;top:585px;" width="6" height="6" viewBox="0 0 6 6"><circle cx="3" cy="3" r="2.6" fill="#111"/></svg>
<svg class="a" style="left:924px;top:593px;" width="6" height="6" viewBox="0 0 6 6"><circle cx="3" cy="3" r="2.6" fill="#111"/></svg>
<svg class="a" style="left:924px;top:601px;" width="6" height="6" viewBox="0 0 6 6"><circle cx="3" cy="3" r="2.6" fill="#111"/></svg>
<svg class="a" style="left:924px;top:609px;" width="6" height="6" viewBox="0 0 6 6"><circle cx="3" cy="3" r="2.6" fill="#111"/></svg>
<svg class="a" style="left:924px;top:617px;" width="6" height="6" viewBox="0 0 6 6"><circle cx="3" cy="3" r="2.6" fill="#111"/></svg>
<svg class="a" style="left:924px;top:625px;" width="6" height="6" viewBox="0 0 6 6"><circle cx="3" cy="3" r="2.6" fill="#111"/></svg>
<svg class="a" style="left:924px;top:633px;" width="6" height="6" viewBox="0 0 6 6"><circle cx="3" cy="3" r="2.6" fill="#111"/></svg>
<div class="a" style="left:880px;top:585px;width:23px;height:23px;background:#eef20a;border:1px solid #4e586b;"></div>
<div class="a t b" style="left:880px;top:589.0px;height:15px;line-height:15px;font-size:11px;font-weight:bold;color:#111;width:23px;text-align:center;">8</div>
<div class="a" style="left:880px;top:612px;width:23px;height:13px;background:#959da6;border:1px solid #4e586b;"></div>
<div class="a t" style="left:880px;top:611.5px;height:14px;line-height:14px;font-size:10px;font-weight:normal;color:#111;width:23px;text-align:center;">S</div>
<div class="a" style="left:880px;top:629px;width:23px;height:13px;background:#959da6;border:1px solid #4e586b;"></div>
<svg class="a" style="left:880px;top:629px;" width="23" height="13" viewBox="0 0 23 13"><circle cx="11.5" cy="6.5" r="3.5" fill="#0a0a0a"/><path d="M11.5 4 L11.5 6.5 L9.5 8" stroke="#ddd" stroke-width="0.9" fill="none"/></svg>
<div class="a" style="left:1076px;top:526px;width:17px;height:120px;background:#a9b0b7;"></div>
<svg class="a" style="left:1078px;top:530px;" width="13" height="13" viewBox="0 0 13 13"><circle cx="6.5" cy="6.5" r="6" fill="#e8e8e8" stroke="#5b6680" stroke-width="1"/></svg>
<div class="a" style="left:1079px;top:547px;width:2px;height:33px;background:#15181e;"></div>
<div class="a" style="left:1082px;top:547px;width:2px;height:33px;background:#15181e;"></div>
<div class="a" style="left:1079px;top:550px;width:5px;height:1px;background:#a9b0b7;"></div>
<svg class="a" style="left:1079px;top:546px;" width="12" height="10" viewBox="0 0 12 10"><path d="M1.7 4.3 L4.5 1.5 L10.7 1.5 L10.7 8.7 Z" fill="#b4bac0" stroke="#4e586b" stroke-width="1"/></svg>
<div class="a" style="left:1078px;top:585px;width:13px;height:23px;background:#eef20a;border:1px solid #4e586b;"></div>
<div class="a t b" style="left:1078px;top:589.0px;height:15px;line-height:15px;font-size:11px;font-weight:bold;color:#111;width:13px;text-align:center;">A</div>
<div class="a" style="left:1078px;top:612px;width:13px;height:13px;background:#959da6;border:1px solid #4e586b;"></div>
<div class="a t" style="left:1078px;top:612.0px;height:13px;line-height:13px;font-size:9px;font-weight:normal;color:#111;width:13px;text-align:center;">S</div>
<div class="a" style="left:1095px;top:526px;width:17px;height:120px;background:#a9b0b7;"></div>
<svg class="a" style="left:1097px;top:530px;" width="13" height="13" viewBox="0 0 13 13"><circle cx="6.5" cy="6.5" r="6" fill="#e8e8e8" stroke="#5b6680" stroke-width="1"/></svg>
<div class="a" style="left:1098px;top:547px;width:2px;height:33px;background:#15181e;"></div>
<div class="a" style="left:1101px;top:547px;width:2px;height:33px;background:#15181e;"></div>
<div class="a" style="left:1098px;top:550px;width:5px;height:1px;background:#a9b0b7;"></div>
<svg class="a" style="left:1098px;top:546px;" width="12" height="10" viewBox="0 0 12 10"><path d="M1.7 4.3 L4.5 1.5 L10.7 1.5 L10.7 8.7 Z" fill="#b4bac0" stroke="#4e586b" stroke-width="1"/></svg>
<div class="a" style="left:1097px;top:585px;width:13px;height:23px;background:#eef20a;border:1px solid #4e586b;"></div>
<div class="a t b" style="left:1097px;top:589.0px;height:15px;line-height:15px;font-size:11px;font-weight:bold;color:#111;width:13px;text-align:center;">B</div>
<div class="a" style="left:1097px;top:612px;width:13px;height:13px;background:#959da6;border:1px solid #4e586b;"></div>
<div class="a t" style="left:1097px;top:612.0px;height:13px;line-height:13px;font-size:9px;font-weight:normal;color:#111;width:13px;text-align:center;">S</div>
<div class="a" style="left:1114px;top:526px;width:17px;height:120px;background:#a9b0b7;"></div>
<svg class="a" style="left:1116px;top:530px;" width="13" height="13" viewBox="0 0 13 13"><circle cx="6.5" cy="6.5" r="6" fill="#e8e8e8" stroke="#5b6680" stroke-width="1"/></svg>
<div class="a" style="left:1117px;top:547px;width:2px;height:33px;background:#15181e;"></div>
<div class="a" style="left:1120px;top:547px;width:2px;height:33px;background:#15181e;"></div>
<div class="a" style="left:1117px;top:550px;width:5px;height:1px;background:#a9b0b7;"></div>
<svg class="a" style="left:1117px;top:546px;" width="12" height="10" viewBox="0 0 12 10"><path d="M1.7 4.3 L4.5 1.5 L10.7 1.5 L10.7 8.7 Z" fill="#b4bac0" stroke="#4e586b" stroke-width="1"/></svg>
<div class="a" style="left:1116px;top:585px;width:13px;height:23px;background:#eef20a;border:1px solid #4e586b;"></div>
<div class="a t b" style="left:1116px;top:589.0px;height:15px;line-height:15px;font-size:11px;font-weight:bold;color:#111;width:13px;text-align:center;">C</div>
<div class="a" style="left:1116px;top:612px;width:13px;height:13px;background:#959da6;border:1px solid #4e586b;"></div>
<div class="a t" style="left:1116px;top:612.0px;height:13px;line-height:13px;font-size:9px;font-weight:normal;color:#111;width:13px;text-align:center;">S</div>
<div class="a" style="left:1133px;top:526px;width:17px;height:120px;background:#a9b0b7;"></div>
<svg class="a" style="left:1135px;top:530px;" width="13" height="13" viewBox="0 0 13 13"><circle cx="6.5" cy="6.5" r="6" fill="#e8e8e8" stroke="#5b6680" stroke-width="1"/></svg>
<div class="a" style="left:1136px;top:547px;width:2px;height:33px;background:#15181e;"></div>
<div class="a" style="left:1139px;top:547px;width:2px;height:33px;background:#15181e;"></div>
<div class="a" style="left:1136px;top:550px;width:5px;height:1px;background:#a9b0b7;"></div>
<svg class="a" style="left:1136px;top:546px;" width="12" height="10" viewBox="0 0 12 10"><path d="M1.7 4.3 L4.5 1.5 L10.7 1.5 L10.7 8.7 Z" fill="#b4bac0" stroke="#4e586b" stroke-width="1"/></svg>
<div class="a" style="left:1135px;top:585px;width:13px;height:23px;background:#eef20a;border:1px solid #4e586b;"></div>
<div class="a t b" style="left:1135px;top:589.0px;height:15px;line-height:15px;font-size:11px;font-weight:bold;color:#111;width:13px;text-align:center;">D</div>
<div class="a" style="left:1135px;top:612px;width:13px;height:13px;background:#959da6;border:1px solid #4e586b;"></div>
<div class="a t" style="left:1135px;top:612.0px;height:13px;line-height:13px;font-size:9px;font-weight:normal;color:#111;width:13px;text-align:center;">S</div>
<div class="a" style="left:1152px;top:526px;width:17px;height:120px;background:#a9b0b7;"></div>
<svg class="a" style="left:1154px;top:530px;" width="13" height="13" viewBox="0 0 13 13"><circle cx="6.5" cy="6.5" r="6" fill="#e8e8e8" stroke="#5b6680" stroke-width="1"/></svg>
<div class="a" style="left:1155px;top:547px;width:2px;height:33px;background:#15181e;"></div>
<div class="a" style="left:1158px;top:547px;width:2px;height:33px;background:#15181e;"></div>
<div class="a" style="left:1155px;top:550px;width:5px;height:1px;background:#a9b0b7;"></div>
<svg class="a" style="left:1155px;top:546px;" width="12" height="10" viewBox="0 0 12 10"><path d="M1.7 4.3 L4.5 1.5 L10.7 1.5 L10.7 8.7 Z" fill="#b4bac0" stroke="#4e586b" stroke-width="1"/></svg>
<div class="a" style="left:1154px;top:585px;width:13px;height:23px;background:#eef20a;border:1px solid #4e586b;"></div>
<div class="a t b" style="left:1154px;top:589.0px;height:15px;line-height:15px;font-size:11px;font-weight:bold;color:#111;width:13px;text-align:center;">E</div>
<div class="a" style="left:1154px;top:612px;width:13px;height:13px;background:#959da6;border:1px solid #4e586b;"></div>
<div class="a t" style="left:1154px;top:612.0px;height:13px;line-height:13px;font-size:9px;font-weight:normal;color:#111;width:13px;text-align:center;">S</div>
<div class="a" style="left:1171px;top:526px;width:17px;height:120px;background:#a9b0b7;"></div>
<svg class="a" style="left:1173px;top:530px;" width="13" height="13" viewBox="0 0 13 13"><circle cx="6.5" cy="6.5" r="6" fill="#e8e8e8" stroke="#5b6680" stroke-width="1"/></svg>
<div class="a" style="left:1174px;top:547px;width:2px;height:33px;background:#15181e;"></div>
<div class="a" style="left:1177px;top:547px;width:2px;height:33px;background:#15181e;"></div>
<div class="a" style="left:1174px;top:550px;width:5px;height:1px;background:#a9b0b7;"></div>
<svg class="a" style="left:1174px;top:546px;" width="12" height="10" viewBox="0 0 12 10"><path d="M1.7 4.3 L4.5 1.5 L10.7 1.5 L10.7 8.7 Z" fill="#b4bac0" stroke="#4e586b" stroke-width="1"/></svg>
<div class="a" style="left:1173px;top:585px;width:13px;height:23px;background:#eef20a;border:1px solid #4e586b;"></div>
<div class="a t b" style="left:1173px;top:589.0px;height:15px;line-height:15px;font-size:11px;font-weight:bold;color:#111;width:13px;text-align:center;">F</div>
<div class="a" style="left:1173px;top:612px;width:13px;height:13px;background:#959da6;border:1px solid #4e586b;"></div>
<div class="a t" style="left:1173px;top:612.0px;height:13px;line-height:13px;font-size:9px;font-weight:normal;color:#111;width:13px;text-align:center;">S</div>
<div class="a" style="left:1190px;top:526px;width:17px;height:120px;background:#a9b0b7;"></div>
<svg class="a" style="left:1192px;top:530px;" width="13" height="13" viewBox="0 0 13 13"><circle cx="6.5" cy="6.5" r="6" fill="#e8e8e8" stroke="#5b6680" stroke-width="1"/></svg>
<div class="a" style="left:1193px;top:547px;width:2px;height:33px;background:#15181e;"></div>
<div class="a" style="left:1196px;top:547px;width:2px;height:33px;background:#15181e;"></div>
<div class="a" style="left:1193px;top:550px;width:5px;height:1px;background:#a9b0b7;"></div>
<svg class="a" style="left:1193px;top:546px;" width="12" height="10" viewBox="0 0 12 10"><path d="M1.7 4.3 L4.5 1.5 L10.7 1.5 L10.7 8.7 Z" fill="#b4bac0" stroke="#4e586b" stroke-width="1"/></svg>
<div class="a" style="left:1192px;top:585px;width:13px;height:23px;background:#eef20a;border:1px solid #4e586b;"></div>
<div class="a t b" style="left:1192px;top:589.0px;height:15px;line-height:15px;font-size:11px;font-weight:bold;color:#111;width:13px;text-align:center;">G</div>
<div class="a" style="left:1192px;top:612px;width:13px;height:13px;background:#959da6;border:1px solid #4e586b;"></div>
<div class="a t" style="left:1192px;top:612.0px;height:13px;line-height:13px;font-size:9px;font-weight:normal;color:#111;width:13px;text-align:center;">S</div>
<div class="a" style="left:1209px;top:526px;width:17px;height:120px;background:#a9b0b7;"></div>
<svg class="a" style="left:1211px;top:530px;" width="13" height="13" viewBox="0 0 13 13"><circle cx="6.5" cy="6.5" r="6" fill="#e8e8e8" stroke="#5b6680" stroke-width="1"/></svg>
<div class="a" style="left:1212px;top:547px;width:2px;height:33px;background:#15181e;"></div>
<div class="a" style="left:1215px;top:547px;width:2px;height:33px;background:#15181e;"></div>
<div class="a" style="left:1212px;top:550px;width:5px;height:1px;background:#a9b0b7;"></div>
<svg class="a" style="left:1212px;top:546px;" width="12" height="10" viewBox="0 0 12 10"><path d="M1.7 4.3 L4.5 1.5 L10.7 1.5 L10.7 8.7 Z" fill="#b4bac0" stroke="#4e586b" stroke-width="1"/></svg>
<div class="a" style="left:1211px;top:585px;width:13px;height:23px;background:#eef20a;border:1px solid #4e586b;"></div>
<div class="a t b" style="left:1211px;top:589.0px;height:15px;line-height:15px;font-size:11px;font-weight:bold;color:#111;width:13px;text-align:center;">H</div>
<div class="a" style="left:1211px;top:612px;width:13px;height:13px;background:#959da6;border:1px solid #4e586b;"></div>
<div class="a t" style="left:1211px;top:612.0px;height:13px;line-height:13px;font-size:9px;font-weight:normal;color:#111;width:13px;text-align:center;">S</div>
<div class="a" style="left:1228px;top:526px;width:17px;height:120px;background:#a9b0b7;"></div>
<svg class="a" style="left:1230px;top:530px;" width="13" height="13" viewBox="0 0 13 13"><circle cx="6.5" cy="6.5" r="6" fill="#e8e8e8" stroke="#5b6680" stroke-width="1"/></svg>
<div class="a" style="left:1231px;top:547px;width:2px;height:33px;background:#15181e;"></div>
<div class="a" style="left:1234px;top:547px;width:2px;height:33px;background:#15181e;"></div>
<div class="a" style="left:1231px;top:550px;width:5px;height:1px;background:#a9b0b7;"></div>
<svg class="a" style="left:1231px;top:546px;" width="12" height="10" viewBox="0 0 12 10"><path d="M1.7 4.3 L4.5 1.5 L10.7 1.5 L10.7 8.7 Z" fill="#b4bac0" stroke="#4e586b" stroke-width="1"/></svg>
<div class="a" style="left:1230px;top:585px;width:13px;height:23px;background:#eef20a;border:1px solid #4e586b;"></div>
<div class="a t b" style="left:1230px;top:589.0px;height:15px;line-height:15px;font-size:11px;font-weight:bold;color:#111;width:13px;text-align:center;">I</div>
<div class="a" style="left:1230px;top:612px;width:13px;height:13px;background:#959da6;border:1px solid #4e586b;"></div>
<div class="a t" style="left:1230px;top:612.0px;height:13px;line-height:13px;font-size:9px;font-weight:normal;color:#111;width:13px;text-align:center;">S</div>
<div class="a" style="left:1247px;top:526px;width:17px;height:120px;background:#a9b0b7;"></div>
<svg class="a" style="left:1249px;top:530px;" width="13" height="13" viewBox="0 0 13 13"><circle cx="6.5" cy="6.5" r="6" fill="#e8e8e8" stroke="#5b6680" stroke-width="1"/></svg>
<div class="a" style="left:1250px;top:547px;width:2px;height:33px;background:#15181e;"></div>
<div class="a" style="left:1253px;top:547px;width:2px;height:33px;background:#15181e;"></div>
<div class="a" style="left:1250px;top:550px;width:5px;height:1px;background:#a9b0b7;"></div>
<svg class="a" style="left:1250px;top:546px;" width="12" height="10" viewBox="0 0 12 10"><path d="M1.7 4.3 L4.5 1.5 L10.7 1.5 L10.7 8.7 Z" fill="#b4bac0" stroke="#4e586b" stroke-width="1"/></svg>
<div class="a" style="left:1249px;top:585px;width:13px;height:23px;background:#eef20a;border:1px solid #4e586b;"></div>
<div class="a t b" style="left:1249px;top:589.0px;height:15px;line-height:15px;font-size:11px;font-weight:bold;color:#111;width:13px;text-align:center;">J</div>
<div class="a" style="left:1249px;top:612px;width:13px;height:13px;background:#959da6;border:1px solid #4e586b;"></div>
<div class="a t" style="left:1249px;top:612.0px;height:13px;line-height:13px;font-size:9px;font-weight:normal;color:#111;width:13px;text-align:center;">S</div>
<div class="a" style="left:1266px;top:526px;width:17px;height:120px;background:#a9b0b7;"></div>
<svg class="a" style="left:1268px;top:530px;" width="13" height="13" viewBox="0 0 13 13"><circle cx="6.5" cy="6.5" r="6" fill="#e8e8e8" stroke="#5b6680" stroke-width="1"/></svg>
<div class="a" style="left:1269px;top:547px;width:2px;height:33px;background:#15181e;"></div>
<div class="a" style="left:1272px;top:547px;width:2px;height:33px;background:#15181e;"></div>
<div class="a" style="left:1269px;top:550px;width:5px;height:1px;background:#a9b0b7;"></div>
<svg class="a" style="left:1269px;top:546px;" width="12" height="10" viewBox="0 0 12 10"><path d="M1.7 4.3 L4.5 1.5 L10.7 1.5 L10.7 8.7 Z" fill="#b4bac0" stroke="#4e586b" stroke-width="1"/></svg>
<div class="a" style="left:1268px;top:585px;width:13px;height:23px;background:#eef20a;border:1px solid #4e586b;"></div>
<div class="a t b" style="left:1268px;top:589.0px;height:15px;line-height:15px;font-size:11px;font-weight:bold;color:#111;width:13px;text-align:center;">K</div>
<div class="a" style="left:1268px;top:612px;width:13px;height:13px;background:#959da6;border:1px solid #4e586b;"></div>
<div class="a t" style="left:1268px;top:612.0px;height:13px;line-height:13px;font-size:9px;font-weight:normal;color:#111;width:13px;text-align:center;">S</div>
<div class="a" style="left:1285px;top:526px;width:17px;height:120px;background:#a9b0b7;"></div>
<svg class="a" style="left:1287px;top:530px;" width="13" height="13" viewBox="0 0 13 13"><circle cx="6.5" cy="6.5" r="6" fill="#e8e8e8" stroke="#5b6680" stroke-width="1"/></svg>
<div class="a" style="left:1288px;top:547px;width:2px;height:33px;background:#15181e;"></div>
<div class="a" style="left:1291px;top:547px;width:2px;height:33px;background:#15181e;"></div>
<div class="a" style="left:1288px;top:550px;width:5px;height:1px;background:#a9b0b7;"></div>
<svg class="a" style="left:1288px;top:546px;" width="12" height="10" viewBox="0 0 12 10"><path d="M1.7 4.3 L4.5 1.5 L10.7 1.5 L10.7 8.7 Z" fill="#b4bac0" stroke="#4e586b" stroke-width="1"/></svg>
<div class="a" style="left:1287px;top:585px;width:13px;height:23px;background:#eef20a;border:1px solid #4e586b;"></div>
<div class="a t b" style="left:1287px;top:589.0px;height:15px;line-height:15px;font-size:11px;font-weight:bold;color:#111;width:13px;text-align:center;">L</div>
<div class="a" style="left:1287px;top:612px;width:13px;height:13px;background:#959da6;border:1px solid #4e586b;"></div>
<div class="a t" style="left:1287px;top:612.0px;height:13px;line-height:13px;font-size:9px;font-weight:normal;color:#111;width:13px;text-align:center;">S</div>
<div class="a" style="left:1306px;top:526px;width:93px;height:120px;background:#a9b0b7;"></div>
<div class="a" style="left:1317px;top:530px;width:35px;height:13px;background:#ececec;border:1px solid #4e586b;border-radius:7px;"></div>
<div class="a t" style="left:1317px;top:529.5px;height:14px;line-height:14px;font-size:10px;font-weight:normal;color:#222;width:35px;text-align:center;">-14.75</div>
<svg class="a" style="left:1320px;top:547px;" width="28" height="36" viewBox="0 0 28 36"><path d="M9.5 1 L19 1 L14.3 6 Z" fill="#97a0a9" stroke="#4e586b" stroke-width="0.9"/><path d="M7.8 29.7 A11.3 11.3 0 1 1 20.8 29.7" fill="none" stroke="#15181e" stroke-width="2.5"/><path d="M14.3 7 L14.3 20" stroke="#15181e" stroke-width="2.2"/></svg>
<div class="a" style="left:1323px;top:595px;width:24px;height:13px;background:#e1e4e8;border:1px solid #4e586b;"></div>
<div class="a t" style="left:1323px;top:594.5px;height:14px;line-height:14px;font-size:10px;font-weight:normal;color:#9098a0;width:24px;text-align:center;">Solo</div>
<svg class="a" style="left:1320px;top:612px;" width="28" height="30" viewBox="0 0 28 30"><path d="M7.8 23.7 A11.3 11.3 0 1 1 20.8 23.7" fill="none" stroke="#3ea3f2" stroke-width="2.5"/><path d="M14.3 13.5 L20.5 25" stroke="#15181e" stroke-width="2"/><path d="M11 26 Q11 21 14.3 21 Q17.6 21 17.6 26" fill="none" stroke="#15181e" stroke-width="1.5"/><rect x="10" y="24" width="2" height="4" fill="#15181e"/><rect x="16.6" y="24" width="2" height="4" fill="#15181e"/></svg>
<div class="a" style="left:1360px;top:530px;width:5px;height:112px;background:#15181e;"></div>
<div class="a" style="left:1366px;top:530px;width:5px;height:112px;background:#15181e;"></div>
<div class="a" style="left:1360px;top:541px;width:11px;height:1px;background:#a9b0b7;"></div>
<div class="a" style="left:1373px;top:531px;width:4px;height:1px;background:#5b6680;"></div>
<div class="a" style="left:1373px;top:541px;width:4px;height:1px;background:#5b6680;"></div>
<div class="a" style="left:1373px;top:552px;width:4px;height:1px;background:#5b6680;"></div>
<div class="a" style="left:1373px;top:563px;width:4px;height:1px;background:#5b6680;"></div>
<div class="a" style="left:1373px;top:574px;width:4px;height:1px;background:#5b6680;"></div>
<div class="a" style="left:1373px;top:585px;width:4px;height:1px;background:#5b6680;"></div>
<div class="a" style="left:1373px;top:596px;width:4px;height:1px;background:#5b6680;"></div>
<div class="a" style="left:1373px;top:606px;width:4px;height:1px;background:#5b6680;"></div>
<div class="a" style="left:1373px;top:615px;width:4px;height:1px;background:#5b6680;"></div>
<div class="a" style="left:1373px;top:622px;width:4px;height:1px;background:#5b6680;"></div>
<div class="a" style="left:1373px;top:628px;width:4px;height:1px;background:#5b6680;"></div>
<div class="a" style="left:1373px;top:634px;width:4px;height:1px;background:#5b6680;"></div>
<div class="a" style="left:1373px;top:638px;width:4px;height:1px;background:#5b6680;"></div>
<div class="a" style="left:1373px;top:642px;width:4px;height:1px;background:#5b6680;"></div>
<svg class="a" style="left:1372px;top:538px;" width="11" height="11" viewBox="0 0 11 11"><path d="M9.5 0.8 L9.5 10 L1 5.4 Z" fill="#97a0a9" stroke="#4e586b" stroke-width="1.1"/></svg>
<div class="a t" style="left:1376px;top:534.75px;height:14.5px;line-height:14.5px;font-size:10.5px;font-weight:normal;color:#222;width:18px;text-align:right;">0</div>
<div class="a t" style="left:1376px;top:556.55px;height:14.5px;line-height:14.5px;font-size:10.5px;font-weight:normal;color:#222;width:18px;text-align:right;">12</div>
<div class="a t" style="left:1376px;top:578.55px;height:14.5px;line-height:14.5px;font-size:10.5px;font-weight:normal;color:#222;width:18px;text-align:right;">24</div>
<div class="a t" style="left:1376px;top:599.55px;height:14.5px;line-height:14.5px;font-size:10.5px;font-weight:normal;color:#222;width:18px;text-align:right;">36</div>
<div class="a t" style="left:1376px;top:615.55px;height:14.5px;line-height:14.5px;font-size:10.5px;font-weight:normal;color:#222;width:18px;text-align:right;">48</div>
<div class="a t" style="left:1376px;top:628.55px;height:14.5px;line-height:14.5px;font-size:10.5px;font-weight:normal;color:#222;width:18px;text-align:right;">60</div>
<div class="a" style="left:1402px;top:573.5px;width:20px;height:13.0px;background:#1f232b;border-radius:6.5px;"></div>
<div class="a t" style="left:1402px;top:574.5px;height:11px;line-height:11px;font-size:7px;font-weight:normal;color:#aab;width:13px;text-align:center;">S</div>
<svg class="a" style="left:1415px;top:554px;" width="14" height="14" viewBox="0 0 14 14"><circle cx="7" cy="7" r="6.5" fill="#eef20a"/></svg>
<div class="a t" style="left:1415px;top:555.5px;height:11px;line-height:11px;font-size:7px;font-weight:normal;color:#333;width:14px;text-align:center;">I·O</div>
<svg class="a" style="left:1415px;top:573px;" width="14" height="14" viewBox="0 0 14 14"><circle cx="7" cy="7" r="6.5" fill="#eef20a"/></svg>
<div class="a t" style="left:1415px;top:574.5px;height:11px;line-height:11px;font-size:7px;font-weight:normal;color:#333;width:14px;text-align:center;">R</div>
<svg class="a" style="left:1415px;top:592px;" width="14" height="14" viewBox="0 0 14 14"><circle cx="7" cy="7" r="6.5" fill="#eef20a"/></svg>
<div class="a t" style="left:1415px;top:593.5px;height:11px;line-height:11px;font-size:7px;font-weight:normal;color:#333;width:14px;text-align:center;">M</div>
<svg class="a" style="left:1415px;top:611px;" width="14" height="14" viewBox="0 0 14 14"><circle cx="7" cy="7" r="6.5" fill="#1f232b"/></svg>
<div class="a t" style="left:1415px;top:612.5px;height:11px;line-height:11px;font-size:7px;font-weight:normal;color:#ccc;width:14px;text-align:center;">D</div>
<svg class="a" style="left:1415px;top:630px;" width="14" height="14" viewBox="0 0 14 14"><circle cx="7" cy="7" r="6.5" fill="#1f232b"/></svg>
<div class="a t" style="left:1415px;top:631.5px;height:11px;line-height:11px;font-size:7px;font-weight:normal;color:#ccc;width:14px;text-align:center;">✕</div>
<div class="a" style="left:8px;top:662px;width:1424px;height:200px;background:#7e8791;border-radius:8px;"></div>
<div class="a" style="left:1314px;top:840px;width:91px;height:52px;background:#7e8791;border-radius:0 0 5px 5px;"></div>
<svg class="a" style="left:1310px;top:862px;" width="4" height="4" viewBox="0 0 4 4"><path d="M4 0 L0 0 A4 4 0 0 1 4 4 Z" fill="#7e8791"/></svg>
<svg class="a" style="left:1405px;top:862px;" width="4" height="4" viewBox="0 0 4 4"><path d="M0 0 L4 0 A4 4 0 0 0 0 4 Z" fill="#7e8791"/></svg>
<div class="a" style="left:23px;top:667px;width:486px;height:190px;background:#a9b0b7;border:1px solid #6b7790;border-radius:6px 6px 0 6px;"></div>
<div class="a" style="left:24px;top:668px;width:484px;height:17px;background:#f7d20e;border-radius:5px 5px 0 0;"></div>
<svg class="a" style="left:27px;top:670px;" width="13" height="13" viewBox="0 0 13 13"><circle cx="6.5" cy="6.5" r="5.8" fill="#c8cf20" stroke="#5a5f46" stroke-width="1"/><circle cx="6.5" cy="6.5" r="4.3" fill="none" stroke="#eef20a" stroke-width="1.2"/><path d="M6.5 3.8 L6.5 8.5" stroke="#5a5f46" stroke-width="1"/></svg>
<div class="a t b" style="left:44px;top:669.0px;height:15px;line-height:15px;font-size:11px;font-weight:bold;color:#111;font-style:italic;">bp.MMF</div>
<svg class="a" style="left:460px;top:670px;" width="13" height="13" viewBox="0 0 13 13"><circle cx="6.5" cy="6.5" r="6" fill="#9aa2ab" stroke="#4e586b" stroke-width="1"/><rect x="3.3" y="4.3" width="6.4" height="4.4" rx="0.8" fill="none" stroke="#111" stroke-width="1.3"/><path d="M4.2 2.8 L4.2 4.3 M8.8 2.8 L8.8 4.3 M4.2 8.7 L4.2 10.2 M8.8 8.7 L8.8 10.2" stroke="#111" stroke-width="1.2"/></svg>
<svg class="a" style="left:476px;top:670px;" width="13" height="13" viewBox="0 0 13 13"><circle cx="6.5" cy="6.5" r="6" fill="#9aa2ab" stroke="#4e586b" stroke-width="1"/><path d="M3.5 6.2 L6.5 3.8 M9.5 6.8 L6.5 9.2" stroke="#111" stroke-width="1.4"/><path d="M2.5 6.5 L5 6.5 L3.5 4.5 Z M10.5 6.5 L8 6.5 L9.5 8.5 Z" fill="#111"/></svg>
<svg class="a" style="left:492px;top:670px;" width="13" height="13" viewBox="0 0 13 13"><circle cx="6.5" cy="6.5" r="6" fill="#9aa2ab" stroke="#4e586b" stroke-width="1"/><path d="M3 3 L9 3 L10 4 L10 10 L3 10 Z" fill="#000"/><rect x="5" y="3.6" width="3" height="1.8" fill="#9aa2ab"/></svg>
<div class="a" style="left:13px;top:742px;width:2px;height:40px;background:#1b1e25;"></div>
<div class="a" style="left:16px;top:742px;width:2px;height:40px;background:#1b1e25;"></div>
<div class="a" style="left:13px;top:746px;width:5px;height:2px;background:#7e8791;"></div>
<div class="a" style="left:511px;top:742px;width:2px;height:40px;background:#1b1e25;"></div>
<div class="a" style="left:514px;top:742px;width:2px;height:40px;background:#1b1e25;"></div>
<div class="a" style="left:511px;top:746px;width:5px;height:2px;background:#7e8791;"></div>
<div class="a" style="left:518px;top:667px;width:909px;height:190px;background:#a9b0b7;"></div>
<div class="a t b" style="left:520px;top:755.5px;height:13px;line-height:13px;font-size:9px;font-weight:bold;color:#111;width:909px;text-align:center;letter-spacing:0.4px;">Drop Audio Effects Here</div>
<div class="a" style="left:26px;top:710px;width:427px;height:17px;background:#000;"></div>
<div class="a t b" style="left:32px;top:711.5px;height:13px;line-height:13px;font-size:9px;font-weight:bold;color:#fff;">Signal</div>
<div class="a t b" style="left:113px;top:711.5px;height:13px;line-height:13px;font-size:9px;font-weight:bold;color:#fff;">CV1 (1v/oct)</div>
<div class="a t b" style="left:219px;top:711.5px;height:13px;line-height:13px;font-size:9px;font-weight:bold;color:#fff;">CV2 (1v/oct)</div>
<div class="a t b" style="left:326px;top:711.5px;height:13px;line-height:13px;font-size:9px;font-weight:bold;color:#fff;">CV3 (0-5v)</div>
<div class="a t b" style="left:404px;top:711.5px;height:13px;line-height:13px;font-size:9px;font-weight:bold;color:#fff;">Res (0-5v)</div>
<div class="a" style="left:26px;top:727px;width:427px;height:20px;background:#5e626b;"></div>
<div class="a t b" style="left:32px;top:730.5px;height:13px;line-height:13px;font-size:9px;font-weight:bold;color:#fff;">MMF (12dB/oct)</div>
<div class="a" style="left:374px;top:729px;width:74px;height:17px;background:#5c6068;border:1px solid #33363b;"></div>
<div class="a t b" style="left:374px;top:730.5px;height:14px;line-height:14px;font-size:10px;font-weight:bold;color:#b5b8bb;width:74px;text-align:center;">bypass</div>
<div class="a" style="left:26px;top:747px;width:427px;height:59px;background:#3a3d42;"></div>
<div class="a" style="left:26px;top:806px;width:427px;height:20px;background:#000;"></div>
<div class="a t b" style="left:32px;top:808.5px;height:13px;line-height:13px;font-size:9px;font-weight:bold;color:#fff;">Output</div>
<svg class="a" style="left:0px;top:0px;overflow:visible;" width="1" height="1" viewBox="0 0 1 1"><path d="M43.75 787.83 A12.5 12.5 0 0 1 46.76 764.93" fill="none" stroke="#3ec8ef" stroke-width="2.6"/><path d="M46.76 764.93 A12.5 12.5 0 0 1 56.25 787.83" fill="none" stroke="#a9abae" stroke-width="2.6"/><path d="M49.84 776.40 L46.76 764.93" stroke="#b8babd" stroke-width="2.2"/></svg>
<div class="a t" style="left:35px;top:751.0px;height:14px;line-height:14px;font-size:10px;font-weight:normal;color:#c4c6c8;width:30px;text-align:center;">Freq</div>
<div class="a t b" style="left:30px;top:786.5px;height:14px;line-height:14px;font-size:10px;font-weight:bold;color:#c4c6c8;width:40px;text-align:center;">932 Hz</div>
<div class="a" style="left:69px;top:752px;width:33px;height:15px;border:1px solid #3ec8ef;"></div>
<div class="a t b" style="left:69px;top:752.5px;height:14px;line-height:14px;font-size:10px;font-weight:bold;color:#3ec8ef;width:33px;text-align:center;">Freq</div>
<svg class="a" style="left:0px;top:0px;overflow:visible;" width="1" height="1" viewBox="0 0 1 1"><path d="M113.75 787.83 A12.5 12.5 0 0 1 125.38 765.72" fill="none" stroke="#3ec8ef" stroke-width="2.6"/><path d="M125.38 765.72 A12.5 12.5 0 0 1 126.25 787.83" fill="none" stroke="#a9abae" stroke-width="2.6"/><path d="M120.27 776.44 L125.38 765.72" stroke="#b8babd" stroke-width="2.2"/></svg>
<div class="a t" style="left:105px;top:751.0px;height:14px;line-height:14px;font-size:10px;font-weight:normal;color:#c4c6c8;width:30px;text-align:center;">CV1</div>
<div class="a t b" style="left:100px;top:786.5px;height:14px;line-height:14px;font-size:10px;font-weight:bold;color:#c4c6c8;width:40px;text-align:center;">58.5 %</div>
<svg class="a" style="left:0px;top:0px;overflow:visible;" width="1" height="1" viewBox="0 0 1 1"><path d="M157.75 787.83 A12.5 12.5 0 1 1 172.51 767.84" fill="none" stroke="#3ec8ef" stroke-width="2.6"/><path d="M172.51 767.84 A12.5 12.5 0 0 1 170.25 787.83" fill="none" stroke="#a9abae" stroke-width="2.6"/><path d="M164.43 776.54 L172.51 767.84" stroke="#b8babd" stroke-width="2.2"/></svg>
<div class="a t" style="left:149px;top:751.0px;height:14px;line-height:14px;font-size:10px;font-weight:normal;color:#c4c6c8;width:30px;text-align:center;">CV2</div>
<div class="a t b" style="left:144px;top:786.5px;height:14px;line-height:14px;font-size:10px;font-weight:bold;color:#c4c6c8;width:40px;text-align:center;">64.3 %</div>
<svg class="a" style="left:0px;top:0px;overflow:visible;" width="1" height="1" viewBox="0 0 1 1"><path d="M201.75 787.83 A12.5 12.5 0 0 1 201.05 787.39" fill="none" stroke="#3ec8ef" stroke-width="2.6"/><path d="M201.05 787.39 A12.5 12.5 0 1 1 214.25 787.83" fill="none" stroke="#a9abae" stroke-width="2.6"/><path d="M207.65 777.52 L201.05 787.39" stroke="#b8babd" stroke-width="2.2"/></svg>
<div class="a t" style="left:193px;top:751.0px;height:14px;line-height:14px;font-size:10px;font-weight:normal;color:#c4c6c8;width:30px;text-align:center;">CV3</div>
<div class="a t b" style="left:188px;top:786.5px;height:14px;line-height:14px;font-size:10px;font-weight:bold;color:#c4c6c8;width:40px;text-align:center;">1.26 %</div>
<svg class="a" style="left:0px;top:0px;overflow:visible;" width="1" height="1" viewBox="0 0 1 1"><path d="M245.75 787.33 A12.5 12.5 0 1 1 262.66 783.03" fill="none" stroke="#3ec8ef" stroke-width="2.6"/><path d="M262.66 783.03 A12.5 12.5 0 0 1 258.25 787.33" fill="none" stroke="#a9abae" stroke-width="2.6"/><path d="M252.53 776.83 L262.66 783.03" stroke="#b8babd" stroke-width="2.2"/></svg>
<div class="a t" style="left:237px;top:751.0px;height:14px;line-height:14px;font-size:10px;font-weight:normal;color:#c4c6c8;width:30px;text-align:center;">Res</div>
<div class="a t b" style="left:232px;top:786.5px;height:14px;line-height:14px;font-size:10px;font-weight:bold;color:#c4c6c8;width:40px;text-align:center;">82.4 %</div>
<div class="a" style="left:264px;top:776px;width:13px;height:1px;background:#a9abae;"></div>
<svg class="a" style="left:0px;top:0px;" width="1" height="1" viewBox="0 0 1 1"><path d="M277.04 779.08 A9 9 0 1 1 294.41 777.25" fill="none" stroke="#b5b7ba" stroke-width="2.2"/><path d="M285.5 775 L285.5 785.5" stroke="#c8cacc" stroke-width="2"/></svg>
<div class="a t" style="left:271px;top:751.0px;height:14px;line-height:14px;font-size:10px;font-weight:normal;color:#c4c6c8;width:30px;text-align:center;">CV</div>
<div class="a t b" style="left:287px;top:775.5px;height:14px;line-height:14px;font-size:10px;font-weight:bold;color:#c4c6c8;">0.00 %</div>
<div class="a" style="left:326px;top:750px;width:45px;height:10px;background:#8d949c;border:1px solid #55595f;"></div>
<div class="a t b" style="left:326.5px;top:749.0px;height:13px;line-height:13px;font-size:9px;font-weight:bold;color:#111;width:45px;text-align:center;letter-spacing:0.4px;">LPF</div>
<div class="a" style="left:326px;top:764px;width:45px;height:10px;background:#3ed0f5;border:1px solid #55595f;"></div>
<div class="a t b" style="left:326.5px;top:763.0px;height:13px;line-height:13px;font-size:9px;font-weight:bold;color:#111;width:45px;text-align:center;letter-spacing:0.4px;">HPF</div>
<div class="a" style="left:326px;top:778px;width:45px;height:10px;background:#8d949c;border:1px solid #55595f;"></div>
<div class="a t b" style="left:326.5px;top:777.0px;height:13px;line-height:13px;font-size:9px;font-weight:bold;color:#111;width:45px;text-align:center;letter-spacing:0.4px;">BPF</div>
<div class="a" style="left:326px;top:792px;width:45px;height:10px;background:#8d949c;border:1px solid #55595f;"></div>
<div class="a t b" style="left:326.5px;top:791.0px;height:13px;line-height:13px;font-size:9px;font-weight:bold;color:#111;width:45px;text-align:center;letter-spacing:0.4px;">Notch</div>
<div class="a" style="left:375px;top:752px;width:74px;height:52px;background:#000;"></div>
<svg class="a" style="left:375px;top:752px;" width="74" height="52" viewBox="0 0 74 52"><path d="M36 51 L45 27 L46 1 L48 10 Q50 19 54 21.5 Q57 24.5 62 24.5 L73 24.5 L73 51 Z" fill="#14353d"/><path d="M46 51 L46 2" stroke="#3eb8d8" stroke-width="1.2"/><path d="M0.5 50.8 L36 50.8 L45 27 L46 0.5 L48 10 Q50 19 54 21.5 Q57 24.5 62 24.5 L73.3 24.5 L73.3 50.8 L46 50.8" fill="none" stroke="#3eb8d8" stroke-width="1.3"/></svg>
<div class="a t" style="left:462px;top:796.75px;height:13.5px;line-height:13.5px;font-size:9.5px;font-weight:normal;color:#f8f8f8;width:40px;text-align:center;letter-spacing:0.3px;-webkit-text-stroke:0.25px #f8f8f8;">Dry/Wet</div>
<svg class="a" style="left:0px;top:0px;overflow:visible;" width="1" height="1" viewBox="0 0 1 1"><path d="M475.70 835.09 A12 12 0 1 1 488.55 814.85" fill="none" stroke="#f25a1e" stroke-width="1.9"/><path d="M488.55 814.85 A12 12 0 0 1 487.70 835.09" fill="none" stroke="#f4f4f4" stroke-width="1.9"/><path d="M482.04 824.21 L488.55 814.85" stroke="#f4f4f4" stroke-width="1.6"/></svg>
<div class="a t b" style="left:462px;top:834.5px;height:14px;line-height:14px;font-size:10px;font-weight:bold;color:#f4f4f4;width:40px;text-align:center;">61.6 %</div>
<svg class="a" style="left:8px;top:872px;" width="19" height="19" viewBox="0 0 19 19"><circle cx="9.5" cy="9.5" r="9.5" fill="#7e8791"/><path d="M5.5 4 L15 9.5 L5.5 15 Z" fill="#1b1e25"/></svg>
<div class="a" style="left:35px;top:870px;width:1055px;height:22px;background:#6b7790;border-radius:5px;"></div>
<div class="a" style="left:39px;top:874px;width:1047px;height:14px;background:#a9b0b7;"></div>
<div class="a t b" style="left:46px;top:874.15px;height:13.7px;line-height:13.7px;font-size:9.7px;font-weight:bold;color:#111;">Latency: 0 samples --- /Users/theloser/Music/Ableton/User Library/Presets/Audio Effects/Max Audio Effect/bp.MMF.amxd</div>
<div class="a" style="left:1098px;top:870px;width:208px;height:22px;background:#7e8791;border-radius:5px;"></div>
<div class="a" style="left:1102px;top:873px;width:200px;height:16px;background:#e0e2e5;"></div>
<div class="a" style="left:1102px;top:873px;width:1px;height:16px;background:#f4a050;"></div>
<svg class="a" style="left:1103px;top:873px;" width="199" height="16" viewBox="0 0 199 16"><path d="M0 2.7h1v3.0h-1ZM0 9.4h1v4.8h-1ZM1 2.5h1v3.4h-1ZM1 10.5h1v2.5h-1ZM2 3.0h1v2.5h-1ZM2 9.9h1v3.7h-1ZM3 2.6h1v3.2h-1ZM3 10.5h1v2.6h-1ZM4 2.4h1v3.5h-1ZM4 10.1h1v3.4h-1ZM5 1.5h1v5.4h-1ZM5 9.8h1v3.9h-1ZM6 2.3h1v3.9h-1ZM6 10.3h1v3.0h-1ZM7 2.8h1v2.7h-1ZM7 10.0h1v3.6h-1ZM8 1.9h1v4.6h-1ZM8 10.5h1v2.5h-1ZM9 2.4h1v3.6h-1ZM9 10.3h1v3.0h-1ZM10 2.6h1v3.2h-1ZM10 9.9h1v3.8h-1ZM11 2.8h1v2.8h-1ZM11 10.1h1v3.3h-1ZM12 2.3h1v3.7h-1ZM12 9.1h1v5.4h-1ZM13 2.6h1v3.2h-1ZM13 10.5h1v2.7h-1ZM14 3.0h1v2.5h-1ZM14 9.9h1v3.8h-1ZM15 2.2h1v4.0h-1ZM15 10.0h1v3.7h-1ZM16 2.5h1v3.4h-1ZM16 9.8h1v3.9h-1ZM17 2.6h1v3.3h-1ZM17 10.5h1v2.5h-1ZM18 2.4h1v3.6h-1ZM18 9.9h1v3.9h-1ZM19 2.7h1v3.1h-1ZM19 10.6h1v2.4h-1ZM20 2.2h1v3.9h-1ZM20 10.5h1v2.5h-1ZM21 2.9h1v2.6h-1ZM21 10.2h1v3.1h-1ZM22 2.9h1v2.5h-1ZM22 10.1h1v3.4h-1ZM23 2.3h1v3.9h-1ZM23 10.3h1v2.9h-1ZM24 2.7h1v3.0h-1ZM24 9.7h1v4.1h-1ZM25 2.8h1v2.7h-1ZM25 10.4h1v2.8h-1ZM26 2.5h1v3.5h-1ZM26 10.6h1v2.4h-1ZM27 2.7h1v3.1h-1ZM27 9.7h1v4.1h-1ZM28 2.5h1v3.3h-1ZM28 9.4h1v4.8h-1ZM29 2.2h1v4.0h-1ZM29 9.8h1v4.0h-1ZM30 2.6h1v3.1h-1ZM30 10.5h1v2.6h-1ZM31 2.3h1v3.7h-1ZM31 10.4h1v2.8h-1ZM32 2.1h1v4.2h-1ZM32 10.6h1v2.4h-1ZM33 2.9h1v2.6h-1ZM33 10.6h1v2.4h-1ZM34 1.8h1v4.7h-1ZM34 10.4h1v2.9h-1ZM35 2.1h1v4.3h-1ZM35 9.8h1v3.9h-1ZM36 2.6h1v3.2h-1ZM36 9.9h1v3.8h-1ZM37 2.7h1v3.0h-1ZM37 9.9h1v3.9h-1ZM38 3.0h1v2.4h-1ZM38 9.5h1v4.6h-1ZM39 1.9h1v4.6h-1ZM39 10.1h1v3.4h-1ZM40 2.2h1v4.0h-1ZM40 10.4h1v2.9h-1ZM41 2.8h1v2.7h-1ZM41 10.1h1v3.4h-1ZM42 2.7h1v3.0h-1ZM42 9.9h1v3.9h-1ZM43 2.2h1v3.9h-1ZM43 9.9h1v3.9h-1ZM44 2.8h1v2.8h-1ZM44 9.7h1v4.2h-1ZM45 3.0h1v2.5h-1ZM45 10.4h1v2.9h-1ZM46 2.1h1v4.1h-1ZM46 9.8h1v4.1h-1ZM47 2.1h1v4.1h-1ZM47 10.4h1v2.8h-1ZM48 2.8h1v2.8h-1ZM48 10.0h1v3.5h-1ZM49 2.2h1v3.9h-1ZM49 10.0h1v3.6h-1ZM50 2.9h1v2.6h-1ZM50 9.8h1v4.0h-1ZM51 2.3h1v3.8h-1ZM51 10.4h1v2.7h-1ZM52 2.7h1v3.0h-1ZM52 9.7h1v4.1h-1ZM53 2.6h1v3.1h-1ZM53 9.9h1v3.7h-1ZM54 2.9h1v2.6h-1ZM54 9.8h1v4.0h-1ZM55 2.9h1v2.7h-1ZM55 9.7h1v4.2h-1ZM56 2.7h1v3.0h-1ZM56 9.9h1v3.8h-1ZM57 2.1h1v4.1h-1ZM57 10.1h1v3.3h-1ZM58 2.6h1v3.2h-1ZM58 9.9h1v3.9h-1ZM59 2.8h1v2.9h-1ZM59 10.4h1v2.8h-1ZM60 2.8h1v2.9h-1ZM60 10.5h1v2.6h-1ZM61 2.7h1v3.0h-1ZM61 10.1h1v3.5h-1ZM62 2.6h1v3.2h-1ZM62 10.1h1v3.3h-1ZM63 1.9h1v4.5h-1ZM63 10.2h1v3.2h-1ZM64 3.0h1v2.4h-1ZM64 10.4h1v2.7h-1ZM65 2.3h1v3.7h-1ZM65 10.3h1v3.0h-1ZM66 2.5h1v3.4h-1ZM66 10.5h1v2.6h-1ZM67 2.8h1v2.8h-1ZM67 9.9h1v3.8h-1ZM68 2.5h1v3.4h-1ZM68 9.8h1v4.0h-1ZM69 2.4h1v3.5h-1ZM69 10.1h1v3.3h-1ZM70 2.6h1v3.2h-1ZM70 10.2h1v3.3h-1ZM71 2.4h1v3.7h-1ZM71 9.8h1v4.1h-1ZM72 2.5h1v3.4h-1ZM72 9.2h1v5.1h-1ZM73 2.9h1v2.6h-1ZM73 10.5h1v2.5h-1ZM74 2.9h1v2.5h-1ZM74 9.9h1v3.8h-1ZM75 2.9h1v2.7h-1ZM75 9.4h1v4.8h-1ZM76 2.2h1v4.0h-1ZM76 10.4h1v2.8h-1ZM77 2.6h1v3.1h-1ZM77 9.7h1v4.2h-1ZM78 2.9h1v2.7h-1ZM78 10.1h1v3.3h-1ZM79 2.8h1v2.8h-1ZM79 9.4h1v4.9h-1ZM80 2.5h1v3.4h-1ZM80 10.6h1v2.4h-1ZM81 2.4h1v3.5h-1ZM81 10.5h1v2.5h-1ZM82 2.3h1v3.8h-1ZM82 10.5h1v2.6h-1ZM83 3.0h1v2.5h-1ZM83 9.8h1v4.1h-1ZM84 2.6h1v3.2h-1ZM84 9.9h1v3.9h-1ZM85 2.9h1v2.7h-1ZM85 10.1h1v3.4h-1ZM86 2.3h1v3.8h-1ZM86 10.0h1v3.6h-1ZM87 2.9h1v2.5h-1ZM87 10.0h1v3.5h-1ZM88 2.9h1v2.6h-1ZM88 10.5h1v2.5h-1ZM89 2.6h1v3.2h-1ZM89 10.1h1v3.4h-1ZM90 2.2h1v4.1h-1ZM90 10.1h1v3.3h-1ZM91 2.9h1v2.6h-1ZM91 10.6h1v2.5h-1ZM92 2.7h1v3.0h-1ZM92 9.9h1v3.8h-1ZM93 2.5h1v3.3h-1ZM93 9.7h1v4.2h-1ZM94 2.2h1v4.1h-1ZM94 9.9h1v3.7h-1ZM95 2.8h1v2.7h-1ZM95 9.2h1v5.3h-1ZM96 2.3h1v3.9h-1ZM96 10.2h1v3.3h-1ZM97 2.6h1v3.1h-1ZM97 10.0h1v3.6h-1ZM98 2.7h1v3.0h-1ZM98 10.0h1v3.7h-1ZM99 2.6h1v3.1h-1ZM99 10.0h1v3.7h-1ZM100 2.9h1v2.5h-1ZM100 10.4h1v2.9h-1ZM101 2.9h1v2.6h-1ZM101 9.8h1v4.0h-1ZM102 2.7h1v2.9h-1ZM102 10.3h1v2.9h-1ZM103 2.9h1v2.7h-1ZM103 10.4h1v2.9h-1ZM104 2.1h1v4.2h-1ZM104 10.4h1v2.8h-1ZM105 2.7h1v3.0h-1ZM105 10.6h1v2.4h-1ZM106 2.6h1v3.3h-1ZM106 10.4h1v2.8h-1ZM107 3.0h1v2.4h-1ZM107 10.5h1v2.6h-1ZM108 2.4h1v3.7h-1ZM108 10.3h1v2.9h-1ZM109 2.5h1v3.5h-1ZM109 9.9h1v3.8h-1ZM110 2.4h1v3.7h-1ZM110 10.2h1v3.1h-1ZM111 1.5h1v5.4h-1ZM111 9.9h1v3.7h-1ZM112 3.0h1v2.5h-1ZM112 9.8h1v4.0h-1ZM113 2.3h1v3.7h-1ZM113 10.5h1v2.7h-1ZM114 2.5h1v3.3h-1ZM114 9.9h1v3.8h-1ZM115 2.5h1v3.5h-1ZM115 10.0h1v3.6h-1ZM116 2.2h1v4.0h-1ZM116 10.5h1v2.6h-1ZM117 2.9h1v2.6h-1ZM117 10.1h1v3.4h-1ZM118 2.4h1v3.5h-1ZM118 9.6h1v4.5h-1ZM119 2.3h1v3.8h-1ZM119 10.1h1v3.3h-1ZM120 1.8h1v4.8h-1ZM120 9.9h1v3.7h-1ZM121 2.9h1v2.5h-1ZM121 9.9h1v3.7h-1ZM122 2.3h1v3.7h-1ZM122 10.2h1v3.3h-1ZM123 2.6h1v3.3h-1ZM123 9.9h1v3.8h-1ZM124 1.8h1v4.8h-1ZM124 10.5h1v2.7h-1ZM125 2.3h1v3.7h-1ZM125 9.5h1v4.6h-1ZM126 2.9h1v2.5h-1ZM126 10.0h1v3.6h-1ZM127 2.4h1v3.6h-1ZM127 10.1h1v3.3h-1ZM128 2.0h1v4.4h-1ZM128 9.8h1v4.0h-1ZM129 2.1h1v4.2h-1ZM129 10.6h1v2.4h-1ZM130 2.3h1v3.9h-1ZM130 10.2h1v3.2h-1ZM131 2.8h1v2.8h-1ZM131 10.4h1v2.8h-1ZM132 2.9h1v2.7h-1ZM132 9.1h1v5.3h-1ZM133 2.3h1v3.9h-1ZM133 9.8h1v4.0h-1ZM134 2.8h1v2.8h-1ZM134 9.6h1v4.5h-1ZM135 3.0h1v2.4h-1ZM135 10.2h1v3.2h-1ZM136 2.9h1v2.7h-1ZM136 10.3h1v3.0h-1ZM137 3.0h1v2.4h-1ZM137 9.2h1v5.1h-1ZM138 2.2h1v4.1h-1ZM138 9.8h1v4.0h-1ZM139 2.7h1v3.1h-1ZM139 9.7h1v4.2h-1ZM140 2.7h1v3.0h-1ZM140 9.8h1v4.1h-1ZM141 2.9h1v2.6h-1ZM141 10.3h1v2.9h-1ZM142 2.8h1v2.8h-1ZM142 10.1h1v3.3h-1ZM143 2.7h1v3.1h-1ZM143 9.8h1v4.0h-1ZM144 2.4h1v3.5h-1ZM144 9.8h1v4.1h-1ZM145 1.8h1v4.9h-1ZM145 9.9h1v3.7h-1ZM146 2.3h1v3.8h-1ZM146 9.7h1v4.1h-1ZM147 1.6h1v5.3h-1ZM147 10.2h1v3.2h-1ZM148 2.7h1v2.9h-1ZM148 9.7h1v4.2h-1ZM149 2.4h1v3.6h-1ZM149 10.1h1v3.4h-1ZM150 2.8h1v2.7h-1ZM150 10.4h1v2.8h-1ZM151 2.6h1v3.3h-1ZM151 9.8h1v4.0h-1ZM152 2.0h1v4.4h-1ZM152 9.8h1v3.9h-1ZM153 2.1h1v4.2h-1ZM153 10.4h1v2.8h-1ZM154 2.5h1v3.4h-1ZM154 9.9h1v3.7h-1ZM155 2.6h1v3.1h-1ZM155 10.3h1v3.1h-1ZM156 2.9h1v2.5h-1ZM156 9.1h1v5.3h-1ZM157 2.5h1v3.3h-1ZM157 9.8h1v4.0h-1ZM158 2.8h1v2.9h-1ZM158 10.2h1v3.1h-1ZM159 2.1h1v4.1h-1ZM159 9.2h1v5.2h-1ZM160 3.0h1v2.5h-1ZM160 9.8h1v4.0h-1ZM161 1.9h1v4.7h-1ZM161 10.2h1v3.1h-1ZM162 2.3h1v3.9h-1ZM162 9.7h1v4.2h-1ZM163 2.9h1v2.6h-1ZM163 10.1h1v3.3h-1ZM164 2.2h1v4.1h-1ZM164 10.0h1v3.6h-1ZM165 2.6h1v3.2h-1ZM165 10.6h1v2.5h-1ZM166 2.8h1v2.8h-1ZM166 10.0h1v3.6h-1ZM167 2.9h1v2.6h-1ZM167 10.0h1v3.5h-1ZM168 2.3h1v3.8h-1ZM168 10.1h1v3.3h-1ZM169 2.7h1v3.1h-1ZM169 9.5h1v4.7h-1ZM170 2.7h1v2.9h-1ZM170 9.7h1v4.1h-1ZM171 2.2h1v4.0h-1ZM171 10.4h1v2.8h-1ZM172 2.1h1v4.1h-1ZM172 9.7h1v4.2h-1ZM173 2.6h1v3.3h-1ZM173 10.2h1v3.2h-1ZM174 2.4h1v3.6h-1ZM174 9.8h1v4.0h-1ZM175 2.7h1v3.0h-1ZM175 10.0h1v3.6h-1ZM176 2.3h1v3.8h-1ZM176 10.1h1v3.3h-1ZM177 2.1h1v4.1h-1ZM177 9.9h1v3.9h-1ZM178 2.8h1v2.8h-1ZM178 10.3h1v2.9h-1ZM179 2.6h1v3.3h-1ZM179 10.4h1v2.8h-1ZM180 2.4h1v3.6h-1ZM180 10.5h1v2.7h-1ZM181 2.8h1v2.8h-1ZM181 9.9h1v3.9h-1ZM182 2.9h1v2.5h-1ZM182 9.8h1v4.0h-1ZM183 2.3h1v3.7h-1ZM183 9.8h1v4.1h-1ZM184 2.8h1v2.7h-1ZM184 9.3h1v4.9h-1ZM185 2.4h1v3.6h-1ZM185 10.3h1v3.1h-1ZM186 2.2h1v3.9h-1ZM186 10.3h1v2.9h-1ZM187 1.5h1v5.3h-1ZM187 9.7h1v4.1h-1ZM188 2.7h1v3.0h-1ZM188 9.9h1v3.9h-1ZM189 3.0h1v2.5h-1ZM189 10.3h1v3.1h-1ZM190 2.8h1v2.7h-1ZM190 9.2h1v5.2h-1ZM191 2.6h1v3.1h-1ZM191 9.3h1v5.0h-1ZM192 2.4h1v3.7h-1ZM192 9.8h1v4.1h-1ZM193 2.3h1v3.7h-1ZM193 10.3h1v3.0h-1ZM194 2.1h1v4.1h-1ZM194 10.4h1v2.9h-1ZM195 2.7h1v3.0h-1ZM195 10.6h1v2.4h-1ZM196 2.2h1v4.0h-1ZM196 9.2h1v5.3h-1Z" fill="#1b1e25"/></svg>
<div class="a" style="left:1265px;top:873px;width:1px;height:16px;background:#000;"></div>
<div class="a t b" style="left:1320px;top:875.5px;height:13px;line-height:13px;font-size:9px;font-weight:bold;color:#111;letter-spacing:0.35px;">1-Audio</div>
<div class="a" style="left:1359px;top:873px;width:41px;height:16px;background:#a9b0b7;"></div>
<div class="a" style="left:1359px;top:873px;width:41px;height:2px;background:#f2c81a;"></div>
<div class="a t b" style="left:1358px;top:875.5px;height:13px;line-height:13px;font-size:9px;font-weight:bold;color:#111;width:41px;text-align:center;letter-spacing:0.2px;">bp.MMF</div>
<svg class="a" style="left:1413px;top:872px;" width="19" height="19" viewBox="0 0 19 19"><circle cx="9.5" cy="9.5" r="9.5" fill="#7e8791"/><path d="M9.5 3.8 L15 14 L4 14 Z" fill="#1b1e25"/></svg>
</body></html>
